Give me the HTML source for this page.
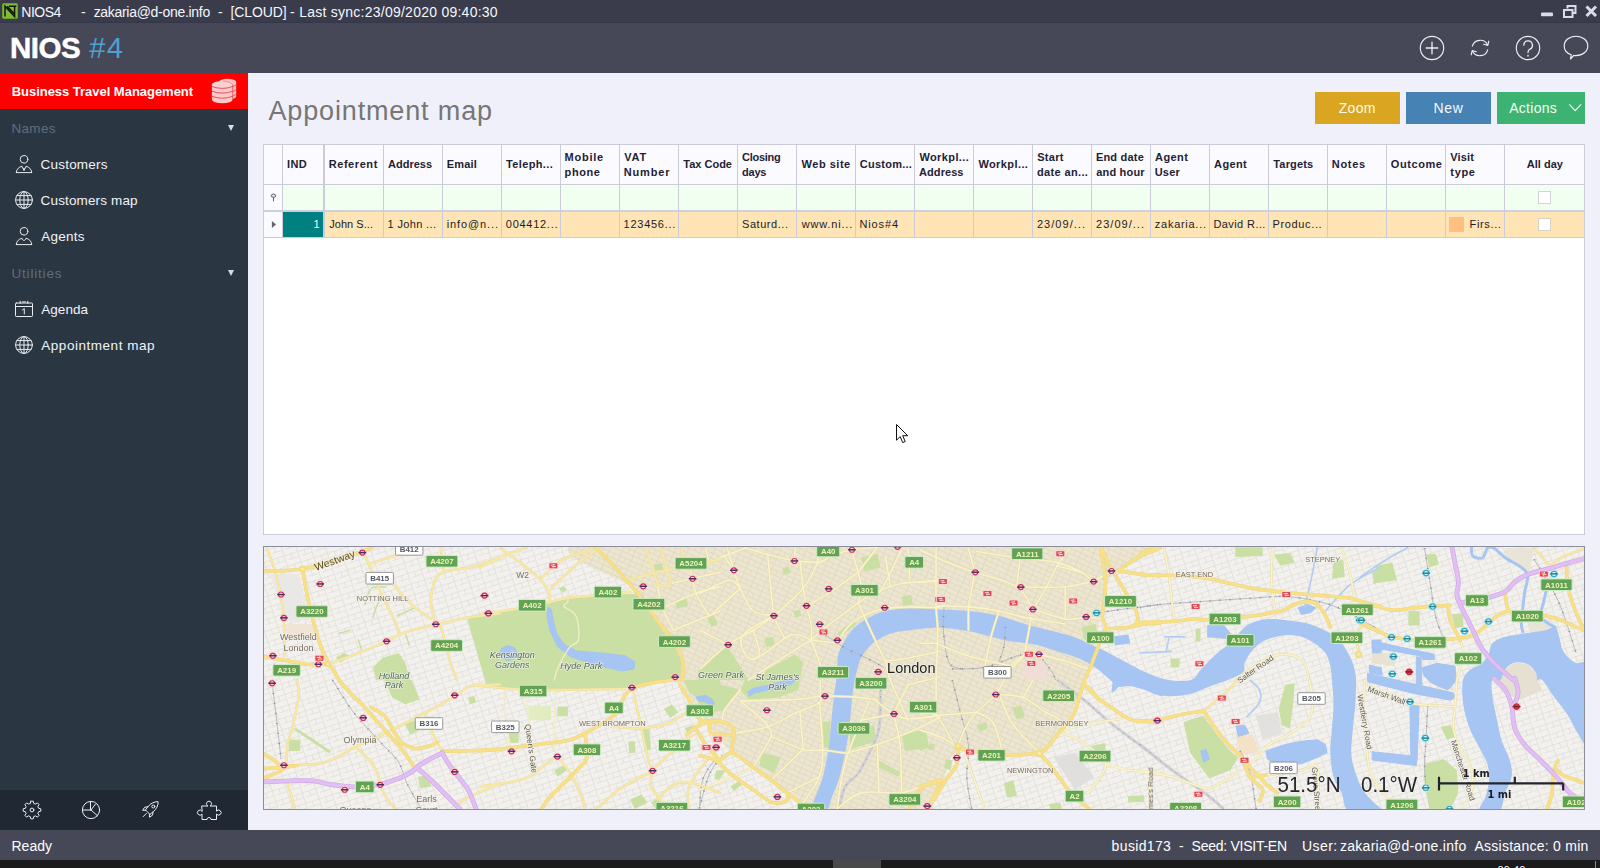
<!DOCTYPE html>
<html lang="en">
<head>
<meta charset="utf-8">
<title>NIOS4 - Appointment map</title>
<style>
*{box-sizing:border-box;margin:0;padding:0}
html,body{width:1600px;height:868px;overflow:hidden;background:#f0f0fa}
body{position:relative;font-family:"Liberation Sans","DejaVu Sans",sans-serif}
.b{position:absolute;display:block}
.t{position:absolute;white-space:pre;display:block}
#map{position:absolute;left:263px;top:546px;width:1322px;height:264px;border:1px solid #8b8d9b;overflow:hidden;background:#f3f1ed}
#map svg{position:absolute;left:0;top:0;display:block}
#map text{font-family:"Liberation Sans","DejaVu Sans",sans-serif}
</style>
</head>
<body>
<div class="b" style="left:0px;top:0px;width:1600px;height:23px;background:#3a3c4c;"></div>
<div class="b" style="left:0px;top:23px;width:1600px;height:50px;background:#464858;"></div>
<div class="b" style="left:0px;top:22px;width:1600px;height:1px;background:#34364a;"></div>
<div class="b" style="left:248px;top:73px;width:1352px;height:757px;background:#f0f0fa;"></div>
<div class="b" style="left:0px;top:73px;width:248px;height:717px;background:#2b3643;"></div>
<div class="b" style="left:0px;top:73px;width:248px;height:36px;background:#ff0000;"></div>
<div class="b" style="left:0px;top:790px;width:248px;height:40px;background:#1f2833;"></div>
<div class="b" style="left:0px;top:830px;width:1600px;height:30px;background:#464858;"></div>
<div class="b" style="left:0px;top:860px;width:1600px;height:8px;background:#1b1b1b;overflow:hidden"></div>
<div class="b" style="left:833px;top:860px;width:48px;height:8px;background:#4a4a4a;"></div>
<div class="b" style="left:1595px;top:861px;width:1px;height:7px;background:#8a8a8a;"></div>
<span class="t" style="left:21.28px;top:4.00px;font-size:14px;line-height:16px;color:#f4f6fb;letter-spacing:-0.499px;">NIOS4</span>
<span class="t" style="left:81.00px;top:4.00px;font-size:14px;line-height:16px;color:#f4f6fb;">-</span>
<span class="t" style="left:93.64px;top:4.00px;font-size:14px;line-height:16px;color:#f4f6fb;letter-spacing:-0.298px;">zakaria@d-one.info</span>
<span class="t" style="left:217.91px;top:4.00px;font-size:14px;line-height:16px;color:#f4f6fb;">-</span>
<span class="t" style="left:230.62px;top:4.00px;font-size:14px;line-height:16px;color:#f4f6fb;letter-spacing:-0.135px;">[CLOUD]</span>
<span class="t" style="left:290.10px;top:4.00px;font-size:14px;line-height:16px;color:#f4f6fb;letter-spacing:0.250px;">- Last sync:23/09/2020 09:40:30</span>
<svg class="b" style="left:2px;top:3px" width="16" height="16" viewBox="0 0 16 16"><rect x="0" y="0" width="16" height="16" rx="2.5" fill="#83bb35"/><rect x="0.5" y="0.5" width="15" height="15" rx="2.2" fill="none" stroke="#6a9c28" stroke-width="1"/><path d="M3 13.5V3.2L12.6 13.5V2.5M7 3.2H14.3M5.2 3.2L12.6 11" fill="none" stroke="#10180a" stroke-width="1.5" stroke-linejoin="miter"/></svg>
<svg class="b" style="left:1536px;top:2px" width="64" height="19" viewBox="1536 2 64 19"><rect x="1541" y="12.5" width="12" height="3.7" rx="1" fill="#d9dcec"/><path d="M1567.5 8.5V6H1575.5V13H1573" fill="none" stroke="#d9dcec" stroke-width="2"/><rect x="1564" y="10" width="8.5" height="7" fill="none" stroke="#d9dcec" stroke-width="2"/><path d="M1586.5 6.5L1596 16M1596 6.5L1586.5 16" stroke="#d9dcec" stroke-width="3" stroke-linecap="butt"/></svg>
<span class="t" style="left:9.98px;top:30.80px;font-size:29.5px;line-height:33px;color:#ffffff;font-weight:700;letter-spacing:-0.468px;-webkit-text-stroke:0.5px #fff;">NIOS</span>
<span class="t" style="left:89.23px;top:31.80px;font-size:29px;line-height:32px;color:#4aa3d3;letter-spacing:1.380px;">#4</span>
<svg class="b" style="left:1410px;top:30px" width="190" height="36" viewBox="1410 30 190 36" fill="none" stroke="#eef0f6" stroke-width="1.15" stroke-linecap="round" stroke-linejoin="round">
<circle cx="1432" cy="48" r="11.7"/><path d="M1432 42.2V53.8M1426.2 48H1437.8" stroke-width="1.3"/>
<path d="M1472.3 46.2A8.2 8.2 0 0 1 1487.6 45M1487.7 49.8A8.2 8.2 0 0 1 1472.4 51"/><path d="M1488.8 41.2L1487.8 45.4L1483.7 44.3M1471.2 54.8L1472.2 50.6L1476.3 51.7"/>
<circle cx="1528" cy="48" r="11.7"/><path d="M1523.8 45.2A4.3 4.3 0 1 1 1529.6 49.3C1528.4 50 1528 50.8 1528 52.5" stroke-width="1.25"/><path d="M1528 55.6V56" stroke-width="1.5"/>
<path d="M1576 36.2C1582.7 36.2 1587.8 40.5 1587.8 45.9C1587.8 51.3 1582.7 55.6 1576 55.6C1575.2 55.6 1574.4 55.5 1573.7 55.4L1570.6 59L1571.2 54.7C1567 53.2 1564.2 49.8 1564.2 45.9C1564.2 40.5 1569.3 36.2 1576 36.2Z"/>
</svg>
<span class="t" style="left:11.65px;top:84.00px;font-size:13px;line-height:15px;color:#ffffff;font-weight:700;letter-spacing:-0.024px;">Business Travel Management</span>
<svg class="b" style="left:210px;top:78px" width="28" height="28" viewBox="0 0 28 28"><path d="M18.8 4A8.700 3.300 0 0 1 26.200 4V18.500A8.700 3.300 0 0 1 18.800 21.500Z" fill="#ffb9b9"/><ellipse cx="17.500" cy="4" rx="8.700" ry="3.200" fill="#ffc4c4"/><path d="M1.900 6.500V21.600A10.400 3.600 0 0 0 22.700 21.600V6.500Z" fill="#ffc9c9"/><ellipse cx="12.300" cy="6.500" rx="10.400" ry="3.600" fill="#ffd0d0"/><path d="M1.900 8.5Q12.300 12.3 22.700 8.5" fill="none" stroke="#d3222f" stroke-width="0.7"/><path d="M1.900 13.2Q12.300 17.0 22.700 13.2" fill="none" stroke="#d3222f" stroke-width="0.7"/><path d="M1.900 18.3Q12.300 22.1 22.700 18.3" fill="none" stroke="#d3222f" stroke-width="0.7"/><path d="M22.700 6.500V21.600" stroke="#d3222f" stroke-width="0.6"/><path d="M13 3.200Q20 3.400 22.700 6.500" fill="none" stroke="#e0505a" stroke-width="0.5"/><path d="M23 8.6L26.200 7.0" stroke="#d3222f" stroke-width="0.6"/><path d="M23 13.4L26.200 11.8" stroke="#d3222f" stroke-width="0.6"/><path d="M23 18L26.200 16.4" stroke="#d3222f" stroke-width="0.6"/></svg>
<span class="t" style="left:11.42px;top:121.00px;font-size:13.5px;line-height:15px;color:#5e6d7f;letter-spacing:0.323px;">Names</span>
<div class="b" style="left:227.5px;top:124.8px;width:0;height:0;border-left:3.800px solid transparent;border-right:3.800px solid transparent;border-top:6.500px solid #d9dde3"></div>
<span class="t" style="left:40.62px;top:157.00px;font-size:13.5px;line-height:15px;color:#f1f3f6;letter-spacing:0.197px;">Customers</span>
<span class="t" style="left:40.62px;top:193.00px;font-size:13.5px;line-height:15px;color:#f1f3f6;letter-spacing:0.137px;">Customers map</span>
<span class="t" style="left:41.30px;top:229.00px;font-size:13.5px;line-height:15px;color:#f1f3f6;letter-spacing:0.231px;">Agents</span>
<span class="t" style="left:11.49px;top:266.00px;font-size:13.5px;line-height:15px;color:#5e6d7f;letter-spacing:0.810px;">Utilities</span>
<div class="b" style="left:227.5px;top:269.8px;width:0;height:0;border-left:3.800px solid transparent;border-right:3.800px solid transparent;border-top:6.500px solid #d9dde3"></div>
<span class="t" style="left:41.30px;top:302.00px;font-size:13.5px;line-height:15px;color:#f1f3f6;letter-spacing:0.025px;">Agenda</span>
<span class="t" style="left:41.30px;top:338.00px;font-size:13.5px;line-height:15px;color:#f1f3f6;letter-spacing:0.531px;">Appointment map</span>
<svg class="b" style="left:0;top:152px" width="48" height="24" viewBox="0 0 48 24" fill="none" stroke="#e9ecf0" stroke-width="1" stroke-linecap="round" stroke-linejoin="round"><circle cx="24" cy="7.300" r="3.800"/><path d="M16.300 20.600C16.400 17.400 18.300 15.400 21.700 14.300M31.700 20.600C31.600 17.400 29.700 15.400 26.300 14.300M16.300 20.600H31.700"/><path d="M21.700 14.300L24 18.300L26.300 14.300M24 18.300V16.200" /></svg>
<svg class="b" style="left:0;top:188px" width="48" height="24" viewBox="0 0 48 24" fill="none" stroke="#e9ecf0" stroke-width="1" stroke-linecap="round" stroke-linejoin="round"><circle cx="24" cy="12" r="8.400"/><ellipse cx="24" cy="12" rx="4.200" ry="8.400"/><path d="M24 3.600V20.400M15.600 12H32.400M16.900 7.600H31.100M16.900 16.400H31.100"/></svg>
<svg class="b" style="left:0;top:224px" width="48" height="24" viewBox="0 0 48 24" fill="none" stroke="#e9ecf0" stroke-width="1" stroke-linecap="round" stroke-linejoin="round"><circle cx="24" cy="7.300" r="3.800"/><path d="M16.300 20.600C16.400 17.400 18.300 15.400 21.700 14.300M31.700 20.600C31.600 17.400 29.700 15.400 26.300 14.300M16.300 20.600H31.700"/><path d="M21.700 14.300C22.500 15.800 23.200 16.400 24 16.400S25.500 15.800 26.300 14.300"/></svg>
<svg class="b" style="left:0;top:297px" width="48" height="24" viewBox="0 0 48 24" fill="none" stroke="#e9ecf0" stroke-width="1" stroke-linecap="round" stroke-linejoin="round"><rect x="15.500" y="6" width="17" height="13.500" rx="0.800"/><path d="M15.500 9.500H32.500M20.200 4.200V6.500M27.800 4.200V6.500M22.300 4.900H25.700"/><path d="M22.400 13.100L24.300 11.600V16.900" stroke-width="1"/></svg>
<svg class="b" style="left:0;top:333px" width="48" height="24" viewBox="0 0 48 24" fill="none" stroke="#e9ecf0" stroke-width="1" stroke-linecap="round" stroke-linejoin="round"><circle cx="24" cy="12" r="8.400"/><ellipse cx="24" cy="12" rx="4.200" ry="8.400"/><path d="M24 3.600V20.400M15.600 12H32.400M16.900 7.600H31.100M16.900 16.400H31.100"/></svg>
<svg class="b" style="left:0;top:790px" width="248" height="40" viewBox="0 790 248 40" fill="none" stroke="#eceff3" stroke-width="1" stroke-linecap="round" stroke-linejoin="round">
<path d="M30.82 801.18L33.18 801.18L33.74 803.43L35.42 804.12L37.40 802.92L39.08 804.60L37.88 806.58L38.57 808.26L40.82 808.82L40.82 811.18L38.57 811.74L37.88 813.42L39.08 815.40L37.40 817.08L35.42 815.88L33.74 816.57L33.18 818.82L30.82 818.82L30.26 816.57L28.58 815.88L26.60 817.08L24.92 815.40L26.12 813.42L25.43 811.74L23.18 811.18L23.18 808.82L25.43 808.26L26.12 806.58L24.92 804.60L26.60 802.92L28.58 804.12L30.26 803.43Z" stroke-linejoin="round"/><circle cx="32" cy="810" r="1.900"/>
<circle cx="91" cy="810" r="8.600"/><path d="M90.500 801.500V810M91 810L95.300 804.300M91 810H83.300M91 810L97.500 815.800"/>
<path d="M157.600 801.600C154.200 801.700 150.800 803.300 148.300 806.300L145.400 809.900L149.900 814.400L153.500 811.500C156.500 809 158.100 805.600 158.200 802.200Z"/><circle cx="153.300" cy="806.500" r="1.500"/><path d="M148 806.700L144.600 807.300L142.600 810.300L145.600 810.200M153.100 811.800L152.500 815.200L149.500 817.200L149.600 814.200M146.300 813.500L143.200 816.600"/>
<path d="M202 806H208A2.500 2.500 0 1 1 210 806H216.500V811.200A2.500 2.500 0 1 1 216.500 814V819.500H211A2 2 0 1 0 207 819.500H202V814A2.500 2.500 0 1 1 202 811.200Z"/>
</svg>
<span class="t" style="left:268.40px;top:96.00px;font-size:27px;line-height:30px;color:#767676;letter-spacing:0.862px;">Appointment map</span>
<div class="b" style="left:1315px;top:92px;width:85px;height:32px;background:#daa520;"></div>
<div class="b" style="left:1406px;top:92px;width:85px;height:32px;background:#4682b4;"></div>
<div class="b" style="left:1497px;top:92px;width:88px;height:32px;background:#3cb371;"></div>
<span class="t" style="left:1338.78px;top:100.00px;font-size:14px;line-height:16px;color:#fffbe8;letter-spacing:0.287px;">Zoom</span>
<span class="t" style="left:1433.48px;top:100.00px;font-size:14px;line-height:16px;color:#f4f8ff;letter-spacing:0.743px;">New</span>
<span class="t" style="left:1509.20px;top:100.00px;font-size:14px;line-height:16px;color:#f2fff6;letter-spacing:0.295px;">Actions</span>
<svg class="b" style="left:1566px;top:100px" width="18" height="14" viewBox="1566 100 18 14"><path d="M1569.300 104.300L1575.200 110.700L1581.100 104.300" fill="none" stroke="#e9f8ee" stroke-width="1.150"/></svg>
<div class="b" style="left:263px;top:144px;width:1322px;height:391px;background:#ffffff;border:1px solid #cbcbda"></div>
<div class="b" style="left:264px;top:145px;width:1320px;height:39px;background:#fbfbff;"></div>
<div class="b" style="left:283px;top:185px;width:1301px;height:25px;background:#f0fff0;"></div>
<div class="b" style="left:264px;top:185px;width:18px;height:25px;background:#fbfbff;"></div>
<div class="b" style="left:264px;top:212px;width:18px;height:25px;background:#fbfbff;"></div>
<div class="b" style="left:283px;top:212px;width:1301px;height:25px;background:#ffe4b5;"></div>
<div class="b" style="left:283px;top:212px;width:40px;height:25px;background:#008080;"></div>
<div class="b" style="left:264px;top:184px;width:1320px;height:1px;background:#cbcbda;"></div>
<div class="b" style="left:264px;top:210px;width:1320px;height:2px;background:#cdcfdc;"></div>
<div class="b" style="left:264px;top:237px;width:1320px;height:1px;background:#cbcbda;"></div>
<div class="b" style="left:282px;top:145px;width:1px;height:93px;background:#cbcbda;"></div>
<div class="b" style="left:324px;top:145px;width:1px;height:93px;background:#cbcbda;"></div>
<div class="b" style="left:383px;top:145px;width:1px;height:93px;background:#cbcbda;"></div>
<div class="b" style="left:442px;top:145px;width:1px;height:93px;background:#cbcbda;"></div>
<div class="b" style="left:501px;top:145px;width:1px;height:93px;background:#cbcbda;"></div>
<div class="b" style="left:560px;top:145px;width:1px;height:93px;background:#cbcbda;"></div>
<div class="b" style="left:619px;top:145px;width:1px;height:93px;background:#cbcbda;"></div>
<div class="b" style="left:678px;top:145px;width:1px;height:93px;background:#cbcbda;"></div>
<div class="b" style="left:737px;top:145px;width:1px;height:93px;background:#cbcbda;"></div>
<div class="b" style="left:796px;top:145px;width:1px;height:93px;background:#cbcbda;"></div>
<div class="b" style="left:855px;top:145px;width:1px;height:93px;background:#cbcbda;"></div>
<div class="b" style="left:914px;top:145px;width:1px;height:93px;background:#cbcbda;"></div>
<div class="b" style="left:973px;top:145px;width:1px;height:93px;background:#cbcbda;"></div>
<div class="b" style="left:1032px;top:145px;width:1px;height:93px;background:#cbcbda;"></div>
<div class="b" style="left:1091px;top:145px;width:1px;height:93px;background:#cbcbda;"></div>
<div class="b" style="left:1150px;top:145px;width:1px;height:93px;background:#cbcbda;"></div>
<div class="b" style="left:1209px;top:145px;width:1px;height:93px;background:#cbcbda;"></div>
<div class="b" style="left:1268px;top:145px;width:1px;height:93px;background:#cbcbda;"></div>
<div class="b" style="left:1327px;top:145px;width:1px;height:93px;background:#cbcbda;"></div>
<div class="b" style="left:1386px;top:145px;width:1px;height:93px;background:#cbcbda;"></div>
<div class="b" style="left:1445px;top:145px;width:1px;height:93px;background:#cbcbda;"></div>
<div class="b" style="left:1504px;top:145px;width:1px;height:93px;background:#cbcbda;"></div>
<div class="b" style="left:323px;top:145px;width:1px;height:93px;background:#cbcbda;"></div>
<span class="t" style="left:286.89px;top:158.00px;font-size:11px;line-height:12px;color:#1f2233;font-weight:700;letter-spacing:0.454px;">IND</span>
<span class="t" style="left:328.69px;top:158.00px;font-size:11px;line-height:12px;color:#1f2233;font-weight:700;letter-spacing:0.570px;">Referent</span>
<span class="t" style="left:388.12px;top:158.00px;font-size:11px;line-height:12px;color:#1f2233;font-weight:700;letter-spacing:-0.019px;">Address</span>
<span class="t" style="left:446.79px;top:158.00px;font-size:11px;line-height:12px;color:#1f2233;font-weight:700;letter-spacing:0.161px;">Email</span>
<span class="t" style="left:506.09px;top:158.00px;font-size:11px;line-height:12px;color:#1f2233;font-weight:700;letter-spacing:0.356px;">Teleph...</span>
<span class="t" style="left:683.29px;top:158.00px;font-size:11px;line-height:12px;color:#1f2233;font-weight:700;">Tax Code</span>
<span class="t" style="left:801.60px;top:158.00px;font-size:11px;line-height:12px;color:#1f2233;font-weight:700;letter-spacing:0.506px;">Web site</span>
<span class="t" style="left:859.86px;top:158.00px;font-size:11px;line-height:12px;color:#1f2233;font-weight:700;letter-spacing:0.222px;">Custom...</span>
<span class="t" style="left:978.40px;top:158.00px;font-size:11px;line-height:12px;color:#1f2233;font-weight:700;letter-spacing:0.411px;">Workpl...</span>
<span class="t" style="left:1214.12px;top:158.00px;font-size:11px;line-height:12px;color:#1f2233;font-weight:700;letter-spacing:0.357px;">Agent</span>
<span class="t" style="left:1273.29px;top:158.00px;font-size:11px;line-height:12px;color:#1f2233;font-weight:700;letter-spacing:0.168px;">Targets</span>
<span class="t" style="left:1331.79px;top:158.00px;font-size:11px;line-height:12px;color:#1f2233;font-weight:700;letter-spacing:0.706px;">Notes</span>
<span class="t" style="left:1390.76px;top:158.00px;font-size:11px;line-height:12px;color:#1f2233;font-weight:700;letter-spacing:0.590px;">Outcome</span>
<span class="t" style="left:1526.82px;top:158.00px;font-size:11px;line-height:12px;color:#1f2233;font-weight:700;letter-spacing:0.008px;">All day</span>
<span class="t" style="left:564.58px;top:151.00px;font-size:11px;line-height:12px;color:#1f2233;font-weight:700;letter-spacing:0.752px;">Mobile</span>
<span class="t" style="left:564.58px;top:166.00px;font-size:11px;line-height:12px;color:#1f2233;font-weight:700;letter-spacing:0.600px;">phone</span>
<span class="t" style="left:624.35px;top:151.00px;font-size:11px;line-height:12px;color:#1f2233;font-weight:700;letter-spacing:0.694px;">VAT</span>
<span class="t" style="left:623.68px;top:166.00px;font-size:11px;line-height:12px;color:#1f2233;font-weight:700;letter-spacing:0.860px;">Number</span>
<span class="t" style="left:742.06px;top:151.00px;font-size:11px;line-height:12px;color:#1f2233;font-weight:700;letter-spacing:-0.277px;">Closing</span>
<span class="t" style="left:742.06px;top:166.00px;font-size:11px;line-height:12px;color:#1f2233;font-weight:700;letter-spacing:-0.233px;">days</span>
<span class="t" style="left:919.40px;top:151.00px;font-size:11px;line-height:12px;color:#1f2233;font-weight:700;letter-spacing:0.398px;">Workpl...</span>
<span class="t" style="left:919.12px;top:166.00px;font-size:11px;line-height:12px;color:#1f2233;font-weight:700;letter-spacing:0.048px;">Address</span>
<span class="t" style="left:1037.20px;top:151.00px;font-size:11px;line-height:12px;color:#1f2233;font-weight:700;letter-spacing:0.315px;">Start</span>
<span class="t" style="left:1037.06px;top:166.00px;font-size:11px;line-height:12px;color:#1f2233;font-weight:700;letter-spacing:0.355px;">date an...</span>
<span class="t" style="left:1095.88px;top:151.00px;font-size:11px;line-height:12px;color:#1f2233;font-weight:700;letter-spacing:0.204px;">End date</span>
<span class="t" style="left:1096.30px;top:166.00px;font-size:11px;line-height:12px;color:#1f2233;font-weight:700;letter-spacing:0.174px;">and hour</span>
<span class="t" style="left:1155.02px;top:151.00px;font-size:11px;line-height:12px;color:#1f2233;font-weight:700;letter-spacing:0.419px;">Agent</span>
<span class="t" style="left:1154.64px;top:166.00px;font-size:11px;line-height:12px;color:#1f2233;font-weight:700;letter-spacing:0.250px;">User</span>
<span class="t" style="left:1450.35px;top:151.00px;font-size:11px;line-height:12px;color:#1f2233;font-weight:700;letter-spacing:0.137px;">Visit</span>
<span class="t" style="left:1450.29px;top:166.00px;font-size:11px;line-height:12px;color:#1f2233;font-weight:700;letter-spacing:0.687px;">type</span>
<span class="t" style="left:313.57px;top:218.00px;font-size:11px;line-height:12px;color:#ffffff;">1</span>
<span class="t" style="left:329.23px;top:218.00px;font-size:11px;line-height:12px;color:#1c1c22;letter-spacing:0.042px;">John S...</span>
<span class="t" style="left:387.57px;top:218.00px;font-size:11px;line-height:12px;color:#1c1c22;letter-spacing:0.353px;">1 John ...</span>
<span class="t" style="left:446.79px;top:218.00px;font-size:11px;line-height:12px;color:#1c1c22;letter-spacing:0.877px;">info@n...</span>
<span class="t" style="left:505.79px;top:218.00px;font-size:11px;line-height:12px;color:#1c1c22;letter-spacing:0.729px;">004412...</span>
<span class="t" style="left:623.57px;top:218.00px;font-size:11px;line-height:12px;color:#1c1c22;letter-spacing:0.743px;">123456...</span>
<span class="t" style="left:742.00px;top:218.00px;font-size:11px;line-height:12px;color:#1c1c22;letter-spacing:0.551px;">Saturd...</span>
<span class="t" style="left:801.63px;top:218.00px;font-size:11px;line-height:12px;color:#1c1c22;letter-spacing:0.833px;">www.ni...</span>
<span class="t" style="left:859.42px;top:218.00px;font-size:11px;line-height:12px;color:#1c1c22;letter-spacing:0.889px;">Nios#4</span>
<span class="t" style="left:1036.95px;top:218.00px;font-size:11px;line-height:12px;color:#1c1c22;letter-spacing:1.038px;">23/09/...</span>
<span class="t" style="left:1096.05px;top:218.00px;font-size:11px;line-height:12px;color:#1c1c22;letter-spacing:1.025px;">23/09/...</span>
<span class="t" style="left:1154.86px;top:218.00px;font-size:11px;line-height:12px;color:#1c1c22;letter-spacing:0.722px;">zakaria...</span>
<span class="t" style="left:1213.52px;top:218.00px;font-size:11px;line-height:12px;color:#1c1c22;letter-spacing:0.398px;">David R...</span>
<span class="t" style="left:1272.52px;top:218.00px;font-size:11px;line-height:12px;color:#1c1c22;letter-spacing:0.643px;">Produc...</span>
<span class="t" style="left:1469.62px;top:218.00px;font-size:11px;line-height:12px;color:#1c1c22;letter-spacing:0.628px;">Firs...</span>
<div class="b" style="left:1449px;top:217px;width:15px;height:15px;background:#ffbf80;"></div>
<div class="b" style="left:1538px;top:191px;width:13px;height:13px;background:#ffffff;border:1px solid #d2d2dc"></div>
<div class="b" style="left:1538px;top:218px;width:13px;height:13px;background:#ffffff;border:1px solid #d9d2c4"></div>
<svg class="b" style="left:266px;top:188px" width="16" height="46" viewBox="266 188 16 46"><path d="M271.900 220.900L276 224.500L271.900 228.100Z" fill="#62656e"/><ellipse cx="273.500" cy="195.700" rx="2.300" ry="1.600" fill="#e9e9ee" stroke="#5d616c" stroke-width="1"/><path d="M273.500 197.300V201.300" stroke="#5d616c" stroke-width="1"/></svg>
<span class="t" style="left:11.48px;top:838.00px;font-size:14px;line-height:16px;color:#ffffff;letter-spacing:0.015px;">Ready</span>
<span class="t" style="left:1111.62px;top:837.50px;font-size:14px;line-height:16px;color:#ffffff;letter-spacing:0.352px;">busid173</span>
<span class="t" style="left:1179.11px;top:837.50px;font-size:14px;line-height:16px;color:#ffffff;">-</span>
<span class="t" style="left:1191.57px;top:837.50px;font-size:14px;line-height:16px;color:#ffffff;letter-spacing:-0.261px;">Seed: VISIT-EN</span>
<span class="t" style="left:1302.05px;top:837.50px;font-size:14px;line-height:16px;color:#ffffff;letter-spacing:0.438px;">User:</span>
<span class="t" style="left:1340.04px;top:837.50px;font-size:14px;line-height:16px;color:#ffffff;letter-spacing:0.266px;">zakaria@d-one.info</span>
<span class="t" style="left:1474.40px;top:837.50px;font-size:14px;line-height:16px;color:#ffffff;letter-spacing:0.268px;">Assistance: 0 min</span>
<span class="t" style="left:1497.59px;top:864.00px;font-size:11px;line-height:12px;color:#ffffff;letter-spacing:0.074px;">09:40</span>
<svg class="b" style="left:895px;top:423px" width="16" height="22" viewBox="0 0 16 22"><path d="M1.500 1.500V17.200L5.200 13.600L7.700 19.600L10.200 18.500L7.700 12.700H12.700Z" fill="#ffffff" stroke="#111" stroke-width="1" stroke-linejoin="miter"/></svg>
<div id="map">
<svg width="1320" height="262" viewBox="264 547 1320 262">
<defs>
<pattern id="g1" width="14" height="11" patternUnits="userSpaceOnUse" patternTransform="rotate(-18)"><path d="M0 0.500H14M0.500 0V11M7.500 0V5.500M3.500 5.500H14" fill="none" stroke="#dcd9d3" stroke-width="0.6"/></pattern>
<pattern id="g2" width="12" height="10" patternUnits="userSpaceOnUse" patternTransform="rotate(24)"><path d="M0 0.500H12M0.500 0V10M6.500 5V10M0 5.500H12" fill="none" stroke="#dbd3bc" stroke-width="0.6"/></pattern>
<filter id="soft" x="-2%" y="-5%" width="104%" height="110%"><feGaussianBlur stdDeviation="0.62"/></filter>
<filter id="soft2" x="-20%" y="-20%" width="140%" height="140%"><feGaussianBlur stdDeviation="0.38"/></filter>
<linearGradient id="pkg" x1="0" y1="0" x2="1" y2="0"><stop offset="0" stop-color="#c9dea6"/><stop offset="1" stop-color="#cfe2ad"/></linearGradient>
</defs>
<g filter="url(#soft)">
<rect x="254" y="537" width="1340" height="282" fill="#f3f1ed"/>
<rect x="254" y="537" width="1340" height="282" fill="url(#g1)"/>
<path d="M598.0 540.0C518.0 548.0 623.0 576.0 632.0 588.0C641.0 600.0 644.7 600.7 652.0 612.0C659.3 623.3 671.3 645.0 676.0 656.0C680.7 667.0 677.3 670.7 680.0 678.0C682.7 685.3 687.3 692.3 692.0 700.0C696.7 707.7 703.3 717.3 708.0 724.0C712.7 730.7 715.3 734.7 720.0 740.0C724.7 745.3 728.0 749.3 736.0 756.0C744.0 762.7 757.3 772.7 768.0 780.0C778.7 787.3 792.7 794.0 800.0 800.0C807.3 806.0 791.0 813.3 812.0 816.0C833.0 818.7 906.0 818.7 926.0 816.0C946.0 813.3 928.8 806.8 932.0 800.0C935.2 793.2 940.8 783.0 945.0 775.0C949.2 767.0 947.8 755.5 957.0 752.0C966.2 748.5 986.2 754.0 1000.0 754.0C1013.8 754.0 1029.3 756.3 1040.0 752.0C1050.7 747.7 1057.3 738.0 1064.0 728.0C1070.7 718.0 1074.7 706.0 1080.0 692.0C1085.3 678.0 1092.7 656.7 1096.0 644.0C1099.3 631.3 1098.0 626.7 1100.0 616.0C1102.0 605.3 1106.0 592.7 1108.0 580.0C1110.0 567.3 1197.0 546.7 1112.0 540.0C1027.0 533.3 678.0 532.0 598.0 540.0Z" fill="#ece5cf"/>
<path d="M598.0 540.0C518.0 548.0 623.0 576.0 632.0 588.0C641.0 600.0 644.7 600.7 652.0 612.0C659.3 623.3 671.3 645.0 676.0 656.0C680.7 667.0 677.3 670.7 680.0 678.0C682.7 685.3 687.3 692.3 692.0 700.0C696.7 707.7 703.3 717.3 708.0 724.0C712.7 730.7 715.3 734.7 720.0 740.0C724.7 745.3 728.0 749.3 736.0 756.0C744.0 762.7 757.3 772.7 768.0 780.0C778.7 787.3 792.7 794.0 800.0 800.0C807.3 806.0 791.0 813.3 812.0 816.0C833.0 818.7 906.0 818.7 926.0 816.0C946.0 813.3 928.8 806.8 932.0 800.0C935.2 793.2 940.8 783.0 945.0 775.0C949.2 767.0 947.8 755.5 957.0 752.0C966.2 748.5 986.2 754.0 1000.0 754.0C1013.8 754.0 1029.3 756.3 1040.0 752.0C1050.7 747.7 1057.3 738.0 1064.0 728.0C1070.7 718.0 1074.7 706.0 1080.0 692.0C1085.3 678.0 1092.7 656.7 1096.0 644.0C1099.3 631.3 1098.0 626.7 1100.0 616.0C1102.0 605.3 1106.0 592.7 1108.0 580.0C1110.0 567.3 1197.0 546.7 1112.0 540.0C1027.0 533.3 678.0 532.0 598.0 540.0Z" fill="url(#g2)"/>
<polygon points="1500.3,680 1505.2,669 1514.8,662.600 1527.7,664.2 1535.8,672.3 1537.4,680 1542,690 1520,700 1500,690" fill="#e6e0d2"/>
<polygon points="269.7,573.9 298.7,573.9 306.8,607.7 310.0,620.6 287.4,620.6 274.5,588.4" fill="#e9e8e7"/>
<polygon points="285.8,623.9 313.2,623.9 318.1,636.8 287.4,636.8" fill="#f0e4d6"/>
<polygon points="528.4,705.8 551.0,705.8 551.0,720.3 528.4,720.3" fill="#e1ecc0"/>
<polygon points="1505.2,548.1 1534.2,548.1 1529.4,572.3 1505.2,559.4" fill="#e9e4d8"/>
<polygon points="1527.7,619.0 1551.9,619.0 1555.2,630.3 1531.0,635.2" fill="#e9e4d8"/>
<polygon points="1201.3,728.4 1211.0,725.2 1219.0,741.3 1209.4,744.5" fill="#f2d6d0"/>
<polygon points="1235.2,733.2 1252.9,734.8 1259.4,752.6 1240.0,755.8" fill="#f3e1c8"/>
<polygon points="1256.1,715.5 1277.1,712.3 1281.9,733.2 1262.6,739.7" fill="#e2e1e0"/>
<polygon points="1053.9,757.4 1074.8,752.6 1094.2,776.8 1074.8,789.7" fill="#e0dfde"/>
<polygon points="1023.2,662.6 1042.6,661.0 1049.0,680.0 1026.5,680.0" fill="#f1dcd8"/>
<polygon points="1372.1,651.3 1396.1,655.0 1395.1,666.1 1371.2,663.3" fill="#e9e1d2"/>
<polygon points="1431.1,673.4 1449.5,675.3 1453.2,690.0 1436.6,688.2" fill="#e9e1d2"/>
<path d="M364.8 604.5C365.9 601.8 367.8 591.4 371.3 588.4C374.8 585.4 383.4 587.1 385.8 586.8" fill="none" stroke="#cadfa4" stroke-width="1.600" stroke-linecap="round"/>
<path d="M372.9 617.4C374.0 614.7 376.7 604.2 379.4 601.3C382.1 598.3 387.4 600.0 389.0 599.7" fill="none" stroke="#cadfa4" stroke-width="1.600" stroke-linecap="round"/>
<path d="M397.1 615.8 L414.8 607.7" fill="none" stroke="#cadfa4" stroke-width="1.600" stroke-linecap="round"/>
<path d="M339.0 633.5 L350.3 630.3" fill="none" stroke="#cadfa4" stroke-width="1.600" stroke-linecap="round"/>
<path d="M358.4 640.0 L361.6 649.7" fill="none" stroke="#cadfa4" stroke-width="1.600" stroke-linecap="round"/>
<path d="M406.0 635.2 L409.2 644.8" fill="none" stroke="#cadfa4" stroke-width="1.600" stroke-linecap="round"/>
<polygon points="372.9,667.4 382.6,657.7 398.7,652.9 405.2,662.6 410.0,680.0 376.1,680.0" fill="#cadfa4"/>
<polygon points="335.8,657.7 343.9,652.9 350.3,656.1 340.6,662.6" fill="#cadfa4"/>
<polygon points="384.2,680.0 411.6,680.0 419.7,699.4 405.2,704.2 392.3,697.7" fill="#cadfa4"/>
<polygon points="292.3,728.4 297.1,728.4 331.0,751.0 329.4,753.4" fill="#cadfa4"/>
<polygon points="289.0,739.7 300.3,739.7 300.3,751.0 289.0,751.0" fill="#cadfa4"/>
<polygon points="405.2,723.5 416.5,720.3 419.7,730.0 410.0,734.8" fill="#cadfa4"/>
<polygon points="418.1,776.8 429.4,775.2 431.0,786.5 419.7,788.1" fill="#cadfa4"/>
<polygon points="468.1,697.7 474.5,696.1 476.1,702.6 469.7,704.2" fill="#cadfa4"/>
<polygon points="467.1,618.1 480.0,614.2 518.7,608.5 549.4,602.1 567.1,598.1 592.9,595.6 630.0,594.0 642.9,594.8 651.0,612.6 662.3,630.3 675.2,648.1 681.6,662.6 680.0,680.0 484.8,680.0" fill="#cadfa4"/>
<polygon points="675.2,599.7 686.5,598.1 688.1,606.1 676.8,608.5" fill="#cadfa4"/>
<polygon points="705.8,615.8 712.3,614.2 717.9,623.9 712.3,626.3" fill="#cadfa4"/>
<polygon points="654.2,564.2 662.3,563.4 663.1,569.8 655.0,570.6" fill="#cadfa4"/>
<polygon points="559.0,588.4 563.9,586.0 567.1,590.0 562.3,592.4" fill="#cadfa4"/>
<polygon points="484.8,679.2 680.8,679.2 665.5,680.8 641.3,684.8 625.2,688.4 555.8,689.4 520.3,688.4 486.5,686.8" fill="#cadfa4"/>
<polygon points="663.9,709.0 671.9,704.2 678.4,712.3 670.3,717.9" fill="#cadfa4"/>
<polygon points="683.5,680.0 720.0,680.0 720.0,702.6 705.8,704.2 689.7,692.9" fill="#cadfa4"/>
<polygon points="557.4,706.6 567.9,706.6 567.9,716.3 557.4,716.3" fill="#cadfa4"/>
<polygon points="628.4,741.3 634.8,741.3 635.6,752.6 629.2,753.4" fill="#cadfa4"/>
<polygon points="642.9,728.4 649.4,728.4 651.0,749.4 644.5,751.0" fill="#cadfa4"/>
<polygon points="554.2,770.3 563.9,765.5 567.1,770.3 557.4,776.8" fill="#cadfa4"/>
<polygon points="630.0,799.4 641.3,794.5 647.7,802.6 634.8,809.0" fill="#cadfa4"/>
<polygon points="651.0,802.6 657.4,797.7 662.3,804.2 655.8,809.0" fill="#cadfa4"/>
<polygon points="509.0,733.2 518.7,733.2 518.7,742.9 509.0,742.9" fill="#cadfa4"/>
<polygon points="684.8,728.4 691.3,725.2 694.5,728.4 688.1,733.2" fill="#cadfa4"/>
<polygon points="698.4,680.0 698.4,669.0 727.4,646.5 741.9,669.0 748.4,680.0" fill="#cadfa4"/>
<polygon points="759.7,680.0 767.7,669.0 795.2,654.5 803.2,662.6 800.0,680.0" fill="#cadfa4"/>
<polygon points="782.3,568.2 788.7,566.6 790.3,573.1 783.9,574.7" fill="#cadfa4"/>
<polygon points="793.5,611.0 800.0,609.4 801.6,615.8 795.2,617.4" fill="#cadfa4"/>
<polygon points="764.5,638.4 772.6,636.8 775.0,644.8 766.1,647.3" fill="#cadfa4"/>
<polygon points="706.5,615.8 712.9,613.4 717.7,623.9 711.3,627.1" fill="#cadfa4"/>
<polygon points="861.3,557.7 877.4,553.7 880.6,567.4 864.5,571.5" fill="#cadfa4"/>
<polygon points="901.6,596.5 911.3,594.8 912.9,604.5 903.2,606.1" fill="#cadfa4"/>
<polygon points="837.1,633.5 853.2,620.6 856.5,623.9 840.3,636.8" fill="#cadfa4"/>
<polygon points="745.2,679.2 800.0,679.2 798.4,689.7 777.4,697.7 748.4,699.4 740.3,689.7" fill="#cadfa4"/>
<polygon points="698.4,679.2 740.3,689.7 724.2,710.6 712.9,712.3 698.4,704.2" fill="#cadfa4"/>
<polygon points="822.6,721.9 830.6,721.1 829.0,747.7 824.2,747.7" fill="#cadfa4"/>
<polygon points="850.0,728.4 874.2,725.2 875.8,741.3 850.0,749.4" fill="#cadfa4"/>
<polygon points="901.6,733.2 925.8,730.0 929.0,747.7 904.8,751.0" fill="#cadfa4"/>
<polygon points="761.3,752.6 780.6,757.4 774.2,773.5 759.7,765.5" fill="#cadfa4"/>
<polygon points="716.1,770.3 725.8,770.3 719.4,780.0 714.5,778.4" fill="#cadfa4"/>
<polygon points="730.6,786.5 740.3,780.0 741.9,784.8 733.9,791.3" fill="#cadfa4"/>
<polygon points="879.0,760.6 900.0,771.9 898.4,776.8 877.4,767.1" fill="#cadfa4"/>
<polygon points="1081.3,627.1 1095.8,623.9 1097.4,636.8 1084.5,640.0" fill="#cadfa4"/>
<polygon points="1011.9,707.4 1021.6,705.8 1024.8,717.1 1016.8,719.5" fill="#cadfa4"/>
<polygon points="976.5,725.2 986.1,721.9 987.7,728.4 979.7,731.6" fill="#cadfa4"/>
<polygon points="920.0,731.6 926.5,733.2 928.1,747.7 920.0,751.0" fill="#cadfa4"/>
<polygon points="928.1,744.5 934.5,743.7 934.5,749.4 928.9,750.2" fill="#cadfa4"/>
<polygon points="945.8,759.0 952.3,760.6 950.6,770.3 944.2,767.9" fill="#cadfa4"/>
<polygon points="1003.9,783.2 1013.5,780.0 1016.8,796.1 1007.1,797.7" fill="#cadfa4"/>
<polygon points="1091.0,746.1 1105.5,742.9 1105.5,751.0 1094.2,752.6" fill="#cadfa4"/>
<polygon points="1128.1,796.1 1144.2,795.3 1144.2,801.8 1128.1,802.6" fill="#cadfa4"/>
<polygon points="1049.0,804.2 1060.3,802.6 1061.9,809.0 1050.6,809.0" fill="#cadfa4"/>
<polygon points="1235.2,547.3 1262.6,547.3 1262.6,556.1 1235.2,556.9" fill="#cadfa4"/>
<polygon points="1273.9,554.5 1290.0,552.9 1294.8,562.6 1280.3,565.8" fill="#cadfa4"/>
<polygon points="1333.5,562.6 1343.2,559.4 1344.8,577.1 1331.9,578.7" fill="#cadfa4"/>
<polygon points="1195.6,628.7 1200.5,628.7 1200.5,641.6 1195.6,641.6" fill="#cadfa4"/>
<polygon points="1170.6,658.5 1179.5,658.5 1179.5,667.4 1170.6,667.4" fill="#cadfa4"/>
<polygon points="1372.3,572.3 1381.1,569.0 1381.1,581.9 1373.9,583.5" fill="#cadfa4"/>
<polygon points="1183.5,721.9 1202.9,715.5 1215.8,733.2 1230.3,751.0 1238.4,757.4 1230.3,770.3 1209.4,778.4 1190.0,752.6" fill="#cadfa4"/>
<polygon points="1285.2,684.8 1294.8,683.2 1293.2,704.2 1290.0,728.4 1281.9,725.2 1278.7,709.0" fill="#cadfa4"/>
<polygon points="1376.1,565.8 1392.3,562.6 1397.1,580.3 1372.9,583.5" fill="#cadfa4"/>
<polygon points="1426.1,554.5 1435.8,553.7 1439.0,564.2 1429.4,567.4" fill="#cadfa4"/>
<polygon points="1408.4,611.0 1419.7,611.0 1419.7,625.5 1408.4,625.5" fill="#cadfa4"/>
<polygon points="1451.9,614.2 1463.2,613.4 1463.2,627.1 1455.2,627.9" fill="#cadfa4"/>
<polygon points="1424.5,763.9 1443.9,759.0 1456.8,770.3 1458.4,792.9 1450.3,809.0 1429.4,809.0 1424.5,784.8" fill="#cadfa4"/>
<polygon points="1440.6,726.8 1450.3,725.2 1456.8,736.5 1447.1,739.7" fill="#cadfa4"/>
<path d="M811.3 812.0C809.4 809.9 812.9 804.2 814.5 799.4C816.1 794.6 819.1 789.1 821.0 783.2C822.9 777.3 824.5 770.4 825.8 763.9C827.1 757.4 828.0 751.8 829.0 744.5C830.0 737.2 830.7 728.4 831.5 720.3C832.3 712.2 833.1 702.8 833.9 696.1C834.7 689.4 835.8 684.5 836.3 680.0C836.8 675.5 836.7 673.5 837.1 669.0C837.5 664.5 837.4 657.7 838.7 652.9C840.1 648.1 842.5 644.3 845.2 640.0C847.9 635.7 850.8 630.9 854.8 627.1C858.8 623.3 864.3 620.1 869.4 617.4C874.5 614.7 878.8 612.5 885.5 611.0C892.2 609.5 900.6 608.8 909.7 608.5C918.8 608.2 930.2 609.0 940.0 609.4C949.8 609.8 958.8 610.0 968.4 611.0C978.0 612.0 988.0 613.4 997.4 615.5C1006.8 617.6 1016.2 621.4 1024.8 623.9C1033.4 626.4 1040.9 628.1 1049.0 630.3C1057.1 632.4 1066.5 634.5 1073.2 636.8C1079.9 639.1 1084.0 641.6 1089.4 644.0C1094.8 646.4 1098.8 647.9 1105.5 651.3C1112.2 654.7 1123.1 660.8 1129.7 664.2C1136.3 667.7 1139.3 669.5 1145.0 672.0C1150.7 674.5 1158.2 677.5 1164.0 679.0C1169.8 680.5 1175.2 681.0 1180.0 681.0C1184.8 681.0 1189.5 681.0 1193.0 679.0C1196.5 677.0 1197.2 673.4 1201.3 669.0C1205.4 664.6 1212.6 657.2 1217.4 652.9C1222.2 648.6 1226.5 646.7 1230.3 643.2C1234.1 639.7 1236.8 635.1 1240.0 631.9C1243.2 628.7 1244.9 626.0 1249.7 623.9C1254.5 621.8 1260.4 619.3 1269.0 619.0C1277.6 618.7 1293.2 620.9 1301.3 622.3C1309.4 623.6 1312.6 625.2 1317.4 627.1C1322.2 629.0 1326.3 630.8 1330.3 633.5C1334.3 636.2 1338.4 639.4 1341.6 643.2C1344.8 647.0 1347.5 651.8 1349.7 656.1C1351.9 660.4 1353.5 665.0 1354.5 669.0C1355.5 673.0 1355.9 674.1 1356.0 680.0C1356.1 685.9 1355.8 696.1 1355.3 704.2C1354.8 712.3 1353.6 720.3 1352.9 728.4C1352.2 736.5 1351.0 745.6 1351.3 752.6C1351.6 759.6 1352.6 764.1 1354.5 770.3C1356.4 776.5 1359.4 784.3 1362.6 789.7C1365.8 795.1 1370.7 798.9 1373.9 802.6C1377.1 806.3 1386.0 810.4 1382.0 812.0C1378.0 813.6 1356.4 815.2 1349.7 812.0C1343.0 808.8 1344.3 798.8 1341.6 792.9C1338.9 787.0 1335.4 783.5 1333.5 776.8C1331.6 770.1 1330.6 760.7 1330.3 752.6C1330.0 744.5 1331.4 736.5 1331.9 728.4C1332.4 720.3 1333.5 712.3 1333.5 704.2C1333.5 696.1 1332.4 686.4 1331.9 680.0C1331.4 673.6 1331.4 670.3 1330.3 665.8C1329.2 661.3 1328.2 656.7 1325.5 652.9C1322.8 649.1 1318.2 645.9 1314.2 643.2C1310.2 640.5 1306.1 638.1 1301.3 636.8C1296.5 635.5 1291.1 634.7 1285.2 635.2C1279.3 635.7 1271.2 637.6 1265.8 640.0C1260.4 642.4 1256.4 645.9 1252.9 649.7C1249.4 653.5 1246.4 658.9 1244.8 662.6C1243.2 666.3 1246.0 669.1 1243.2 672.0C1240.4 674.9 1233.6 677.6 1228.0 680.0C1222.4 682.4 1215.2 684.4 1209.4 686.5C1203.6 688.6 1198.9 691.3 1193.2 692.9C1187.5 694.5 1181.7 695.8 1175.5 696.1C1169.3 696.4 1161.0 695.6 1156.1 694.5C1151.1 693.4 1150.2 691.1 1145.8 689.7C1141.4 688.3 1134.3 686.5 1129.7 686.0C1125.1 685.5 1121.6 687.5 1118.4 686.5C1115.2 685.5 1113.8 682.9 1110.3 680.0C1106.8 677.1 1102.2 672.4 1097.4 669.0C1092.6 665.6 1088.0 662.4 1081.3 659.4C1074.6 656.4 1064.6 653.7 1057.1 651.3C1049.6 648.9 1041.5 646.1 1036.1 644.8C1030.7 643.4 1030.7 644.1 1024.8 643.2C1018.9 642.3 1009.2 641.1 1000.6 639.2C992.0 637.3 982.6 633.8 973.2 631.9C963.8 630.0 952.6 628.4 944.2 627.9C935.8 627.4 931.1 627.9 922.6 628.7C914.1 629.5 900.8 631.0 893.5 632.7C886.2 634.5 883.0 636.9 879.0 639.2C875.0 641.5 872.4 643.4 869.4 646.5C866.4 649.6 863.3 654.0 861.3 657.7C859.3 661.5 858.4 665.3 857.3 669.0C856.2 672.7 855.6 675.5 854.8 680.0C854.0 684.5 853.2 689.4 852.4 696.1C851.6 702.8 850.9 712.2 850.0 720.3C849.1 728.4 847.9 737.8 846.8 744.5C845.7 751.2 844.9 754.7 843.5 760.6C842.1 766.5 840.6 774.1 838.7 780.0C836.8 785.9 834.4 790.8 832.3 796.1C830.1 801.4 829.3 809.4 825.8 812.0C822.3 814.6 813.2 814.1 811.3 812.0Z" fill="#a6c5f2"/>
<path d="M1555.2 627.1C1552.9 626.0 1550.6 629.2 1545.5 630.3C1540.4 631.4 1531.2 632.4 1524.5 633.5C1517.8 634.6 1510.6 635.2 1505.2 636.8C1499.8 638.4 1495.0 640.5 1492.3 643.2C1489.6 645.9 1490.9 649.4 1489.0 652.9C1487.1 656.4 1484.0 661.5 1481.0 664.2C1478.0 666.9 1474.3 666.4 1471.3 669.0C1468.3 671.6 1464.3 674.1 1463.0 680.0C1461.7 685.9 1462.1 696.1 1463.2 704.2C1464.3 712.3 1467.0 721.1 1469.7 728.4C1472.4 735.6 1476.5 741.8 1479.4 747.7C1482.4 753.6 1485.8 758.5 1487.4 763.9C1489.0 769.3 1489.3 774.6 1489.0 780.0C1488.7 785.4 1487.4 790.8 1485.8 796.1C1484.2 801.4 1477.2 809.4 1479.4 812.0C1481.6 814.6 1494.4 815.2 1498.7 812.0C1503.0 808.8 1503.1 798.8 1505.2 792.9C1507.3 787.0 1510.8 782.2 1511.6 776.8C1512.4 771.4 1511.6 766.5 1510.0 760.6C1508.4 754.7 1504.1 748.0 1501.9 741.3C1499.8 734.6 1498.7 727.8 1497.1 720.3C1495.5 712.8 1493.1 702.8 1492.3 696.1C1491.5 689.4 1491.0 682.7 1492.3 680.0C1493.6 677.3 1498.1 681.8 1500.3 680.0C1502.5 678.2 1502.8 671.9 1505.2 669.0C1507.6 666.1 1511.0 663.4 1514.8 662.6C1518.5 661.8 1524.2 662.6 1527.7 664.2C1531.2 665.8 1534.2 669.7 1535.8 672.3C1537.4 674.9 1536.3 678.7 1537.4 680.0C1538.5 681.3 1539.6 677.3 1542.3 680.0C1545.0 682.7 1549.2 690.2 1553.5 696.1C1557.8 702.0 1564.0 709.3 1568.0 715.5C1572.0 721.7 1574.0 728.4 1577.7 733.2C1581.4 738.0 1588.0 755.2 1590.0 744.5C1592.0 733.8 1592.6 682.6 1590.0 669.0C1587.4 655.4 1579.0 665.6 1574.5 662.6C1570.0 659.6 1565.8 655.6 1563.2 651.3C1560.7 647.0 1560.5 640.8 1559.2 636.8C1557.9 632.8 1557.5 628.2 1555.2 627.1Z" fill="#a6c5f2"/>
<polygon points="547.7,607.7 551.0,608.5 553.4,620.6 556.6,633.5 564.7,644.8 576.8,651.0 609.0,653.7 625.2,655.8 634.8,661.8 634.0,669.0 621.9,671.0 592.9,664.5 570.3,656.5 557.4,646.5 549.7,630.3 546.9,615.8" fill="#a6c5f2" stroke="#a6c5f2" stroke-width="1" stroke-linejoin="round"/>
<polygon points="500.2,652.9 501.8,648.1 508.2,645.6 514.7,647.7 516.8,652.9 514.7,658.5 508.2,660.6 502.3,658.5" fill="#a6c5f2" stroke="#a6c5f2" stroke-width="1" stroke-linejoin="round"/>
<polygon points="696.1,696.9 705.8,695.3 712.3,699.4 714.7,704.2 709.0,704.2 705.8,701.0 697.7,700.2" fill="#a6c5f2" stroke="#a6c5f2" stroke-width="1" stroke-linejoin="round"/>
<polygon points="747.6,692.1 753.2,688.1 767.7,685.6 790.3,679.2 796.8,679.2 790.3,684.8 769.4,689.7 754.8,692.9 749.2,696.1" fill="#a6c5f2" stroke="#a6c5f2" stroke-width="1" stroke-linejoin="round"/>
<polygon points="698.4,696.9 706.5,696.9 711.3,701.8 709.7,705.8 704.8,701.8 698.4,701.0" fill="#a6c5f2" stroke="#a6c5f2" stroke-width="1" stroke-linejoin="round"/>
<polygon points="1113.5,636.8 1128.1,635.2 1129.7,643.2 1115.2,644.8" fill="#a6c5f2" stroke="#a6c5f2" stroke-width="1" stroke-linejoin="round"/>
<polygon points="1113.5,679.2 1161.9,679.2 1161.9,696.1 1145.8,689.7 1129.7,684.8 1118.4,686.5 1113.5,691.3 1111.9,692.1" fill="#a6c5f2" stroke="#a6c5f2" stroke-width="1" stroke-linejoin="round"/>
<polygon points="1207.7,625.5 1223.9,625.5 1230.3,633.5 1236.8,636.8 1230.3,638.7 1207.7,636.8" fill="#a6c5f2" stroke="#a6c5f2" stroke-width="1" stroke-linejoin="round"/>
<polygon points="1298.1,607.7 1307.7,604.5 1315.8,607.7 1311.0,612.6 1301.3,614.5" fill="#a6c5f2" stroke="#a6c5f2" stroke-width="1" stroke-linejoin="round"/>
<polygon points="1372.3,640.0 1381.1,640.0 1381.1,652.9 1372.3,652.9" fill="#a6c5f2" stroke="#a6c5f2" stroke-width="1" stroke-linejoin="round"/>
<polygon points="1370.6,667.4 1381.1,667.4 1381.1,673.9 1370.6,673.9" fill="#a6c5f2" stroke="#a6c5f2" stroke-width="1" stroke-linejoin="round"/>
<polygon points="1200.5,751.0 1206.1,749.4 1209.4,759.0 1203.7,762.3" fill="#a6c5f2" stroke="#a6c5f2" stroke-width="1" stroke-linejoin="round"/>
<polygon points="1236.0,726.0 1244.8,725.2 1248.9,733.2 1238.4,736.5" fill="#a6c5f2" stroke="#a6c5f2" stroke-width="1" stroke-linejoin="round"/>
<polygon points="1265.8,751.0 1285.2,744.5 1301.3,741.3 1317.4,739.7 1325.5,744.5 1327.1,752.6 1317.4,757.4 1301.3,763.9 1275.5,763.9 1267.4,759.0" fill="#a6c5f2" stroke="#a6c5f2" stroke-width="1" stroke-linejoin="round"/>
<polygon points="1372.1,640.6 1394.2,645.8 1433.8,654.1 1434.8,659.6 1422.8,659.6 1420.9,655.9 1372.1,647.6" fill="#a6c5f2" stroke="#a6c5f2" stroke-width="1" stroke-linejoin="round"/>
<polygon points="1369.3,665.1 1381.3,667.9 1382.2,675.3 1369.3,672.5" fill="#a6c5f2" stroke="#a6c5f2" stroke-width="1" stroke-linejoin="round"/>
<polygon points="1416.3,656.9 1420.9,656.9 1421.9,684.5 1416.3,684.5" fill="#a6c5f2" stroke="#a6c5f2" stroke-width="1" stroke-linejoin="round"/>
<polygon points="1367.5,673.4 1416.3,684.5 1453.2,692.8 1456.0,697.4 1450.4,700.2 1414.5,693.7 1367.5,681.7" fill="#a6c5f2" stroke="#a6c5f2" stroke-width="1" stroke-linejoin="round"/>
<polygon points="1421.9,667.9 1436.6,663.3 1455.0,666.1 1456.0,680.8 1447.7,690.0 1431.1,682.7 1423.7,675.3" fill="#a6c5f2" stroke="#a6c5f2" stroke-width="1" stroke-linejoin="round"/>
<polygon points="1409.9,704.8 1419.1,705.7 1417.3,756.4 1410.8,756.4" fill="#a6c5f2" stroke="#a6c5f2" stroke-width="1" stroke-linejoin="round"/>
<polygon points="1372.1,751.8 1417.3,756.4 1416.3,765.6 1372.1,760.0" fill="#a6c5f2" stroke="#a6c5f2" stroke-width="1" stroke-linejoin="round"/>
<path d="M1317.4 546.5C1316.3 552.1 1313.2 570.1 1311.0 580.3C1308.8 590.5 1305.6 603.1 1304.5 607.7" fill="none" stroke="#b4cdf3" stroke-width="1.7"/>
<path d="M1380.0 567.4C1375.0 570.4 1358.8 577.9 1349.7 585.2C1340.6 592.5 1329.5 606.7 1325.5 611.0" fill="none" stroke="#b4cdf3" stroke-width="1.7"/>
<path d="M1164.2 636.8 L1185.2 636.8" fill="none" stroke="#b4cdf3" stroke-width="1.7"/>
<path d="M1140.0 652.9 L1172.3 651.3" fill="none" stroke="#b4cdf3" stroke-width="1.7"/>
<path d="M1169.0 638.4 L1165.8 652.9" fill="none" stroke="#b4cdf3" stroke-width="1.7"/>
<path d="M1249.7 680.0C1251.3 681.6 1257.8 685.9 1259.4 689.7C1261.0 693.5 1261.6 698.0 1259.4 702.6C1257.2 707.2 1248.7 714.7 1246.5 717.1" fill="none" stroke="#b4cdf3" stroke-width="1.7"/>
<path d="M1471.3 546.5C1471.6 548.1 1471.0 554.2 1472.9 556.1C1474.8 558.0 1480.2 559.0 1482.6 557.7C1485.0 556.4 1485.5 549.7 1487.4 548.1C1489.3 546.5 1490.9 546.5 1493.9 548.1C1496.9 549.7 1500.6 554.5 1505.2 557.7C1509.8 560.9 1517.5 564.4 1521.3 567.4C1525.0 570.4 1527.2 571.2 1527.7 575.5C1528.2 579.8 1525.3 587.8 1524.5 593.2C1523.7 598.6 1523.4 602.6 1522.9 607.7C1522.4 612.8 1521.3 619.9 1521.3 623.9C1521.3 627.9 1522.6 630.6 1522.9 631.9" fill="none" stroke="#a6c5f2" stroke-width="3" stroke-linecap="round"/>
<path d="M1547.1 585.2C1546.6 587.9 1545.0 596.2 1543.9 601.3C1542.8 606.4 1539.8 612.0 1540.6 615.8C1541.4 619.6 1546.3 622.0 1548.7 623.9C1551.1 625.8 1554.1 626.6 1555.2 627.1" fill="none" stroke="#a6c5f2" stroke-width="3" stroke-linecap="round"/>
<path d="M1360.0 577.1C1364.0 574.4 1376.1 566.0 1384.2 561.0C1392.3 556.0 1404.4 549.6 1408.4 547.3" fill="none" stroke="#b4cdf3" stroke-width="1.7"/>
<path d="M332.6 680.0C336.1 685.4 345.2 701.5 353.5 712.3C361.8 723.0 375.1 736.2 382.6 744.5C390.1 752.8 394.7 755.8 398.7 762.3C402.7 768.8 403.0 775.4 406.8 783.2C410.6 791.0 418.9 804.7 421.3 809.0" fill="none" stroke="#b4b4bd" stroke-width="0.9"/>
<path d="M332.6 680.0C336.1 685.4 345.2 701.5 353.5 712.3C361.8 723.0 375.1 736.2 382.6 744.5C390.1 752.8 394.7 755.8 398.7 762.3C402.7 768.8 403.0 775.4 406.8 783.2C410.6 791.0 418.9 804.7 421.3 809.0" fill="none" stroke="#8f8f9a" stroke-width="1.8" stroke-dasharray="1 9"/>
<path d="M272.1 683.2C272.8 688.6 274.6 702.9 276.1 715.5C277.6 728.1 280.2 751.8 281.0 759.0" fill="none" stroke="#b4b4bd" stroke-width="0.9"/>
<path d="M272.1 683.2C272.8 688.6 274.6 702.9 276.1 715.5C277.6 728.1 280.2 751.8 281.0 759.0" fill="none" stroke="#8f8f9a" stroke-width="1.8" stroke-dasharray="1 9"/>
<path d="M713.9 760.6C712.0 763.8 705.0 771.9 702.6 780.0C700.2 788.1 699.9 804.2 699.4 809.0" fill="none" stroke="#b4b4bd" stroke-width="0.9"/>
<path d="M713.9 760.6C712.0 763.8 705.0 771.9 702.6 780.0C700.2 788.1 699.9 804.2 699.4 809.0" fill="none" stroke="#8f8f9a" stroke-width="1.8" stroke-dasharray="1 9"/>
<path d="M825.8 635.2C829.0 637.4 838.2 644.2 845.2 648.1C852.2 652.0 861.2 655.3 867.7 658.5C874.2 661.7 881.2 665.9 883.9 667.4" fill="none" stroke="#b4b4bd" stroke-width="0.9"/>
<path d="M825.8 635.2C829.0 637.4 838.2 644.2 845.2 648.1C852.2 652.0 861.2 655.3 867.7 658.5C874.2 661.7 881.2 665.9 883.9 667.4" fill="none" stroke="#8f8f9a" stroke-width="1.8" stroke-dasharray="1 9"/>
<path d="M880.6 689.7C880.3 696.2 880.9 717.9 879.0 728.4C877.1 738.9 872.9 745.1 869.4 752.6C865.9 760.1 862.1 767.9 858.1 773.5C854.1 779.1 848.4 780.6 845.2 786.5C842.0 792.4 839.8 805.2 838.7 809.0" fill="none" stroke="#cfcfd5" stroke-width="3"/>
<path d="M880.6 689.7C880.3 696.2 880.9 717.9 879.0 728.4C877.1 738.9 872.9 745.1 869.4 752.6C865.9 760.1 862.1 767.9 858.1 773.5C854.1 779.1 848.4 780.6 845.2 786.5C842.0 792.4 839.8 805.2 838.7 809.0" fill="none" stroke="#9b9ba6" stroke-width="0.8" stroke-dasharray="1.5 5"/>
<path d="M722.6 755.8C720.5 758.8 713.5 765.2 709.7 773.5C705.9 781.8 701.6 800.4 700.0 805.8" fill="none" stroke="#b4b4bd" stroke-width="0.9"/>
<path d="M722.6 755.8C720.5 758.8 713.5 765.2 709.7 773.5C705.9 781.8 701.6 800.4 700.0 805.8" fill="none" stroke="#8f8f9a" stroke-width="1.8" stroke-dasharray="1 9"/>
<path d="M944.2 606.1C944.1 610.1 942.6 620.9 943.4 630.3C944.2 639.7 945.9 656.1 949.0 662.6C952.1 669.1 959.8 667.9 961.9 669.0" fill="none" stroke="#b4b4bd" stroke-width="0.9"/>
<path d="M944.2 606.1C944.1 610.1 942.6 620.9 943.4 630.3C944.2 639.7 945.9 656.1 949.0 662.6C952.1 669.1 959.8 667.9 961.9 669.0" fill="none" stroke="#8f8f9a" stroke-width="1.8" stroke-dasharray="1 9"/>
<path d="M1005.5 627.1C1005.2 630.3 1005.2 640.0 1003.9 646.5C1002.5 653.0 998.5 662.6 997.4 665.8" fill="none" stroke="#b4b4bd" stroke-width="0.9"/>
<path d="M1005.5 627.1C1005.2 630.3 1005.2 640.0 1003.9 646.5C1002.5 653.0 998.5 662.6 997.4 665.8" fill="none" stroke="#8f8f9a" stroke-width="1.8" stroke-dasharray="1 9"/>
<path d="M1042.6 659.4C1044.2 661.5 1050.1 668.9 1052.3 672.3C1054.5 675.7 1055.0 678.7 1055.5 680.0" fill="none" stroke="#b4b4bd" stroke-width="0.9"/>
<path d="M1042.6 659.4C1044.2 661.5 1050.1 668.9 1052.3 672.3C1054.5 675.7 1055.0 678.7 1055.5 680.0" fill="none" stroke="#8f8f9a" stroke-width="1.8" stroke-dasharray="1 9"/>
<path d="M952.3 669.0C957.7 668.7 973.8 669.5 984.5 667.4C995.2 665.2 1009.8 658.2 1016.8 656.1C1023.8 654.0 1024.9 654.8 1026.5 654.5" fill="none" stroke="#b4b4bd" stroke-width="0.9"/>
<path d="M952.3 669.0C957.7 668.7 973.8 669.5 984.5 667.4C995.2 665.2 1009.8 658.2 1016.8 656.1C1023.8 654.0 1024.9 654.8 1026.5 654.5" fill="none" stroke="#8f8f9a" stroke-width="1.8" stroke-dasharray="1 9"/>
<path d="M1097.4 612.6C1101.4 612.1 1111.2 610.8 1121.6 609.4C1132.0 608.0 1153.6 605.3 1160.0 604.5" fill="none" stroke="#b4b4bd" stroke-width="0.9"/>
<path d="M1097.4 612.6C1101.4 612.1 1111.2 610.8 1121.6 609.4C1132.0 608.0 1153.6 605.3 1160.0 604.5" fill="none" stroke="#8f8f9a" stroke-width="1.8" stroke-dasharray="1 9"/>
<path d="M1057.1 680.0C1061.1 683.0 1071.9 690.2 1081.3 697.7C1090.7 705.2 1102.8 716.6 1113.5 725.2C1124.2 733.8 1138.0 743.5 1145.8 749.4C1153.5 755.3 1157.6 758.7 1160.0 760.6" fill="none" stroke="#cfcfd5" stroke-width="3"/>
<path d="M1057.1 680.0C1061.1 683.0 1071.9 690.2 1081.3 697.7C1090.7 705.2 1102.8 716.6 1113.5 725.2C1124.2 733.8 1138.0 743.5 1145.8 749.4C1153.5 755.3 1157.6 758.7 1160.0 760.6" fill="none" stroke="#9b9ba6" stroke-width="0.8" stroke-dasharray="1.5 5"/>
<path d="M952.3 680.0C953.6 685.4 957.6 701.5 960.3 712.3C963.0 723.0 967.3 733.8 968.4 744.5C969.5 755.2 966.3 766.0 966.8 776.8C967.3 787.5 970.8 803.6 971.6 809.0" fill="none" stroke="#b4b4bd" stroke-width="0.9"/>
<path d="M952.3 680.0C953.6 685.4 957.6 701.5 960.3 712.3C963.0 723.0 967.3 733.8 968.4 744.5C969.5 755.2 966.3 766.0 966.8 776.8C967.3 787.5 970.8 803.6 971.6 809.0" fill="none" stroke="#8f8f9a" stroke-width="1.8" stroke-dasharray="1 9"/>
<path d="M1140.0 607.7C1143.2 607.2 1148.7 605.6 1159.4 604.5C1170.2 603.4 1188.9 602.4 1204.5 601.3C1220.1 600.2 1239.5 598.9 1252.9 598.1C1266.4 597.3 1274.5 596.0 1285.2 596.5C1296.0 597.0 1308.0 599.1 1317.4 601.3C1326.8 603.4 1331.2 604.6 1341.6 609.4C1352.0 614.2 1373.6 626.8 1380.0 630.3" fill="none" stroke="#b4b4bd" stroke-width="0.9"/>
<path d="M1140.0 607.7C1143.2 607.2 1148.7 605.6 1159.4 604.5C1170.2 603.4 1188.9 602.4 1204.5 601.3C1220.1 600.2 1239.5 598.9 1252.9 598.1C1266.4 597.3 1274.5 596.0 1285.2 596.5C1296.0 597.0 1308.0 599.1 1317.4 601.3C1326.8 603.4 1331.2 604.6 1341.6 609.4C1352.0 614.2 1373.6 626.8 1380.0 630.3" fill="none" stroke="#8f8f9a" stroke-width="1.8" stroke-dasharray="1 9"/>
<path d="M1140.0 744.5C1145.4 748.8 1161.5 762.2 1172.3 770.3C1183.0 778.4 1195.9 786.4 1204.5 792.9C1213.1 799.4 1220.7 806.3 1223.9 809.0" fill="none" stroke="#cfcfd5" stroke-width="3"/>
<path d="M1140.0 744.5C1145.4 748.8 1161.5 762.2 1172.3 770.3C1183.0 778.4 1195.9 786.4 1204.5 792.9C1213.1 799.4 1220.7 806.3 1223.9 809.0" fill="none" stroke="#9b9ba6" stroke-width="0.8" stroke-dasharray="1.5 5"/>
<path d="M1240.0 751.0C1241.6 754.2 1247.0 760.6 1249.7 770.3C1252.4 780.0 1255.0 802.5 1256.1 809.0" fill="none" stroke="#b4b4bd" stroke-width="0.9"/>
<path d="M1240.0 751.0C1241.6 754.2 1247.0 760.6 1249.7 770.3C1252.4 780.0 1255.0 802.5 1256.1 809.0" fill="none" stroke="#8f8f9a" stroke-width="1.8" stroke-dasharray="1 9"/>
<path d="M1424.5 548.1C1425.6 554.8 1429.1 576.9 1431.0 588.4C1432.9 599.9 1433.6 608.8 1435.8 617.4C1438.0 626.0 1442.6 636.2 1443.9 640.0" fill="none" stroke="#b4b4bd" stroke-width="0.9"/>
<path d="M1424.5 548.1C1425.6 554.8 1429.1 576.9 1431.0 588.4C1432.9 599.9 1433.6 608.8 1435.8 617.4C1438.0 626.0 1442.6 636.2 1443.9 640.0" fill="none" stroke="#8f8f9a" stroke-width="1.8" stroke-dasharray="1 9"/>
<path d="M1534.2 559.4C1538.2 566.4 1551.4 585.7 1558.4 601.3C1565.4 616.9 1573.1 644.3 1576.1 652.9" fill="none" stroke="#b4b4bd" stroke-width="0.9"/>
<path d="M1534.2 559.4C1538.2 566.4 1551.4 585.7 1558.4 601.3C1565.4 616.9 1573.1 644.3 1576.1 652.9" fill="none" stroke="#8f8f9a" stroke-width="1.8" stroke-dasharray="1 9"/>
<path d="M1427.7 705.8C1427.4 711.2 1426.6 728.1 1426.1 738.1C1425.6 748.1 1424.5 757.2 1424.5 765.5C1424.5 773.8 1425.8 784.3 1426.1 788.1" fill="none" stroke="#b4b4bd" stroke-width="0.9"/>
<path d="M1427.7 705.8C1427.4 711.2 1426.6 728.1 1426.1 738.1C1425.6 748.1 1424.5 757.2 1424.5 765.5C1424.5 773.8 1425.8 784.3 1426.1 788.1" fill="none" stroke="#8f8f9a" stroke-width="1.8" stroke-dasharray="1 9"/>
<path d="M567.1 591.6C567.2 593.2 568.4 598.9 567.9 601.3C567.4 603.7 563.0 604.2 563.9 606.1C564.8 608.0 571.2 610.2 573.5 612.6C575.8 615.0 576.8 616.0 577.6 620.6C578.4 625.2 579.6 635.7 578.4 640.0C577.2 644.3 572.7 643.8 570.3 646.5C567.9 649.2 566.0 652.4 563.9 656.1C561.8 659.9 559.0 665.0 557.4 669.0C555.8 673.0 554.7 678.2 554.2 680.0" fill="none" stroke="#f1ebc8" stroke-width="1.5" stroke-linecap="round" stroke-linejoin="round"/>
<path d="M525.2 689.7C525.7 694.8 527.3 710.6 528.4 720.3C529.5 730.0 530.8 739.4 531.6 747.7C532.4 756.0 532.9 766.5 533.2 770.3" fill="none" stroke="#f1ebc8" stroke-width="1.5" stroke-linecap="round" stroke-linejoin="round"/>
<path d="M555.8 689.7C555.5 698.8 553.9 733.4 554.2 744.5C554.5 755.6 556.9 754.6 557.4 756.6" fill="none" stroke="#f1ebc8" stroke-width="1.5" stroke-linecap="round" stroke-linejoin="round"/>
<path d="M504.2 689.7C504.5 694.8 504.6 710.1 505.8 720.3C507.0 730.5 510.6 745.9 511.5 751.0" fill="none" stroke="#f1ebc8" stroke-width="1.5" stroke-linecap="round" stroke-linejoin="round"/>
<path d="M727.4 548.1C728.5 551.9 731.8 563.9 733.9 570.6C736.0 577.3 737.1 581.7 740.3 588.4C743.5 595.1 747.7 606.4 753.2 611.0C758.7 615.6 770.0 615.0 773.4 615.8" fill="none" stroke="#e4dbad" stroke-width="2.5" stroke-linecap="round" stroke-linejoin="round"/>
<path d="M700.0 567.4C704.0 565.5 716.7 559.3 724.2 556.1C731.7 552.9 741.7 549.4 745.2 548.1" fill="none" stroke="#e4dbad" stroke-width="2.5" stroke-linecap="round" stroke-linejoin="round"/>
<path d="M700.0 669.0C704.6 665.0 718.5 651.2 727.4 644.8C736.3 638.3 745.5 635.1 753.2 630.3C760.9 625.5 767.2 620.6 773.4 615.8C779.6 611.0 785.3 605.9 790.3 601.3C795.3 596.7 798.9 594.3 803.2 588.4C807.5 582.5 813.4 572.6 816.1 565.8C818.8 558.9 818.9 550.4 819.4 547.3" fill="none" stroke="#e4dbad" stroke-width="2.5" stroke-linecap="round" stroke-linejoin="round"/>
<path d="M800.0 561.0C800.5 565.6 802.1 580.9 803.2 588.4C804.3 595.9 805.1 599.9 806.5 606.1C807.9 612.3 810.5 619.9 811.3 625.5C812.1 631.1 811.3 637.6 811.3 640.0" fill="none" stroke="#e4dbad" stroke-width="2.5" stroke-linecap="round" stroke-linejoin="round"/>
<path d="M811.3 640.0C813.7 637.9 820.1 631.7 825.8 627.1C831.4 622.5 839.8 616.6 845.2 612.6C850.6 608.6 852.7 606.4 858.1 602.9C863.5 599.4 870.1 594.8 877.4 591.6C884.6 588.4 891.2 585.2 901.6 583.5C912.0 581.8 933.6 581.5 940.0 581.1" fill="none" stroke="#e4dbad" stroke-width="2.5" stroke-linecap="round" stroke-linejoin="round"/>
<path d="M851.6 549.7C852.7 553.5 856.5 565.8 858.1 572.3C859.7 578.8 861.3 583.3 861.3 588.4C861.3 593.5 858.6 600.5 858.1 602.9" fill="none" stroke="#e4dbad" stroke-width="2.5" stroke-linecap="round" stroke-linejoin="round"/>
<path d="M858.1 602.9C859.7 606.4 864.5 616.9 867.7 623.9C870.9 630.9 874.4 638.6 877.4 644.8C880.4 651.0 884.1 658.3 885.5 661.0" fill="none" stroke="#e4dbad" stroke-width="2.5" stroke-linecap="round" stroke-linejoin="round"/>
<path d="M811.3 640.0C807.8 639.2 800.0 632.0 790.3 635.2C780.6 638.4 761.3 659.1 753.2 659.4C745.1 659.7 738.5 644.1 741.9 636.8C745.3 629.5 768.1 619.3 773.4 615.8" fill="none" stroke="#e4dbad" stroke-width="2.5" stroke-linecap="round" stroke-linejoin="round"/>
<path d="M811.3 640.0C812.1 642.1 814.5 648.3 816.1 652.9C817.7 657.5 819.9 662.9 821.0 667.4C822.1 671.9 822.3 677.9 822.6 680.0" fill="none" stroke="#e4dbad" stroke-width="2.5" stroke-linecap="round" stroke-linejoin="round"/>
<path d="M819.4 562.6C823.7 560.7 835.5 553.8 845.2 551.3C854.9 548.8 872.0 548.0 877.4 547.3" fill="none" stroke="#e4dbad" stroke-width="2.5" stroke-linecap="round" stroke-linejoin="round"/>
<path d="M773.4 615.8C775.1 619.3 781.1 633.6 783.9 636.8C786.7 640.0 789.2 635.5 790.3 635.2" fill="none" stroke="#e4dbad" stroke-width="2.5" stroke-linecap="round" stroke-linejoin="round"/>
<path d="M794.4 561.0 L819.4 562.6" fill="none" stroke="#e4dbad" stroke-width="2.5" stroke-linecap="round" stroke-linejoin="round"/>
<path d="M877.4 591.6C878.2 591.1 878.3 595.4 882.3 588.4C886.3 581.4 898.4 556.2 901.6 549.7" fill="none" stroke="#e4dbad" stroke-width="2.5" stroke-linecap="round" stroke-linejoin="round"/>
<path d="M908.1 548.1 L909.7 580.3" fill="none" stroke="#e4dbad" stroke-width="2.5" stroke-linecap="round" stroke-linejoin="round"/>
<path d="M733.9 733.2C739.5 732.1 757.2 730.3 767.7 726.8C778.2 723.3 788.2 716.3 796.8 712.3C805.4 708.3 815.5 705.6 819.4 702.6C823.3 699.6 820.1 698.3 820.2 694.5C820.3 690.7 820.2 682.4 820.2 680.0" fill="none" stroke="#e4dbad" stroke-width="2.5" stroke-linecap="round" stroke-linejoin="round"/>
<path d="M767.7 726.8C768.2 728.4 773.4 729.8 771.0 736.5C768.6 743.2 756.2 762.0 753.2 767.1" fill="none" stroke="#e4dbad" stroke-width="2.5" stroke-linecap="round" stroke-linejoin="round"/>
<path d="M740.3 689.7C737.6 693.2 727.2 705.4 724.2 710.6C721.2 715.8 722.9 719.4 722.6 721.1" fill="none" stroke="#e4dbad" stroke-width="2.5" stroke-linecap="round" stroke-linejoin="round"/>
<path d="M740.3 701.0C744.3 704.5 759.9 717.6 764.5 721.9C769.1 726.2 767.2 726.0 767.7 726.8" fill="none" stroke="#e4dbad" stroke-width="2.5" stroke-linecap="round" stroke-linejoin="round"/>
<path d="M819.4 702.6C819.9 710.4 822.6 737.0 822.6 749.4C822.6 761.8 822.6 767.9 819.4 776.8C816.2 785.7 805.9 798.3 803.2 802.6" fill="none" stroke="#e4dbad" stroke-width="2.5" stroke-linecap="round" stroke-linejoin="round"/>
<path d="M771.0 736.5C776.4 738.6 794.3 747.1 803.2 749.4C812.1 751.7 816.9 749.5 824.2 750.2C831.5 750.9 843.0 752.9 846.8 753.4" fill="none" stroke="#e4dbad" stroke-width="2.5" stroke-linecap="round" stroke-linejoin="round"/>
<path d="M800.0 712.3 L803.2 749.4" fill="none" stroke="#e4dbad" stroke-width="2.5" stroke-linecap="round" stroke-linejoin="round"/>
<path d="M829.0 696.1C833.0 696.2 845.7 696.4 853.2 696.9C860.7 697.4 870.7 699.0 874.2 699.4" fill="none" stroke="#e4dbad" stroke-width="2.5" stroke-linecap="round" stroke-linejoin="round"/>
<path d="M869.4 701.0C868.0 704.2 864.8 711.7 861.3 720.3C857.8 728.9 851.6 743.2 848.4 752.6C845.2 762.0 843.8 767.4 841.9 776.8C840.0 786.2 837.9 803.6 837.1 809.0" fill="none" stroke="#e4dbad" stroke-width="2.5" stroke-linecap="round" stroke-linejoin="round"/>
<path d="M848.4 752.6C853.2 751.2 865.8 748.5 877.4 744.5C889.0 740.5 907.3 733.0 917.7 728.4C928.1 723.8 936.3 719.0 940.0 717.1" fill="none" stroke="#e4dbad" stroke-width="2.5" stroke-linecap="round" stroke-linejoin="round"/>
<path d="M893.5 713.9C894.6 719.0 898.6 731.3 900.0 744.5C901.4 757.7 901.3 784.8 901.6 792.9" fill="none" stroke="#e4dbad" stroke-width="2.5" stroke-linecap="round" stroke-linejoin="round"/>
<path d="M874.2 699.4C877.4 701.8 887.6 710.7 893.5 713.9C899.4 717.1 902.0 718.4 909.7 718.7C917.5 719.0 935.0 716.0 940.0 715.5" fill="none" stroke="#e4dbad" stroke-width="2.5" stroke-linecap="round" stroke-linejoin="round"/>
<path d="M908.1 684.8 L893.5 713.9" fill="none" stroke="#e4dbad" stroke-width="2.5" stroke-linecap="round" stroke-linejoin="round"/>
<path d="M700.0 789.7C705.4 787.6 723.4 780.6 732.3 776.8C741.2 773.0 749.7 768.7 753.2 767.1" fill="none" stroke="#e4dbad" stroke-width="2.5" stroke-linecap="round" stroke-linejoin="round"/>
<path d="M920.0 549.7C924.0 551.6 935.1 557.2 944.2 561.0C953.3 564.8 962.7 568.0 974.8 572.3C986.9 576.6 1007.1 580.6 1016.8 586.8C1026.5 593.0 1030.2 605.6 1032.9 609.4" fill="none" stroke="#e4dbad" stroke-width="2.5" stroke-linecap="round" stroke-linejoin="round"/>
<path d="M1016.8 586.8C1024.9 586.8 1052.6 587.8 1065.2 586.8C1077.8 585.8 1085.1 583.6 1092.6 581.1C1100.1 578.6 1107.3 573.1 1110.3 571.5" fill="none" stroke="#e4dbad" stroke-width="2.5" stroke-linecap="round" stroke-linejoin="round"/>
<path d="M1032.9 609.4C1035.1 605.9 1041.8 595.7 1045.8 588.4C1049.8 581.1 1053.1 572.5 1057.1 565.8C1061.1 559.1 1067.8 551.0 1070.0 548.1" fill="none" stroke="#e4dbad" stroke-width="2.5" stroke-linecap="round" stroke-linejoin="round"/>
<path d="M1032.9 609.4C1038.3 611.0 1056.3 617.7 1065.2 619.0C1074.1 620.3 1080.2 617.4 1086.1 617.4C1092.0 617.4 1098.2 618.7 1100.6 619.0" fill="none" stroke="#e4dbad" stroke-width="2.5" stroke-linecap="round" stroke-linejoin="round"/>
<path d="M936.1 606.1C941.5 606.2 957.9 606.1 968.4 606.9C978.9 607.7 989.6 609.2 999.0 611.0C1008.4 612.8 1013.8 615.2 1024.8 617.4C1035.8 619.5 1058.5 622.8 1065.2 623.9" fill="none" stroke="#e4dbad" stroke-width="2.5" stroke-linecap="round" stroke-linejoin="round"/>
<path d="M976.5 551.3C983.2 552.4 1003.4 555.8 1016.8 557.7C1030.2 559.6 1046.3 560.2 1057.1 562.6C1067.8 565.0 1075.4 569.2 1081.3 572.3C1087.2 575.4 1090.7 579.6 1092.6 581.1" fill="none" stroke="#e4dbad" stroke-width="2.5" stroke-linecap="round" stroke-linejoin="round"/>
<path d="M936.1 548.1C936.1 557.8 935.8 592.4 936.1 606.1C936.4 619.8 937.7 618.0 937.7 630.3C937.7 642.6 936.4 671.7 936.1 680.0" fill="none" stroke="#e4dbad" stroke-width="2.5" stroke-linecap="round" stroke-linejoin="round"/>
<path d="M999.0 611.0C997.7 615.3 993.4 627.1 991.0 636.8C988.6 646.5 985.6 663.6 984.5 669.0" fill="none" stroke="#e4dbad" stroke-width="2.5" stroke-linecap="round" stroke-linejoin="round"/>
<path d="M1031.3 617.4C1030.5 621.7 1027.8 636.8 1026.5 643.2C1025.2 649.7 1025.9 651.8 1023.2 656.1C1020.5 660.4 1012.4 666.9 1010.3 669.0" fill="none" stroke="#e4dbad" stroke-width="2.5" stroke-linecap="round" stroke-linejoin="round"/>
<path d="M936.1 643.2C941.5 645.4 956.0 652.3 968.4 656.1C980.8 659.9 1003.3 664.2 1010.3 665.8" fill="none" stroke="#e4dbad" stroke-width="2.5" stroke-linecap="round" stroke-linejoin="round"/>
<path d="M1039.4 654.5C1043.7 655.6 1057.2 658.6 1065.2 661.0C1073.2 663.4 1084.0 667.7 1087.7 669.0" fill="none" stroke="#e4dbad" stroke-width="2.5" stroke-linecap="round" stroke-linejoin="round"/>
<path d="M968.4 548.1 L974.8 572.3" fill="none" stroke="#e4dbad" stroke-width="2.5" stroke-linecap="round" stroke-linejoin="round"/>
<path d="M1020.0 557.7 L1016.8 586.8" fill="none" stroke="#e4dbad" stroke-width="2.5" stroke-linecap="round" stroke-linejoin="round"/>
<path d="M920.0 581.9 L942.6 580.3" fill="none" stroke="#e4dbad" stroke-width="2.5" stroke-linecap="round" stroke-linejoin="round"/>
<path d="M920.0 713.9C922.7 714.2 930.7 710.9 936.1 715.5C941.5 720.1 949.6 737.0 952.3 741.3" fill="none" stroke="#e4dbad" stroke-width="2.5" stroke-linecap="round" stroke-linejoin="round"/>
<path d="M920.0 730.0C923.2 731.1 933.8 734.1 939.4 736.5C945.0 738.9 951.5 743.2 953.9 744.5" fill="none" stroke="#e4dbad" stroke-width="2.5" stroke-linecap="round" stroke-linejoin="round"/>
<path d="M1003.9 680.0C1002.5 682.4 1000.4 689.1 995.8 694.5C991.2 699.9 981.6 706.6 976.5 712.3C971.4 717.9 968.2 723.0 965.2 728.4C962.2 733.8 959.8 741.8 958.7 744.5" fill="none" stroke="#e4dbad" stroke-width="2.5" stroke-linecap="round" stroke-linejoin="round"/>
<path d="M1000.6 697.7C1002.2 701.5 1006.5 713.8 1010.3 720.3C1014.1 726.8 1018.9 731.6 1023.2 736.5C1027.5 741.4 1033.9 747.2 1036.1 749.4" fill="none" stroke="#e4dbad" stroke-width="2.5" stroke-linecap="round" stroke-linejoin="round"/>
<path d="M995.8 694.5C1000.4 695.0 1014.9 694.7 1023.2 697.7C1031.5 700.7 1039.6 708.5 1045.8 712.3C1052.0 716.1 1057.6 717.1 1060.3 720.3C1063.0 723.5 1061.6 729.7 1061.9 731.6" fill="none" stroke="#e4dbad" stroke-width="2.5" stroke-linecap="round" stroke-linejoin="round"/>
<path d="M965.2 755.8C966.5 759.3 970.5 769.5 973.2 776.8C975.9 784.1 979.4 794.0 981.3 799.4C983.2 804.8 984.0 807.4 984.5 809.0" fill="none" stroke="#e4dbad" stroke-width="2.5" stroke-linecap="round" stroke-linejoin="round"/>
<path d="M1060.3 731.6C1063.8 730.5 1071.1 727.4 1081.3 725.2C1091.5 723.1 1114.9 719.8 1121.6 718.7" fill="none" stroke="#e4dbad" stroke-width="2.5" stroke-linecap="round" stroke-linejoin="round"/>
<path d="M1061.9 733.2C1065.1 734.6 1074.0 736.2 1081.3 741.3C1088.6 746.4 1103.9 755.8 1105.5 763.9C1107.1 772.0 1094.2 784.9 1091.0 789.7C1087.8 794.5 1086.9 792.4 1086.1 792.9" fill="none" stroke="#e4dbad" stroke-width="2.5" stroke-linecap="round" stroke-linejoin="round"/>
<path d="M1105.5 763.9C1109.5 765.0 1120.6 769.0 1129.7 770.3C1138.8 771.6 1155.0 771.6 1160.0 771.9" fill="none" stroke="#e4dbad" stroke-width="2.5" stroke-linecap="round" stroke-linejoin="round"/>
<path d="M1150.6 771.9 L1150.6 809.0" fill="none" stroke="#e4dbad" stroke-width="2.5" stroke-linecap="round" stroke-linejoin="round"/>
<path d="M976.5 712.3C979.2 713.9 988.6 716.5 992.6 721.9C996.6 727.3 999.0 739.1 1000.6 744.5C1002.2 749.9 1002.0 752.6 1002.3 754.2" fill="none" stroke="#e4dbad" stroke-width="2.5" stroke-linecap="round" stroke-linejoin="round"/>
<path d="M936.1 715.5 L976.5 712.3" fill="none" stroke="#e4dbad" stroke-width="2.5" stroke-linecap="round" stroke-linejoin="round"/>
<path d="M1164.2 548.1C1165.0 552.7 1167.7 566.1 1169.0 575.5C1170.3 584.9 1171.3 596.8 1172.3 604.5C1173.2 612.2 1174.3 618.7 1174.7 621.5" fill="none" stroke="#e4dbad" stroke-width="2.5" stroke-linecap="round" stroke-linejoin="round"/>
<path d="M1272.3 548.1C1272.2 552.1 1271.5 565.0 1271.5 572.3C1271.5 579.5 1271.6 585.1 1272.3 591.6C1273.0 598.1 1275.0 607.8 1275.5 611.0" fill="none" stroke="#e4dbad" stroke-width="2.5" stroke-linecap="round" stroke-linejoin="round"/>
<path d="M1341.6 548.1C1342.9 552.1 1347.5 564.0 1349.7 572.3C1351.9 580.6 1353.7 593.8 1354.5 598.1" fill="none" stroke="#e4dbad" stroke-width="2.5" stroke-linecap="round" stroke-linejoin="round"/>
<path d="M1236.8 680.0C1239.5 677.9 1247.5 671.1 1252.9 667.4C1258.3 663.7 1263.6 659.9 1269.0 657.7C1274.4 655.6 1279.8 654.2 1285.2 654.5C1290.6 654.8 1297.5 656.4 1301.3 659.4C1305.0 662.4 1306.6 668.9 1307.7 672.3C1308.8 675.7 1307.7 678.7 1307.7 680.0" fill="none" stroke="#e4dbad" stroke-width="2.5" stroke-linecap="round" stroke-linejoin="round"/>
<path d="M1309.4 680.0C1309.9 684.0 1312.9 697.5 1312.6 704.2C1312.3 710.9 1312.3 714.9 1307.7 720.3C1303.1 725.7 1291.7 732.5 1285.2 736.5C1278.8 740.5 1273.3 741.3 1269.0 744.5C1264.7 747.7 1262.6 752.6 1259.4 755.8C1256.2 759.0 1251.3 762.5 1249.7 763.9" fill="none" stroke="#e4dbad" stroke-width="2.5" stroke-linecap="round" stroke-linejoin="round"/>
<path d="M1240.0 770.3C1236.8 772.4 1226.5 780.2 1220.6 783.2C1214.7 786.2 1212.5 789.2 1204.5 788.1C1196.5 787.0 1183.0 779.5 1172.3 776.8C1161.5 774.1 1145.4 772.7 1140.0 771.9" fill="none" stroke="#e4dbad" stroke-width="2.5" stroke-linecap="round" stroke-linejoin="round"/>
<path d="M1149.7 773.5 L1149.7 809.0" fill="none" stroke="#e4dbad" stroke-width="2.5" stroke-linecap="round" stroke-linejoin="round"/>
<path d="M1265.8 775.2C1271.7 774.4 1292.7 771.6 1301.3 770.3C1309.9 768.9 1314.7 760.6 1317.4 767.1C1320.1 773.6 1317.4 802.0 1317.4 809.0" fill="none" stroke="#e4dbad" stroke-width="2.5" stroke-linecap="round" stroke-linejoin="round"/>
<path d="M1460.0 640.0C1460.5 642.1 1463.7 646.2 1463.2 652.9C1462.7 659.6 1457.9 675.5 1456.8 680.0" fill="none" stroke="#e4dbad" stroke-width="2.5" stroke-linecap="round" stroke-linejoin="round"/>
<path d="M1456.8 680.0C1456.5 684.0 1455.8 696.1 1455.2 704.2C1454.7 712.3 1452.7 721.1 1453.5 728.4C1454.3 735.6 1457.3 741.8 1460.0 747.7C1462.7 753.6 1467.5 758.5 1469.7 763.9C1471.9 769.3 1472.9 774.6 1472.9 780.0C1472.9 785.4 1471.9 791.3 1469.7 796.1C1467.5 800.9 1461.6 806.9 1460.0 809.0" fill="none" stroke="#e4dbad" stroke-width="2.5" stroke-linecap="round" stroke-linejoin="round"/>
<path d="M1368.1 684.8C1370.8 686.4 1377.5 691.5 1384.2 694.5C1390.9 697.5 1401.7 700.9 1408.4 702.6C1415.1 704.4 1417.0 704.3 1424.5 705.0C1432.0 705.7 1448.7 706.3 1453.5 706.6" fill="none" stroke="#e4dbad" stroke-width="2.5" stroke-linecap="round" stroke-linejoin="round"/>
<path d="M1364.8 680.0C1364.5 685.4 1362.9 701.5 1363.2 712.3C1363.5 723.0 1365.4 734.8 1366.5 744.5C1367.6 754.2 1367.3 762.8 1369.7 770.3C1372.1 777.8 1377.2 784.3 1381.0 789.7C1384.8 795.1 1390.4 800.5 1392.3 802.6" fill="none" stroke="#e4dbad" stroke-width="2.5" stroke-linecap="round" stroke-linejoin="round"/>
<path d="M745.2 548.1C749.0 549.2 759.5 552.4 767.7 554.5C775.9 556.6 790.0 559.9 794.4 561.0" fill="none" stroke="#e4dbad" stroke-width="2.5" stroke-linecap="round" stroke-linejoin="round"/>
<path d="M795.2 546.5 L794.4 561.0" fill="none" stroke="#e4dbad" stroke-width="2.5" stroke-linecap="round" stroke-linejoin="round"/>
<path d="M700.0 593.2C704.8 591.1 722.3 581.1 729.0 580.3C735.7 579.5 738.4 587.0 740.3 588.4" fill="none" stroke="#e4dbad" stroke-width="2.5" stroke-linecap="round" stroke-linejoin="round"/>
<path d="M806.5 606.1C810.2 604.0 820.4 598.8 829.0 593.2C837.6 587.6 853.2 575.8 858.1 572.3" fill="none" stroke="#e4dbad" stroke-width="2.5" stroke-linecap="round" stroke-linejoin="round"/>
<path d="M811.3 640.0C807.8 642.1 800.8 646.2 790.3 652.9C779.8 659.6 755.4 675.5 748.4 680.0" fill="none" stroke="#e4dbad" stroke-width="2.5" stroke-linecap="round" stroke-linejoin="round"/>
<path d="M811.3 640.0 L837.1 643.2" fill="none" stroke="#e4dbad" stroke-width="2.5" stroke-linecap="round" stroke-linejoin="round"/>
<path d="M837.1 643.2C838.5 641.1 842.2 634.1 845.2 630.3C848.2 626.5 850.5 623.5 854.8 620.6C859.1 617.7 865.9 614.6 871.0 612.6C876.1 610.6 879.0 609.5 885.5 608.5C892.0 607.5 900.6 607.0 909.7 606.9C918.8 606.8 935.0 607.6 940.0 607.7" fill="none" stroke="#e4dbad" stroke-width="2.5" stroke-linecap="round" stroke-linejoin="round"/>
<path d="M885.5 556.1 L890.3 586.8" fill="none" stroke="#e4dbad" stroke-width="2.5" stroke-linecap="round" stroke-linejoin="round"/>
<path d="M753.2 630.3C754.3 634.1 759.7 648.0 759.7 652.9C759.7 657.8 754.3 658.3 753.2 659.4" fill="none" stroke="#e4dbad" stroke-width="2.5" stroke-linecap="round" stroke-linejoin="round"/>
<path d="M700.0 630.3C702.7 631.6 711.5 636.0 716.1 638.4C720.7 640.8 725.5 643.7 727.4 644.8" fill="none" stroke="#e4dbad" stroke-width="2.5" stroke-linecap="round" stroke-linejoin="round"/>
<path d="M712.9 613.4 L740.3 588.4" fill="none" stroke="#e4dbad" stroke-width="2.5" stroke-linecap="round" stroke-linejoin="round"/>
<path d="M724.2 556.1 L733.9 570.6" fill="none" stroke="#e4dbad" stroke-width="2.5" stroke-linecap="round" stroke-linejoin="round"/>
<path d="M885.5 661.0C889.5 660.5 900.6 659.3 909.7 657.7C918.8 656.1 935.0 652.4 940.0 651.3" fill="none" stroke="#e4dbad" stroke-width="2.5" stroke-linecap="round" stroke-linejoin="round"/>
<path d="M767.7 554.5 L773.4 615.8" fill="none" stroke="#e4dbad" stroke-width="2.5" stroke-linecap="round" stroke-linejoin="round"/>
<path d="M858.1 572.3 L877.4 547.3" fill="none" stroke="#e4dbad" stroke-width="2.5" stroke-linecap="round" stroke-linejoin="round"/>
<path d="M740.3 701.0C749.7 700.7 783.5 700.2 796.8 699.4C810.1 698.6 816.3 696.6 820.2 696.1" fill="none" stroke="#e4dbad" stroke-width="2.5" stroke-linecap="round" stroke-linejoin="round"/>
<path d="M885.5 661.0C886.3 664.2 886.5 670.1 890.3 680.0C894.1 689.9 905.1 713.6 908.1 720.3" fill="none" stroke="#e4dbad" stroke-width="2.5" stroke-linecap="round" stroke-linejoin="round"/>
<path d="M908.1 684.8 L940.0 676.8" fill="none" stroke="#e4dbad" stroke-width="2.5" stroke-linecap="round" stroke-linejoin="round"/>
<path d="M861.3 720.3 L893.5 713.9" fill="none" stroke="#e4dbad" stroke-width="2.5" stroke-linecap="round" stroke-linejoin="round"/>
<path d="M837.1 809.0C841.1 806.3 850.5 795.6 861.3 792.9C872.0 790.2 890.9 794.2 901.6 792.9C912.4 791.5 921.8 786.1 925.8 784.8" fill="none" stroke="#e4dbad" stroke-width="2.5" stroke-linecap="round" stroke-linejoin="round"/>
<path d="M877.4 744.5 L879.0 792.9" fill="none" stroke="#e4dbad" stroke-width="2.5" stroke-linecap="round" stroke-linejoin="round"/>
<path d="M771.0 780.0 L803.2 749.4" fill="none" stroke="#e4dbad" stroke-width="2.5" stroke-linecap="round" stroke-linejoin="round"/>
<path d="M787.1 792.9 L819.4 776.8" fill="none" stroke="#e4dbad" stroke-width="2.5" stroke-linecap="round" stroke-linejoin="round"/>
<path d="M936.1 679.2 L936.1 715.5" fill="none" stroke="#e4dbad" stroke-width="2.5" stroke-linecap="round" stroke-linejoin="round"/>
<path d="M968.4 606.9 L968.4 630.3" fill="none" stroke="#e4dbad" stroke-width="2.5" stroke-linecap="round" stroke-linejoin="round"/>
<path d="M1065.2 586.8 L1065.2 619.0" fill="none" stroke="#e4dbad" stroke-width="2.5" stroke-linecap="round" stroke-linejoin="round"/>
<path d="M974.8 572.3 L968.4 606.9" fill="none" stroke="#e4dbad" stroke-width="2.5" stroke-linecap="round" stroke-linejoin="round"/>
<path d="M1057.1 565.8 L1081.3 572.3" fill="none" stroke="#e4dbad" stroke-width="2.5" stroke-linecap="round" stroke-linejoin="round"/>
<path d="M920.0 643.2 L936.1 643.2" fill="none" stroke="#e4dbad" stroke-width="2.5" stroke-linecap="round" stroke-linejoin="round"/>
<path d="M1010.3 665.8C1012.4 664.2 1018.4 658.0 1023.2 656.1C1028.1 654.2 1036.7 654.8 1039.4 654.5" fill="none" stroke="#e4dbad" stroke-width="2.5" stroke-linecap="round" stroke-linejoin="round"/>
<path d="M1023.2 697.7 L1032.9 680.0" fill="none" stroke="#e4dbad" stroke-width="2.5" stroke-linecap="round" stroke-linejoin="round"/>
<path d="M1036.1 749.4 L1039.4 753.4" fill="none" stroke="#e4dbad" stroke-width="2.5" stroke-linecap="round" stroke-linejoin="round"/>
<path d="M657.4 584.4C658.2 588.3 659.6 600.1 662.3 607.7C665.0 615.4 671.6 626.5 673.5 630.3" fill="none" stroke="#e4dbad" stroke-width="2.5" stroke-linecap="round" stroke-linejoin="round"/>
<path d="M670.3 583.5 L720.0 572.3" fill="none" stroke="#e4dbad" stroke-width="2.5" stroke-linecap="round" stroke-linejoin="round"/>
<path d="M689.7 565.8C690.8 570.4 692.9 584.9 696.1 593.2C699.3 601.5 706.9 612.0 709.0 615.8" fill="none" stroke="#e4dbad" stroke-width="2.5" stroke-linecap="round" stroke-linejoin="round"/>
<path d="M662.3 607.7C667.9 605.3 686.5 596.7 696.1 593.2C705.7 589.7 716.0 587.9 720.0 586.8" fill="none" stroke="#e4dbad" stroke-width="2.5" stroke-linecap="round" stroke-linejoin="round"/>
<path d="M673.5 630.3C679.4 627.9 701.2 619.0 709.0 615.8C716.8 612.6 718.2 611.8 720.0 611.0" fill="none" stroke="#e4dbad" stroke-width="2.5" stroke-linecap="round" stroke-linejoin="round"/>
<path d="M705.8 548.1 L709.0 562.6" fill="none" stroke="#e4dbad" stroke-width="2.5" stroke-linecap="round" stroke-linejoin="round"/>
<path d="M727.4 548.1C728.5 551.9 731.8 563.9 733.9 570.6C736.0 577.3 737.1 581.7 740.3 588.4C743.5 595.1 747.7 606.4 753.2 611.0C758.7 615.6 770.0 615.0 773.4 615.8" fill="none" stroke="#fbf4ca" stroke-width="1.6" stroke-linecap="round" stroke-linejoin="round"/>
<path d="M700.0 567.4C704.0 565.5 716.7 559.3 724.2 556.1C731.7 552.9 741.7 549.4 745.2 548.1" fill="none" stroke="#fbf4ca" stroke-width="1.6" stroke-linecap="round" stroke-linejoin="round"/>
<path d="M700.0 669.0C704.6 665.0 718.5 651.2 727.4 644.8C736.3 638.3 745.5 635.1 753.2 630.3C760.9 625.5 767.2 620.6 773.4 615.8C779.6 611.0 785.3 605.9 790.3 601.3C795.3 596.7 798.9 594.3 803.2 588.4C807.5 582.5 813.4 572.6 816.1 565.8C818.8 558.9 818.9 550.4 819.4 547.3" fill="none" stroke="#fbf4ca" stroke-width="1.6" stroke-linecap="round" stroke-linejoin="round"/>
<path d="M800.0 561.0C800.5 565.6 802.1 580.9 803.2 588.4C804.3 595.9 805.1 599.9 806.5 606.1C807.9 612.3 810.5 619.9 811.3 625.5C812.1 631.1 811.3 637.6 811.3 640.0" fill="none" stroke="#fbf4ca" stroke-width="1.6" stroke-linecap="round" stroke-linejoin="round"/>
<path d="M811.3 640.0C813.7 637.9 820.1 631.7 825.8 627.1C831.4 622.5 839.8 616.6 845.2 612.6C850.6 608.6 852.7 606.4 858.1 602.9C863.5 599.4 870.1 594.8 877.4 591.6C884.6 588.4 891.2 585.2 901.6 583.5C912.0 581.8 933.6 581.5 940.0 581.1" fill="none" stroke="#fbf4ca" stroke-width="1.6" stroke-linecap="round" stroke-linejoin="round"/>
<path d="M851.6 549.7C852.7 553.5 856.5 565.8 858.1 572.3C859.7 578.8 861.3 583.3 861.3 588.4C861.3 593.5 858.6 600.5 858.1 602.9" fill="none" stroke="#fbf4ca" stroke-width="1.6" stroke-linecap="round" stroke-linejoin="round"/>
<path d="M858.1 602.9C859.7 606.4 864.5 616.9 867.7 623.9C870.9 630.9 874.4 638.6 877.4 644.8C880.4 651.0 884.1 658.3 885.5 661.0" fill="none" stroke="#fbf4ca" stroke-width="1.6" stroke-linecap="round" stroke-linejoin="round"/>
<path d="M811.3 640.0C807.8 639.2 800.0 632.0 790.3 635.2C780.6 638.4 761.3 659.1 753.2 659.4C745.1 659.7 738.5 644.1 741.9 636.8C745.3 629.5 768.1 619.3 773.4 615.8" fill="none" stroke="#fbf4ca" stroke-width="1.6" stroke-linecap="round" stroke-linejoin="round"/>
<path d="M811.3 640.0C812.1 642.1 814.5 648.3 816.1 652.9C817.7 657.5 819.9 662.9 821.0 667.4C822.1 671.9 822.3 677.9 822.6 680.0" fill="none" stroke="#fbf4ca" stroke-width="1.6" stroke-linecap="round" stroke-linejoin="round"/>
<path d="M819.4 562.6C823.7 560.7 835.5 553.8 845.2 551.3C854.9 548.8 872.0 548.0 877.4 547.3" fill="none" stroke="#fbf4ca" stroke-width="1.6" stroke-linecap="round" stroke-linejoin="round"/>
<path d="M773.4 615.8C775.1 619.3 781.1 633.6 783.9 636.8C786.7 640.0 789.2 635.5 790.3 635.2" fill="none" stroke="#fbf4ca" stroke-width="1.6" stroke-linecap="round" stroke-linejoin="round"/>
<path d="M794.4 561.0 L819.4 562.6" fill="none" stroke="#fbf4ca" stroke-width="1.6" stroke-linecap="round" stroke-linejoin="round"/>
<path d="M877.4 591.6C878.2 591.1 878.3 595.4 882.3 588.4C886.3 581.4 898.4 556.2 901.6 549.7" fill="none" stroke="#fbf4ca" stroke-width="1.6" stroke-linecap="round" stroke-linejoin="round"/>
<path d="M908.1 548.1 L909.7 580.3" fill="none" stroke="#fbf4ca" stroke-width="1.6" stroke-linecap="round" stroke-linejoin="round"/>
<path d="M733.9 733.2C739.5 732.1 757.2 730.3 767.7 726.8C778.2 723.3 788.2 716.3 796.8 712.3C805.4 708.3 815.5 705.6 819.4 702.6C823.3 699.6 820.1 698.3 820.2 694.5C820.3 690.7 820.2 682.4 820.2 680.0" fill="none" stroke="#fbf4ca" stroke-width="1.6" stroke-linecap="round" stroke-linejoin="round"/>
<path d="M767.7 726.8C768.2 728.4 773.4 729.8 771.0 736.5C768.6 743.2 756.2 762.0 753.2 767.1" fill="none" stroke="#fbf4ca" stroke-width="1.6" stroke-linecap="round" stroke-linejoin="round"/>
<path d="M740.3 689.7C737.6 693.2 727.2 705.4 724.2 710.6C721.2 715.8 722.9 719.4 722.6 721.1" fill="none" stroke="#fbf4ca" stroke-width="1.6" stroke-linecap="round" stroke-linejoin="round"/>
<path d="M740.3 701.0C744.3 704.5 759.9 717.6 764.5 721.9C769.1 726.2 767.2 726.0 767.7 726.8" fill="none" stroke="#fbf4ca" stroke-width="1.6" stroke-linecap="round" stroke-linejoin="round"/>
<path d="M819.4 702.6C819.9 710.4 822.6 737.0 822.6 749.4C822.6 761.8 822.6 767.9 819.4 776.8C816.2 785.7 805.9 798.3 803.2 802.6" fill="none" stroke="#fbf4ca" stroke-width="1.6" stroke-linecap="round" stroke-linejoin="round"/>
<path d="M771.0 736.5C776.4 738.6 794.3 747.1 803.2 749.4C812.1 751.7 816.9 749.5 824.2 750.2C831.5 750.9 843.0 752.9 846.8 753.4" fill="none" stroke="#fbf4ca" stroke-width="1.6" stroke-linecap="round" stroke-linejoin="round"/>
<path d="M800.0 712.3 L803.2 749.4" fill="none" stroke="#fbf4ca" stroke-width="1.6" stroke-linecap="round" stroke-linejoin="round"/>
<path d="M829.0 696.1C833.0 696.2 845.7 696.4 853.2 696.9C860.7 697.4 870.7 699.0 874.2 699.4" fill="none" stroke="#fbf4ca" stroke-width="1.6" stroke-linecap="round" stroke-linejoin="round"/>
<path d="M869.4 701.0C868.0 704.2 864.8 711.7 861.3 720.3C857.8 728.9 851.6 743.2 848.4 752.6C845.2 762.0 843.8 767.4 841.9 776.8C840.0 786.2 837.9 803.6 837.1 809.0" fill="none" stroke="#fbf4ca" stroke-width="1.6" stroke-linecap="round" stroke-linejoin="round"/>
<path d="M848.4 752.6C853.2 751.2 865.8 748.5 877.4 744.5C889.0 740.5 907.3 733.0 917.7 728.4C928.1 723.8 936.3 719.0 940.0 717.1" fill="none" stroke="#fbf4ca" stroke-width="1.6" stroke-linecap="round" stroke-linejoin="round"/>
<path d="M893.5 713.9C894.6 719.0 898.6 731.3 900.0 744.5C901.4 757.7 901.3 784.8 901.6 792.9" fill="none" stroke="#fbf4ca" stroke-width="1.6" stroke-linecap="round" stroke-linejoin="round"/>
<path d="M874.2 699.4C877.4 701.8 887.6 710.7 893.5 713.9C899.4 717.1 902.0 718.4 909.7 718.7C917.5 719.0 935.0 716.0 940.0 715.5" fill="none" stroke="#fbf4ca" stroke-width="1.6" stroke-linecap="round" stroke-linejoin="round"/>
<path d="M908.1 684.8 L893.5 713.9" fill="none" stroke="#fbf4ca" stroke-width="1.6" stroke-linecap="round" stroke-linejoin="round"/>
<path d="M700.0 789.7C705.4 787.6 723.4 780.6 732.3 776.8C741.2 773.0 749.7 768.7 753.2 767.1" fill="none" stroke="#fbf4ca" stroke-width="1.6" stroke-linecap="round" stroke-linejoin="round"/>
<path d="M920.0 549.7C924.0 551.6 935.1 557.2 944.2 561.0C953.3 564.8 962.7 568.0 974.8 572.3C986.9 576.6 1007.1 580.6 1016.8 586.8C1026.5 593.0 1030.2 605.6 1032.9 609.4" fill="none" stroke="#fbf4ca" stroke-width="1.6" stroke-linecap="round" stroke-linejoin="round"/>
<path d="M1016.8 586.8C1024.9 586.8 1052.6 587.8 1065.2 586.8C1077.8 585.8 1085.1 583.6 1092.6 581.1C1100.1 578.6 1107.3 573.1 1110.3 571.5" fill="none" stroke="#fbf4ca" stroke-width="1.6" stroke-linecap="round" stroke-linejoin="round"/>
<path d="M1032.9 609.4C1035.1 605.9 1041.8 595.7 1045.8 588.4C1049.8 581.1 1053.1 572.5 1057.1 565.8C1061.1 559.1 1067.8 551.0 1070.0 548.1" fill="none" stroke="#fbf4ca" stroke-width="1.6" stroke-linecap="round" stroke-linejoin="round"/>
<path d="M1032.9 609.4C1038.3 611.0 1056.3 617.7 1065.2 619.0C1074.1 620.3 1080.2 617.4 1086.1 617.4C1092.0 617.4 1098.2 618.7 1100.6 619.0" fill="none" stroke="#fbf4ca" stroke-width="1.6" stroke-linecap="round" stroke-linejoin="round"/>
<path d="M936.1 606.1C941.5 606.2 957.9 606.1 968.4 606.9C978.9 607.7 989.6 609.2 999.0 611.0C1008.4 612.8 1013.8 615.2 1024.8 617.4C1035.8 619.5 1058.5 622.8 1065.2 623.9" fill="none" stroke="#fbf4ca" stroke-width="1.6" stroke-linecap="round" stroke-linejoin="round"/>
<path d="M976.5 551.3C983.2 552.4 1003.4 555.8 1016.8 557.7C1030.2 559.6 1046.3 560.2 1057.1 562.6C1067.8 565.0 1075.4 569.2 1081.3 572.3C1087.2 575.4 1090.7 579.6 1092.6 581.1" fill="none" stroke="#fbf4ca" stroke-width="1.6" stroke-linecap="round" stroke-linejoin="round"/>
<path d="M936.1 548.1C936.1 557.8 935.8 592.4 936.1 606.1C936.4 619.8 937.7 618.0 937.7 630.3C937.7 642.6 936.4 671.7 936.1 680.0" fill="none" stroke="#fbf4ca" stroke-width="1.6" stroke-linecap="round" stroke-linejoin="round"/>
<path d="M999.0 611.0C997.7 615.3 993.4 627.1 991.0 636.8C988.6 646.5 985.6 663.6 984.5 669.0" fill="none" stroke="#fbf4ca" stroke-width="1.6" stroke-linecap="round" stroke-linejoin="round"/>
<path d="M1031.3 617.4C1030.5 621.7 1027.8 636.8 1026.5 643.2C1025.2 649.7 1025.9 651.8 1023.2 656.1C1020.5 660.4 1012.4 666.9 1010.3 669.0" fill="none" stroke="#fbf4ca" stroke-width="1.6" stroke-linecap="round" stroke-linejoin="round"/>
<path d="M936.1 643.2C941.5 645.4 956.0 652.3 968.4 656.1C980.8 659.9 1003.3 664.2 1010.3 665.8" fill="none" stroke="#fbf4ca" stroke-width="1.6" stroke-linecap="round" stroke-linejoin="round"/>
<path d="M1039.4 654.5C1043.7 655.6 1057.2 658.6 1065.2 661.0C1073.2 663.4 1084.0 667.7 1087.7 669.0" fill="none" stroke="#fbf4ca" stroke-width="1.6" stroke-linecap="round" stroke-linejoin="round"/>
<path d="M968.4 548.1 L974.8 572.3" fill="none" stroke="#fbf4ca" stroke-width="1.6" stroke-linecap="round" stroke-linejoin="round"/>
<path d="M1020.0 557.7 L1016.8 586.8" fill="none" stroke="#fbf4ca" stroke-width="1.6" stroke-linecap="round" stroke-linejoin="round"/>
<path d="M920.0 581.9 L942.6 580.3" fill="none" stroke="#fbf4ca" stroke-width="1.6" stroke-linecap="round" stroke-linejoin="round"/>
<path d="M920.0 713.9C922.7 714.2 930.7 710.9 936.1 715.5C941.5 720.1 949.6 737.0 952.3 741.3" fill="none" stroke="#fbf4ca" stroke-width="1.6" stroke-linecap="round" stroke-linejoin="round"/>
<path d="M920.0 730.0C923.2 731.1 933.8 734.1 939.4 736.5C945.0 738.9 951.5 743.2 953.9 744.5" fill="none" stroke="#fbf4ca" stroke-width="1.6" stroke-linecap="round" stroke-linejoin="round"/>
<path d="M1003.9 680.0C1002.5 682.4 1000.4 689.1 995.8 694.5C991.2 699.9 981.6 706.6 976.5 712.3C971.4 717.9 968.2 723.0 965.2 728.4C962.2 733.8 959.8 741.8 958.7 744.5" fill="none" stroke="#fbf4ca" stroke-width="1.6" stroke-linecap="round" stroke-linejoin="round"/>
<path d="M1000.6 697.7C1002.2 701.5 1006.5 713.8 1010.3 720.3C1014.1 726.8 1018.9 731.6 1023.2 736.5C1027.5 741.4 1033.9 747.2 1036.1 749.4" fill="none" stroke="#fbf4ca" stroke-width="1.6" stroke-linecap="round" stroke-linejoin="round"/>
<path d="M995.8 694.5C1000.4 695.0 1014.9 694.7 1023.2 697.7C1031.5 700.7 1039.6 708.5 1045.8 712.3C1052.0 716.1 1057.6 717.1 1060.3 720.3C1063.0 723.5 1061.6 729.7 1061.9 731.6" fill="none" stroke="#fbf4ca" stroke-width="1.6" stroke-linecap="round" stroke-linejoin="round"/>
<path d="M965.2 755.8C966.5 759.3 970.5 769.5 973.2 776.8C975.9 784.1 979.4 794.0 981.3 799.4C983.2 804.8 984.0 807.4 984.5 809.0" fill="none" stroke="#fbf4ca" stroke-width="1.6" stroke-linecap="round" stroke-linejoin="round"/>
<path d="M1060.3 731.6C1063.8 730.5 1071.1 727.4 1081.3 725.2C1091.5 723.1 1114.9 719.8 1121.6 718.7" fill="none" stroke="#fbf4ca" stroke-width="1.6" stroke-linecap="round" stroke-linejoin="round"/>
<path d="M1061.9 733.2C1065.1 734.6 1074.0 736.2 1081.3 741.3C1088.6 746.4 1103.9 755.8 1105.5 763.9C1107.1 772.0 1094.2 784.9 1091.0 789.7C1087.8 794.5 1086.9 792.4 1086.1 792.9" fill="none" stroke="#fbf4ca" stroke-width="1.6" stroke-linecap="round" stroke-linejoin="round"/>
<path d="M1105.5 763.9C1109.5 765.0 1120.6 769.0 1129.7 770.3C1138.8 771.6 1155.0 771.6 1160.0 771.9" fill="none" stroke="#fbf4ca" stroke-width="1.6" stroke-linecap="round" stroke-linejoin="round"/>
<path d="M1150.6 771.9 L1150.6 809.0" fill="none" stroke="#fbf4ca" stroke-width="1.6" stroke-linecap="round" stroke-linejoin="round"/>
<path d="M976.5 712.3C979.2 713.9 988.6 716.5 992.6 721.9C996.6 727.3 999.0 739.1 1000.6 744.5C1002.2 749.9 1002.0 752.6 1002.3 754.2" fill="none" stroke="#fbf4ca" stroke-width="1.6" stroke-linecap="round" stroke-linejoin="round"/>
<path d="M936.1 715.5 L976.5 712.3" fill="none" stroke="#fbf4ca" stroke-width="1.6" stroke-linecap="round" stroke-linejoin="round"/>
<path d="M1164.2 548.1C1165.0 552.7 1167.7 566.1 1169.0 575.5C1170.3 584.9 1171.3 596.8 1172.3 604.5C1173.2 612.2 1174.3 618.7 1174.7 621.5" fill="none" stroke="#fbf4ca" stroke-width="1.6" stroke-linecap="round" stroke-linejoin="round"/>
<path d="M1272.3 548.1C1272.2 552.1 1271.5 565.0 1271.5 572.3C1271.5 579.5 1271.6 585.1 1272.3 591.6C1273.0 598.1 1275.0 607.8 1275.5 611.0" fill="none" stroke="#fbf4ca" stroke-width="1.6" stroke-linecap="round" stroke-linejoin="round"/>
<path d="M1341.6 548.1C1342.9 552.1 1347.5 564.0 1349.7 572.3C1351.9 580.6 1353.7 593.8 1354.5 598.1" fill="none" stroke="#fbf4ca" stroke-width="1.6" stroke-linecap="round" stroke-linejoin="round"/>
<path d="M1236.8 680.0C1239.5 677.9 1247.5 671.1 1252.9 667.4C1258.3 663.7 1263.6 659.9 1269.0 657.7C1274.4 655.6 1279.8 654.2 1285.2 654.5C1290.6 654.8 1297.5 656.4 1301.3 659.4C1305.0 662.4 1306.6 668.9 1307.7 672.3C1308.8 675.7 1307.7 678.7 1307.7 680.0" fill="none" stroke="#fbf4ca" stroke-width="1.6" stroke-linecap="round" stroke-linejoin="round"/>
<path d="M1309.4 680.0C1309.9 684.0 1312.9 697.5 1312.6 704.2C1312.3 710.9 1312.3 714.9 1307.7 720.3C1303.1 725.7 1291.7 732.5 1285.2 736.5C1278.8 740.5 1273.3 741.3 1269.0 744.5C1264.7 747.7 1262.6 752.6 1259.4 755.8C1256.2 759.0 1251.3 762.5 1249.7 763.9" fill="none" stroke="#fbf4ca" stroke-width="1.6" stroke-linecap="round" stroke-linejoin="round"/>
<path d="M1240.0 770.3C1236.8 772.4 1226.5 780.2 1220.6 783.2C1214.7 786.2 1212.5 789.2 1204.5 788.1C1196.5 787.0 1183.0 779.5 1172.3 776.8C1161.5 774.1 1145.4 772.7 1140.0 771.9" fill="none" stroke="#fbf4ca" stroke-width="1.6" stroke-linecap="round" stroke-linejoin="round"/>
<path d="M1149.7 773.5 L1149.7 809.0" fill="none" stroke="#fbf4ca" stroke-width="1.6" stroke-linecap="round" stroke-linejoin="round"/>
<path d="M1265.8 775.2C1271.7 774.4 1292.7 771.6 1301.3 770.3C1309.9 768.9 1314.7 760.6 1317.4 767.1C1320.1 773.6 1317.4 802.0 1317.4 809.0" fill="none" stroke="#fbf4ca" stroke-width="1.6" stroke-linecap="round" stroke-linejoin="round"/>
<path d="M1460.0 640.0C1460.5 642.1 1463.7 646.2 1463.2 652.9C1462.7 659.6 1457.9 675.5 1456.8 680.0" fill="none" stroke="#fbf4ca" stroke-width="1.6" stroke-linecap="round" stroke-linejoin="round"/>
<path d="M1456.8 680.0C1456.5 684.0 1455.8 696.1 1455.2 704.2C1454.7 712.3 1452.7 721.1 1453.5 728.4C1454.3 735.6 1457.3 741.8 1460.0 747.7C1462.7 753.6 1467.5 758.5 1469.7 763.9C1471.9 769.3 1472.9 774.6 1472.9 780.0C1472.9 785.4 1471.9 791.3 1469.7 796.1C1467.5 800.9 1461.6 806.9 1460.0 809.0" fill="none" stroke="#fbf4ca" stroke-width="1.6" stroke-linecap="round" stroke-linejoin="round"/>
<path d="M1368.1 684.8C1370.8 686.4 1377.5 691.5 1384.2 694.5C1390.9 697.5 1401.7 700.9 1408.4 702.6C1415.1 704.4 1417.0 704.3 1424.5 705.0C1432.0 705.7 1448.7 706.3 1453.5 706.6" fill="none" stroke="#fbf4ca" stroke-width="1.6" stroke-linecap="round" stroke-linejoin="round"/>
<path d="M1364.8 680.0C1364.5 685.4 1362.9 701.5 1363.2 712.3C1363.5 723.0 1365.4 734.8 1366.5 744.5C1367.6 754.2 1367.3 762.8 1369.7 770.3C1372.1 777.8 1377.2 784.3 1381.0 789.7C1384.8 795.1 1390.4 800.5 1392.3 802.6" fill="none" stroke="#fbf4ca" stroke-width="1.6" stroke-linecap="round" stroke-linejoin="round"/>
<path d="M745.2 548.1C749.0 549.2 759.5 552.4 767.7 554.5C775.9 556.6 790.0 559.9 794.4 561.0" fill="none" stroke="#fbf4ca" stroke-width="1.6" stroke-linecap="round" stroke-linejoin="round"/>
<path d="M795.2 546.5 L794.4 561.0" fill="none" stroke="#fbf4ca" stroke-width="1.6" stroke-linecap="round" stroke-linejoin="round"/>
<path d="M700.0 593.2C704.8 591.1 722.3 581.1 729.0 580.3C735.7 579.5 738.4 587.0 740.3 588.4" fill="none" stroke="#fbf4ca" stroke-width="1.6" stroke-linecap="round" stroke-linejoin="round"/>
<path d="M806.5 606.1C810.2 604.0 820.4 598.8 829.0 593.2C837.6 587.6 853.2 575.8 858.1 572.3" fill="none" stroke="#fbf4ca" stroke-width="1.6" stroke-linecap="round" stroke-linejoin="round"/>
<path d="M811.3 640.0C807.8 642.1 800.8 646.2 790.3 652.9C779.8 659.6 755.4 675.5 748.4 680.0" fill="none" stroke="#fbf4ca" stroke-width="1.6" stroke-linecap="round" stroke-linejoin="round"/>
<path d="M811.3 640.0 L837.1 643.2" fill="none" stroke="#fbf4ca" stroke-width="1.6" stroke-linecap="round" stroke-linejoin="round"/>
<path d="M837.1 643.2C838.5 641.1 842.2 634.1 845.2 630.3C848.2 626.5 850.5 623.5 854.8 620.6C859.1 617.7 865.9 614.6 871.0 612.6C876.1 610.6 879.0 609.5 885.5 608.5C892.0 607.5 900.6 607.0 909.7 606.9C918.8 606.8 935.0 607.6 940.0 607.7" fill="none" stroke="#fbf4ca" stroke-width="1.6" stroke-linecap="round" stroke-linejoin="round"/>
<path d="M885.5 556.1 L890.3 586.8" fill="none" stroke="#fbf4ca" stroke-width="1.6" stroke-linecap="round" stroke-linejoin="round"/>
<path d="M753.2 630.3C754.3 634.1 759.7 648.0 759.7 652.9C759.7 657.8 754.3 658.3 753.2 659.4" fill="none" stroke="#fbf4ca" stroke-width="1.6" stroke-linecap="round" stroke-linejoin="round"/>
<path d="M700.0 630.3C702.7 631.6 711.5 636.0 716.1 638.4C720.7 640.8 725.5 643.7 727.4 644.8" fill="none" stroke="#fbf4ca" stroke-width="1.6" stroke-linecap="round" stroke-linejoin="round"/>
<path d="M712.9 613.4 L740.3 588.4" fill="none" stroke="#fbf4ca" stroke-width="1.6" stroke-linecap="round" stroke-linejoin="round"/>
<path d="M724.2 556.1 L733.9 570.6" fill="none" stroke="#fbf4ca" stroke-width="1.6" stroke-linecap="round" stroke-linejoin="round"/>
<path d="M885.5 661.0C889.5 660.5 900.6 659.3 909.7 657.7C918.8 656.1 935.0 652.4 940.0 651.3" fill="none" stroke="#fbf4ca" stroke-width="1.6" stroke-linecap="round" stroke-linejoin="round"/>
<path d="M767.7 554.5 L773.4 615.8" fill="none" stroke="#fbf4ca" stroke-width="1.6" stroke-linecap="round" stroke-linejoin="round"/>
<path d="M858.1 572.3 L877.4 547.3" fill="none" stroke="#fbf4ca" stroke-width="1.6" stroke-linecap="round" stroke-linejoin="round"/>
<path d="M740.3 701.0C749.7 700.7 783.5 700.2 796.8 699.4C810.1 698.6 816.3 696.6 820.2 696.1" fill="none" stroke="#fbf4ca" stroke-width="1.6" stroke-linecap="round" stroke-linejoin="round"/>
<path d="M885.5 661.0C886.3 664.2 886.5 670.1 890.3 680.0C894.1 689.9 905.1 713.6 908.1 720.3" fill="none" stroke="#fbf4ca" stroke-width="1.6" stroke-linecap="round" stroke-linejoin="round"/>
<path d="M908.1 684.8 L940.0 676.8" fill="none" stroke="#fbf4ca" stroke-width="1.6" stroke-linecap="round" stroke-linejoin="round"/>
<path d="M861.3 720.3 L893.5 713.9" fill="none" stroke="#fbf4ca" stroke-width="1.6" stroke-linecap="round" stroke-linejoin="round"/>
<path d="M837.1 809.0C841.1 806.3 850.5 795.6 861.3 792.9C872.0 790.2 890.9 794.2 901.6 792.9C912.4 791.5 921.8 786.1 925.8 784.8" fill="none" stroke="#fbf4ca" stroke-width="1.6" stroke-linecap="round" stroke-linejoin="round"/>
<path d="M877.4 744.5 L879.0 792.9" fill="none" stroke="#fbf4ca" stroke-width="1.6" stroke-linecap="round" stroke-linejoin="round"/>
<path d="M771.0 780.0 L803.2 749.4" fill="none" stroke="#fbf4ca" stroke-width="1.6" stroke-linecap="round" stroke-linejoin="round"/>
<path d="M787.1 792.9 L819.4 776.8" fill="none" stroke="#fbf4ca" stroke-width="1.6" stroke-linecap="round" stroke-linejoin="round"/>
<path d="M936.1 679.2 L936.1 715.5" fill="none" stroke="#fbf4ca" stroke-width="1.6" stroke-linecap="round" stroke-linejoin="round"/>
<path d="M968.4 606.9 L968.4 630.3" fill="none" stroke="#fbf4ca" stroke-width="1.6" stroke-linecap="round" stroke-linejoin="round"/>
<path d="M1065.2 586.8 L1065.2 619.0" fill="none" stroke="#fbf4ca" stroke-width="1.6" stroke-linecap="round" stroke-linejoin="round"/>
<path d="M974.8 572.3 L968.4 606.9" fill="none" stroke="#fbf4ca" stroke-width="1.6" stroke-linecap="round" stroke-linejoin="round"/>
<path d="M1057.1 565.8 L1081.3 572.3" fill="none" stroke="#fbf4ca" stroke-width="1.6" stroke-linecap="round" stroke-linejoin="round"/>
<path d="M920.0 643.2 L936.1 643.2" fill="none" stroke="#fbf4ca" stroke-width="1.6" stroke-linecap="round" stroke-linejoin="round"/>
<path d="M1010.3 665.8C1012.4 664.2 1018.4 658.0 1023.2 656.1C1028.1 654.2 1036.7 654.8 1039.4 654.5" fill="none" stroke="#fbf4ca" stroke-width="1.6" stroke-linecap="round" stroke-linejoin="round"/>
<path d="M1023.2 697.7 L1032.9 680.0" fill="none" stroke="#fbf4ca" stroke-width="1.6" stroke-linecap="round" stroke-linejoin="round"/>
<path d="M1036.1 749.4 L1039.4 753.4" fill="none" stroke="#fbf4ca" stroke-width="1.6" stroke-linecap="round" stroke-linejoin="round"/>
<path d="M657.4 584.4C658.2 588.3 659.6 600.1 662.3 607.7C665.0 615.4 671.6 626.5 673.5 630.3" fill="none" stroke="#fbf4ca" stroke-width="1.6" stroke-linecap="round" stroke-linejoin="round"/>
<path d="M670.3 583.5 L720.0 572.3" fill="none" stroke="#fbf4ca" stroke-width="1.6" stroke-linecap="round" stroke-linejoin="round"/>
<path d="M689.7 565.8C690.8 570.4 692.9 584.9 696.1 593.2C699.3 601.5 706.9 612.0 709.0 615.8" fill="none" stroke="#fbf4ca" stroke-width="1.6" stroke-linecap="round" stroke-linejoin="round"/>
<path d="M662.3 607.7C667.9 605.3 686.5 596.7 696.1 593.2C705.7 589.7 716.0 587.9 720.0 586.8" fill="none" stroke="#fbf4ca" stroke-width="1.6" stroke-linecap="round" stroke-linejoin="round"/>
<path d="M673.5 630.3C679.4 627.9 701.2 619.0 709.0 615.8C716.8 612.6 718.2 611.8 720.0 611.0" fill="none" stroke="#fbf4ca" stroke-width="1.6" stroke-linecap="round" stroke-linejoin="round"/>
<path d="M705.8 548.1 L709.0 562.6" fill="none" stroke="#fbf4ca" stroke-width="1.6" stroke-linecap="round" stroke-linejoin="round"/>
<path d="M327.7 664.2C330.4 663.2 338.0 660.6 343.9 658.5C349.8 656.4 356.2 654.1 363.2 651.3C370.2 648.5 379.6 644.4 385.8 641.6C392.0 638.8 395.5 636.4 400.3 634.4C405.1 632.4 408.9 631.1 414.8 629.5C420.7 627.9 429.4 626.2 435.8 624.7C442.2 623.2 447.9 621.8 453.5 620.6C459.1 619.4 461.9 618.6 469.7 617.4C477.4 616.2 494.9 614.1 500.0 613.4" fill="none" stroke="#eadca0" stroke-width="2.6" stroke-linecap="round" stroke-linejoin="round"/>
<path d="M363.2 552.1C364.3 554.4 367.5 560.8 369.7 565.8C371.9 570.8 373.7 576.2 376.1 581.9C378.5 587.5 381.5 594.1 384.2 599.7C386.9 605.4 389.6 610.0 392.3 615.8C395.0 621.6 399.0 631.3 400.3 634.4" fill="none" stroke="#eadca0" stroke-width="2.6" stroke-linecap="round" stroke-linejoin="round"/>
<path d="M369.7 564.2C374.3 562.7 388.5 557.4 397.1 555.3C405.7 553.1 417.3 552.0 421.3 551.3" fill="none" stroke="#eadca0" stroke-width="2.6" stroke-linecap="round" stroke-linejoin="round"/>
<path d="M500.0 557.7C494.9 559.3 479.3 565.0 469.7 567.4C460.1 569.8 448.4 569.3 442.3 572.3C436.2 575.3 435.3 579.8 433.4 585.2C431.5 590.6 430.6 597.9 431.0 604.5C431.4 611.1 435.0 621.3 435.8 624.7" fill="none" stroke="#eadca0" stroke-width="2.6" stroke-linecap="round" stroke-linejoin="round"/>
<path d="M440.6 546.5 L443.9 572.3" fill="none" stroke="#eadca0" stroke-width="2.6" stroke-linecap="round" stroke-linejoin="round"/>
<path d="M440.6 624.7C441.4 627.8 443.9 636.9 445.5 643.2C447.1 649.5 448.4 656.5 450.3 662.6C452.2 668.7 455.7 677.1 456.8 680.0" fill="none" stroke="#eadca0" stroke-width="2.6" stroke-linecap="round" stroke-linejoin="round"/>
<path d="M393.9 585.2C396.8 588.4 405.4 598.9 411.6 604.5C417.8 610.1 427.8 616.6 431.0 619.0" fill="none" stroke="#eadca0" stroke-width="2.6" stroke-linecap="round" stroke-linejoin="round"/>
<path d="M266.5 547.3C267.8 550.9 272.4 562.1 274.5 569.0C276.6 575.9 278.0 581.9 279.4 588.4C280.8 594.9 281.8 600.7 282.6 607.7C283.4 614.7 283.9 622.2 284.2 630.3C284.5 638.4 284.2 651.8 284.2 656.1" fill="none" stroke="#eadca0" stroke-width="2.6" stroke-linecap="round" stroke-linejoin="round"/>
<path d="M356.8 746.1C362.2 743.7 378.2 736.8 389.0 731.6C399.8 726.4 410.6 720.4 421.3 714.7C432.1 709.1 445.4 702.4 453.5 697.7C461.6 693.0 461.9 688.7 469.7 686.5C477.4 684.3 494.9 684.8 500.0 684.5" fill="none" stroke="#eadca0" stroke-width="2.6" stroke-linecap="round" stroke-linejoin="round"/>
<path d="M289.0 765.5C294.9 765.0 313.2 765.5 324.5 762.3C335.8 759.1 351.4 748.8 356.8 746.1" fill="none" stroke="#eadca0" stroke-width="2.6" stroke-linecap="round" stroke-linejoin="round"/>
<path d="M297.1 680.0C297.4 682.7 299.5 688.0 298.7 696.1C297.9 704.2 294.2 720.3 292.3 728.4C290.4 736.5 288.3 738.3 287.4 744.5C286.4 750.7 286.7 762.0 286.6 765.5" fill="none" stroke="#eadca0" stroke-width="2.6" stroke-linecap="round" stroke-linejoin="round"/>
<path d="M356.8 747.7C358.9 749.9 366.2 756.3 369.7 760.6C373.2 764.9 375.9 769.5 377.7 773.5C379.4 777.5 378.6 780.5 380.2 784.8C381.8 789.1 384.8 795.4 387.4 799.4C389.9 803.4 394.1 807.4 395.5 809.0" fill="none" stroke="#eadca0" stroke-width="2.6" stroke-linecap="round" stroke-linejoin="round"/>
<path d="M426.1 714.7C427.2 717.8 429.9 727.0 432.6 733.2C435.3 739.4 440.7 748.7 442.3 751.8" fill="none" stroke="#eadca0" stroke-width="2.6" stroke-linecap="round" stroke-linejoin="round"/>
<path d="M287.4 783.2C288.2 785.9 291.1 795.1 292.3 799.4C293.5 803.7 294.3 807.4 294.7 809.0" fill="none" stroke="#eadca0" stroke-width="2.6" stroke-linecap="round" stroke-linejoin="round"/>
<path d="M453.5 805.8C457.5 803.6 469.9 796.7 477.7 792.9C485.4 789.1 496.3 784.8 500.0 783.2" fill="none" stroke="#eadca0" stroke-width="2.6" stroke-linecap="round" stroke-linejoin="round"/>
<path d="M480.0 614.2C486.4 613.2 507.1 610.5 518.7 608.5C530.3 606.5 541.3 603.8 549.4 602.1C557.5 600.4 559.9 599.2 567.1 598.1C574.4 597.0 582.4 596.7 592.9 595.6C603.4 594.5 623.8 592.3 630.0 591.6" fill="none" stroke="#eadca0" stroke-width="2.6" stroke-linecap="round" stroke-linejoin="round"/>
<path d="M501.0 548.1C504.2 550.5 513.6 557.2 520.3 562.6C527.0 568.0 536.4 575.2 541.3 580.3C546.1 585.4 548.0 589.6 549.4 593.2C550.8 596.8 549.4 600.6 549.4 602.1" fill="none" stroke="#eadca0" stroke-width="2.6" stroke-linecap="round" stroke-linejoin="round"/>
<path d="M480.0 567.4C484.0 565.5 496.4 559.3 504.2 556.1C512.0 552.9 523.0 549.4 526.8 548.1" fill="none" stroke="#eadca0" stroke-width="2.6" stroke-linecap="round" stroke-linejoin="round"/>
<path d="M541.3 577.9C544.5 575.1 552.0 566.0 560.6 561.0C569.2 556.0 587.5 550.2 592.9 548.1" fill="none" stroke="#eadca0" stroke-width="2.6" stroke-linecap="round" stroke-linejoin="round"/>
<path d="M551.0 588.4C555.3 584.4 569.3 570.7 576.8 564.2C584.3 557.8 592.9 552.1 596.1 549.7" fill="none" stroke="#eadca0" stroke-width="2.6" stroke-linecap="round" stroke-linejoin="round"/>
<path d="M628.4 579.5C633.2 578.3 647.2 574.6 657.4 572.3C667.6 570.0 679.3 567.9 689.7 565.8C700.1 563.6 715.0 560.5 720.0 559.4" fill="none" stroke="#eadca0" stroke-width="2.6" stroke-linecap="round" stroke-linejoin="round"/>
<path d="M646.1 547.3C646.9 550.1 649.1 558.2 651.0 564.2C652.9 570.2 656.3 580.3 657.4 583.5" fill="none" stroke="#eadca0" stroke-width="2.6" stroke-linecap="round" stroke-linejoin="round"/>
<path d="M660.6 547.3C662.2 553.3 670.8 577.3 670.3 583.5C669.8 589.7 659.5 584.2 657.4 584.4" fill="none" stroke="#eadca0" stroke-width="2.6" stroke-linecap="round" stroke-linejoin="round"/>
<path d="M681.6 547.3 L683.2 557.7" fill="none" stroke="#eadca0" stroke-width="2.6" stroke-linecap="round" stroke-linejoin="round"/>
<path d="M475.2 684.8C476.0 684.9 472.5 684.8 480.0 685.6C487.5 686.4 507.7 688.7 520.3 689.4C532.9 690.1 538.3 690.1 555.8 690.0C573.3 689.9 613.6 689.1 625.2 688.9" fill="none" stroke="#eadca0" stroke-width="2.6" stroke-linecap="round" stroke-linejoin="round"/>
<path d="M480.0 786.5C484.0 786.0 496.1 784.8 504.2 783.2C512.3 781.6 521.1 780.3 528.4 776.8C535.6 773.3 542.9 765.7 547.7 762.3C552.5 758.9 555.8 757.5 557.4 756.6" fill="none" stroke="#eadca0" stroke-width="2.6" stroke-linecap="round" stroke-linejoin="round"/>
<path d="M557.4 756.6C559.5 759.4 566.5 767.5 570.3 773.5C574.1 779.5 577.6 787.0 580.0 792.9C582.4 798.8 584.0 806.3 584.8 809.0" fill="none" stroke="#eadca0" stroke-width="2.6" stroke-linecap="round" stroke-linejoin="round"/>
<path d="M633.2 689.7C634.3 694.8 637.3 709.0 639.7 720.3C642.1 731.6 645.7 748.9 647.7 757.4C649.7 765.9 651.2 766.2 651.8 771.1C652.3 776.0 649.5 781.8 651.0 786.5C652.5 791.2 657.9 795.6 660.6 799.4C663.3 803.1 666.0 807.4 667.1 809.0" fill="none" stroke="#eadca0" stroke-width="2.6" stroke-linecap="round" stroke-linejoin="round"/>
<path d="M612.3 726.8C617.1 727.1 632.2 728.9 641.3 728.4C650.4 727.9 659.6 726.2 667.1 723.5C674.6 720.8 683.3 714.2 686.5 712.3" fill="none" stroke="#eadca0" stroke-width="2.6" stroke-linecap="round" stroke-linejoin="round"/>
<path d="M596.1 809.0C599.9 805.8 611.2 795.1 618.7 789.7C626.2 784.3 635.8 779.9 641.3 776.8C646.8 773.7 647.8 774.3 651.8 771.1C655.8 767.9 660.5 761.8 665.5 757.4C670.5 753.0 677.0 748.3 681.6 744.5C686.2 740.7 691.0 736.4 692.9 734.8" fill="none" stroke="#eadca0" stroke-width="2.6" stroke-linecap="round" stroke-linejoin="round"/>
<path d="M657.4 799.4C660.1 797.0 667.6 787.5 673.5 784.8C679.4 782.1 685.1 781.9 692.9 783.2C700.6 784.6 715.5 791.3 720.0 792.9" fill="none" stroke="#eadca0" stroke-width="2.6" stroke-linecap="round" stroke-linejoin="round"/>
<path d="M688.1 809.0C688.4 805.0 686.2 793.4 689.7 784.8C693.2 776.2 705.8 762.0 709.0 757.4" fill="none" stroke="#eadca0" stroke-width="2.6" stroke-linecap="round" stroke-linejoin="round"/>
<path d="M1357.7 620.6C1359.0 621.7 1362.1 625.5 1365.8 627.1C1369.5 628.7 1377.6 629.8 1380.0 630.3" fill="none" stroke="#eadca0" stroke-width="2.6" stroke-linecap="round" stroke-linejoin="round"/>
<path d="M1358.5 651.3C1358.1 648.9 1355.7 640.8 1356.1 636.8C1356.5 632.8 1359.4 629.8 1361.0 627.1C1362.6 624.4 1365.0 621.7 1365.8 620.6" fill="none" stroke="#eadca0" stroke-width="2.6" stroke-linecap="round" stroke-linejoin="round"/>
<path d="M1204.5 710.6C1206.7 708.7 1213.1 703.1 1217.4 699.4C1221.7 695.6 1227.1 691.3 1230.3 688.1C1233.5 684.9 1235.7 681.4 1236.8 680.0" fill="none" stroke="#eadca0" stroke-width="2.6" stroke-linecap="round" stroke-linejoin="round"/>
<path d="M1534.2 548.1C1536.1 550.2 1542.8 558.0 1545.5 561.0C1548.2 564.0 1549.5 565.0 1550.3 565.8" fill="none" stroke="#eadca0" stroke-width="2.6" stroke-linecap="round" stroke-linejoin="round"/>
<path d="M1584.5 548.1C1580.7 549.7 1567.3 554.8 1561.6 557.7C1555.9 560.7 1552.2 564.4 1550.3 565.8" fill="none" stroke="#eadca0" stroke-width="2.6" stroke-linecap="round" stroke-linejoin="round"/>
<path d="M327.7 664.2C330.4 663.2 338.0 660.6 343.9 658.5C349.8 656.4 356.2 654.1 363.2 651.3C370.2 648.5 379.6 644.4 385.8 641.6C392.0 638.8 395.5 636.4 400.3 634.4C405.1 632.4 408.9 631.1 414.8 629.5C420.7 627.9 429.4 626.2 435.8 624.7C442.2 623.2 447.9 621.8 453.5 620.6C459.1 619.4 461.9 618.6 469.7 617.4C477.4 616.2 494.9 614.1 500.0 613.4" fill="none" stroke="#f8e9a6" stroke-width="1.7" stroke-linecap="round" stroke-linejoin="round"/>
<path d="M363.2 552.1C364.3 554.4 367.5 560.8 369.7 565.8C371.9 570.8 373.7 576.2 376.1 581.9C378.5 587.5 381.5 594.1 384.2 599.7C386.9 605.4 389.6 610.0 392.3 615.8C395.0 621.6 399.0 631.3 400.3 634.4" fill="none" stroke="#f8e9a6" stroke-width="1.7" stroke-linecap="round" stroke-linejoin="round"/>
<path d="M369.7 564.2C374.3 562.7 388.5 557.4 397.1 555.3C405.7 553.1 417.3 552.0 421.3 551.3" fill="none" stroke="#f8e9a6" stroke-width="1.7" stroke-linecap="round" stroke-linejoin="round"/>
<path d="M500.0 557.7C494.9 559.3 479.3 565.0 469.7 567.4C460.1 569.8 448.4 569.3 442.3 572.3C436.2 575.3 435.3 579.8 433.4 585.2C431.5 590.6 430.6 597.9 431.0 604.5C431.4 611.1 435.0 621.3 435.8 624.7" fill="none" stroke="#f8e9a6" stroke-width="1.7" stroke-linecap="round" stroke-linejoin="round"/>
<path d="M440.6 546.5 L443.9 572.3" fill="none" stroke="#f8e9a6" stroke-width="1.7" stroke-linecap="round" stroke-linejoin="round"/>
<path d="M440.6 624.7C441.4 627.8 443.9 636.9 445.5 643.2C447.1 649.5 448.4 656.5 450.3 662.6C452.2 668.7 455.7 677.1 456.8 680.0" fill="none" stroke="#f8e9a6" stroke-width="1.7" stroke-linecap="round" stroke-linejoin="round"/>
<path d="M393.9 585.2C396.8 588.4 405.4 598.9 411.6 604.5C417.8 610.1 427.8 616.6 431.0 619.0" fill="none" stroke="#f8e9a6" stroke-width="1.7" stroke-linecap="round" stroke-linejoin="round"/>
<path d="M266.5 547.3C267.8 550.9 272.4 562.1 274.5 569.0C276.6 575.9 278.0 581.9 279.4 588.4C280.8 594.9 281.8 600.7 282.6 607.7C283.4 614.7 283.9 622.2 284.2 630.3C284.5 638.4 284.2 651.8 284.2 656.1" fill="none" stroke="#f8e9a6" stroke-width="1.7" stroke-linecap="round" stroke-linejoin="round"/>
<path d="M356.8 746.1C362.2 743.7 378.2 736.8 389.0 731.6C399.8 726.4 410.6 720.4 421.3 714.7C432.1 709.1 445.4 702.4 453.5 697.7C461.6 693.0 461.9 688.7 469.7 686.5C477.4 684.3 494.9 684.8 500.0 684.5" fill="none" stroke="#f8e9a6" stroke-width="1.7" stroke-linecap="round" stroke-linejoin="round"/>
<path d="M289.0 765.5C294.9 765.0 313.2 765.5 324.5 762.3C335.8 759.1 351.4 748.8 356.8 746.1" fill="none" stroke="#f8e9a6" stroke-width="1.7" stroke-linecap="round" stroke-linejoin="round"/>
<path d="M297.1 680.0C297.4 682.7 299.5 688.0 298.7 696.1C297.9 704.2 294.2 720.3 292.3 728.4C290.4 736.5 288.3 738.3 287.4 744.5C286.4 750.7 286.7 762.0 286.6 765.5" fill="none" stroke="#f8e9a6" stroke-width="1.7" stroke-linecap="round" stroke-linejoin="round"/>
<path d="M356.8 747.7C358.9 749.9 366.2 756.3 369.7 760.6C373.2 764.9 375.9 769.5 377.7 773.5C379.4 777.5 378.6 780.5 380.2 784.8C381.8 789.1 384.8 795.4 387.4 799.4C389.9 803.4 394.1 807.4 395.5 809.0" fill="none" stroke="#f8e9a6" stroke-width="1.7" stroke-linecap="round" stroke-linejoin="round"/>
<path d="M426.1 714.7C427.2 717.8 429.9 727.0 432.6 733.2C435.3 739.4 440.7 748.7 442.3 751.8" fill="none" stroke="#f8e9a6" stroke-width="1.7" stroke-linecap="round" stroke-linejoin="round"/>
<path d="M287.4 783.2C288.2 785.9 291.1 795.1 292.3 799.4C293.5 803.7 294.3 807.4 294.7 809.0" fill="none" stroke="#f8e9a6" stroke-width="1.7" stroke-linecap="round" stroke-linejoin="round"/>
<path d="M453.5 805.8C457.5 803.6 469.9 796.7 477.7 792.9C485.4 789.1 496.3 784.8 500.0 783.2" fill="none" stroke="#f8e9a6" stroke-width="1.7" stroke-linecap="round" stroke-linejoin="round"/>
<path d="M480.0 614.2C486.4 613.2 507.1 610.5 518.7 608.5C530.3 606.5 541.3 603.8 549.4 602.1C557.5 600.4 559.9 599.2 567.1 598.1C574.4 597.0 582.4 596.7 592.9 595.6C603.4 594.5 623.8 592.3 630.0 591.6" fill="none" stroke="#f8e9a6" stroke-width="1.7" stroke-linecap="round" stroke-linejoin="round"/>
<path d="M501.0 548.1C504.2 550.5 513.6 557.2 520.3 562.6C527.0 568.0 536.4 575.2 541.3 580.3C546.1 585.4 548.0 589.6 549.4 593.2C550.8 596.8 549.4 600.6 549.4 602.1" fill="none" stroke="#f8e9a6" stroke-width="1.7" stroke-linecap="round" stroke-linejoin="round"/>
<path d="M480.0 567.4C484.0 565.5 496.4 559.3 504.2 556.1C512.0 552.9 523.0 549.4 526.8 548.1" fill="none" stroke="#f8e9a6" stroke-width="1.7" stroke-linecap="round" stroke-linejoin="round"/>
<path d="M541.3 577.9C544.5 575.1 552.0 566.0 560.6 561.0C569.2 556.0 587.5 550.2 592.9 548.1" fill="none" stroke="#f8e9a6" stroke-width="1.7" stroke-linecap="round" stroke-linejoin="round"/>
<path d="M551.0 588.4C555.3 584.4 569.3 570.7 576.8 564.2C584.3 557.8 592.9 552.1 596.1 549.7" fill="none" stroke="#f8e9a6" stroke-width="1.7" stroke-linecap="round" stroke-linejoin="round"/>
<path d="M628.4 579.5C633.2 578.3 647.2 574.6 657.4 572.3C667.6 570.0 679.3 567.9 689.7 565.8C700.1 563.6 715.0 560.5 720.0 559.4" fill="none" stroke="#f8e9a6" stroke-width="1.7" stroke-linecap="round" stroke-linejoin="round"/>
<path d="M646.1 547.3C646.9 550.1 649.1 558.2 651.0 564.2C652.9 570.2 656.3 580.3 657.4 583.5" fill="none" stroke="#f8e9a6" stroke-width="1.7" stroke-linecap="round" stroke-linejoin="round"/>
<path d="M660.6 547.3C662.2 553.3 670.8 577.3 670.3 583.5C669.8 589.7 659.5 584.2 657.4 584.4" fill="none" stroke="#f8e9a6" stroke-width="1.7" stroke-linecap="round" stroke-linejoin="round"/>
<path d="M681.6 547.3 L683.2 557.7" fill="none" stroke="#f8e9a6" stroke-width="1.7" stroke-linecap="round" stroke-linejoin="round"/>
<path d="M475.2 684.8C476.0 684.9 472.5 684.8 480.0 685.6C487.5 686.4 507.7 688.7 520.3 689.4C532.9 690.1 538.3 690.1 555.8 690.0C573.3 689.9 613.6 689.1 625.2 688.9" fill="none" stroke="#f8e9a6" stroke-width="1.7" stroke-linecap="round" stroke-linejoin="round"/>
<path d="M480.0 786.5C484.0 786.0 496.1 784.8 504.2 783.2C512.3 781.6 521.1 780.3 528.4 776.8C535.6 773.3 542.9 765.7 547.7 762.3C552.5 758.9 555.8 757.5 557.4 756.6" fill="none" stroke="#f8e9a6" stroke-width="1.7" stroke-linecap="round" stroke-linejoin="round"/>
<path d="M557.4 756.6C559.5 759.4 566.5 767.5 570.3 773.5C574.1 779.5 577.6 787.0 580.0 792.9C582.4 798.8 584.0 806.3 584.8 809.0" fill="none" stroke="#f8e9a6" stroke-width="1.7" stroke-linecap="round" stroke-linejoin="round"/>
<path d="M633.2 689.7C634.3 694.8 637.3 709.0 639.7 720.3C642.1 731.6 645.7 748.9 647.7 757.4C649.7 765.9 651.2 766.2 651.8 771.1C652.3 776.0 649.5 781.8 651.0 786.5C652.5 791.2 657.9 795.6 660.6 799.4C663.3 803.1 666.0 807.4 667.1 809.0" fill="none" stroke="#f8e9a6" stroke-width="1.7" stroke-linecap="round" stroke-linejoin="round"/>
<path d="M612.3 726.8C617.1 727.1 632.2 728.9 641.3 728.4C650.4 727.9 659.6 726.2 667.1 723.5C674.6 720.8 683.3 714.2 686.5 712.3" fill="none" stroke="#f8e9a6" stroke-width="1.7" stroke-linecap="round" stroke-linejoin="round"/>
<path d="M596.1 809.0C599.9 805.8 611.2 795.1 618.7 789.7C626.2 784.3 635.8 779.9 641.3 776.8C646.8 773.7 647.8 774.3 651.8 771.1C655.8 767.9 660.5 761.8 665.5 757.4C670.5 753.0 677.0 748.3 681.6 744.5C686.2 740.7 691.0 736.4 692.9 734.8" fill="none" stroke="#f8e9a6" stroke-width="1.7" stroke-linecap="round" stroke-linejoin="round"/>
<path d="M657.4 799.4C660.1 797.0 667.6 787.5 673.5 784.8C679.4 782.1 685.1 781.9 692.9 783.2C700.6 784.6 715.5 791.3 720.0 792.9" fill="none" stroke="#f8e9a6" stroke-width="1.7" stroke-linecap="round" stroke-linejoin="round"/>
<path d="M688.1 809.0C688.4 805.0 686.2 793.4 689.7 784.8C693.2 776.2 705.8 762.0 709.0 757.4" fill="none" stroke="#f8e9a6" stroke-width="1.7" stroke-linecap="round" stroke-linejoin="round"/>
<path d="M1357.7 620.6C1359.0 621.7 1362.1 625.5 1365.8 627.1C1369.5 628.7 1377.6 629.8 1380.0 630.3" fill="none" stroke="#f8e9a6" stroke-width="1.7" stroke-linecap="round" stroke-linejoin="round"/>
<path d="M1358.5 651.3C1358.1 648.9 1355.7 640.8 1356.1 636.8C1356.5 632.8 1359.4 629.8 1361.0 627.1C1362.6 624.4 1365.0 621.7 1365.8 620.6" fill="none" stroke="#f8e9a6" stroke-width="1.7" stroke-linecap="round" stroke-linejoin="round"/>
<path d="M1204.5 710.6C1206.7 708.7 1213.1 703.1 1217.4 699.4C1221.7 695.6 1227.1 691.3 1230.3 688.1C1233.5 684.9 1235.7 681.4 1236.8 680.0" fill="none" stroke="#f8e9a6" stroke-width="1.7" stroke-linecap="round" stroke-linejoin="round"/>
<path d="M1534.2 548.1C1536.1 550.2 1542.8 558.0 1545.5 561.0C1548.2 564.0 1549.5 565.0 1550.3 565.8" fill="none" stroke="#f8e9a6" stroke-width="1.7" stroke-linecap="round" stroke-linejoin="round"/>
<path d="M1584.5 548.1C1580.7 549.7 1567.3 554.8 1561.6 557.7C1555.9 560.7 1552.2 564.4 1550.3 565.8" fill="none" stroke="#f8e9a6" stroke-width="1.7" stroke-linecap="round" stroke-linejoin="round"/>
<path d="M264.0 570.6C266.3 570.7 273.0 571.1 277.7 571.0C282.4 570.9 288.1 570.3 292.3 570.0C296.5 569.7 299.1 569.6 302.7 569.0C306.3 568.4 309.0 567.9 314.0 566.6C319.0 565.3 326.6 562.9 332.6 561.0C338.7 559.1 345.2 556.9 350.3 555.3C355.4 553.7 359.4 552.7 363.2 551.3C367.0 549.9 371.3 547.5 372.9 546.8" fill="none" stroke="#ead687" stroke-width="3.7" stroke-linecap="round" stroke-linejoin="round"/>
<path d="M302.7 569.0C303.0 570.9 303.7 576.3 304.4 580.3C305.1 584.3 305.9 588.6 306.8 593.2C307.7 597.8 308.9 603.1 310.0 607.7C311.1 612.3 312.0 616.0 313.2 620.6C314.4 625.2 315.8 630.4 317.3 635.2C318.8 640.1 320.4 645.4 322.1 649.7C323.8 654.0 325.9 657.8 327.7 661.0C329.4 664.2 330.7 665.8 332.6 669.0C334.5 672.2 337.9 678.2 339.0 680.0" fill="none" stroke="#ead687" stroke-width="3.7" stroke-linecap="round" stroke-linejoin="round"/>
<path d="M264.0 656.5C267.4 657.1 276.8 658.9 284.2 660.2C291.6 661.5 301.1 663.8 308.4 664.5C315.6 665.2 324.5 664.2 327.7 664.2" fill="none" stroke="#ead687" stroke-width="3.7" stroke-linecap="round" stroke-linejoin="round"/>
<path d="M339.0 680.0C340.9 682.1 346.3 688.6 350.3 692.9C354.3 697.2 358.9 701.2 363.2 705.8C367.5 710.4 371.8 715.5 376.1 720.3C380.4 725.1 384.7 729.9 389.0 734.8C393.3 739.6 397.9 744.3 401.9 749.4C405.9 754.5 411.3 762.8 413.2 765.5" fill="none" stroke="#ead687" stroke-width="3.7" stroke-linecap="round" stroke-linejoin="round"/>
<path d="M371.3 707.4C373.4 708.8 380.7 712.0 384.2 715.5C387.7 719.0 389.4 723.6 392.3 728.4C395.2 733.2 400.3 741.8 401.9 744.5" fill="none" stroke="#ead687" stroke-width="3.7" stroke-linecap="round" stroke-linejoin="round"/>
<path d="M401.9 742.9C404.0 743.8 410.2 748.0 414.8 748.5C419.4 749.0 425.6 747.2 429.4 746.1C433.2 745.0 436.1 742.8 437.4 742.1" fill="none" stroke="#ead687" stroke-width="3.7" stroke-linecap="round" stroke-linejoin="round"/>
<path d="M442.3 751.0C445.5 751.0 452.0 751.3 461.6 751.0C471.2 750.7 493.6 749.7 500.0 749.4" fill="none" stroke="#ead687" stroke-width="3.7" stroke-linecap="round" stroke-linejoin="round"/>
<path d="M264.0 754.2C265.8 755.3 271.4 758.3 274.5 760.6C277.6 762.9 281.2 766.7 282.6 767.9" fill="none" stroke="#ead687" stroke-width="3.7" stroke-linecap="round" stroke-linejoin="round"/>
<path d="M264.0 768.4C267.1 768.2 277.1 767.9 282.6 767.4C288.1 766.9 294.7 765.8 297.1 765.5" fill="none" stroke="#ead687" stroke-width="3.7" stroke-linecap="round" stroke-linejoin="round"/>
<path d="M264.0 778.4C266.0 777.5 272.7 774.8 276.1 773.2C279.5 771.6 282.9 769.5 284.2 768.7" fill="none" stroke="#ead687" stroke-width="3.7" stroke-linecap="round" stroke-linejoin="round"/>
<path d="M592.9 544.8C595.6 547.5 603.6 555.4 609.0 561.0C614.4 566.6 620.9 573.9 625.2 578.7C629.5 583.5 631.3 585.7 634.8 590.0C638.3 594.3 642.3 599.4 646.1 604.5C649.9 609.6 653.4 615.2 657.4 620.6C661.4 626.0 666.5 631.4 670.3 636.8C674.1 642.2 677.8 647.5 680.0 652.9C682.2 658.3 683.2 664.5 683.5 669.0C683.8 673.5 681.9 678.2 681.6 680.0" fill="none" stroke="#ead687" stroke-width="3.7" stroke-linecap="round" stroke-linejoin="round"/>
<path d="M681.6 679.2C677.6 679.7 664.1 680.9 657.4 681.9C650.7 682.9 645.9 683.9 641.3 685.2C636.7 686.5 633.0 687.6 630.0 689.7C627.0 691.8 625.6 693.9 623.5 697.7C621.4 701.5 620.6 708.0 617.1 712.3C613.6 716.6 608.0 720.0 602.6 723.5C597.2 727.0 590.2 730.5 584.8 733.2C579.4 735.9 577.0 738.0 570.3 739.7C563.6 741.5 554.2 742.4 544.5 743.7C534.8 745.0 523.0 746.5 512.3 747.7C501.5 748.9 485.4 750.5 480.0 751.0" fill="none" stroke="#ead687" stroke-width="3.7" stroke-linecap="round" stroke-linejoin="round"/>
<path d="M584.8 733.2C585.1 735.1 586.2 740.2 586.5 744.5C586.8 748.8 588.1 754.7 586.5 759.0C584.9 763.3 580.6 766.3 576.8 770.3C573.0 774.3 568.2 778.9 563.9 783.2C559.6 787.5 554.8 791.8 551.0 796.1C547.2 800.4 542.9 806.9 541.3 809.0" fill="none" stroke="#ead687" stroke-width="3.7" stroke-linecap="round" stroke-linejoin="round"/>
<path d="M720.0 721.1C717.6 721.3 710.0 721.1 705.8 722.3C701.5 723.5 697.7 726.3 694.5 728.4C691.3 730.5 687.8 733.7 686.5 734.8" fill="none" stroke="#ead687" stroke-width="3.7" stroke-linecap="round" stroke-linejoin="round"/>
<path d="M694.5 726.8C696.4 729.8 701.5 738.9 705.8 744.5C710.0 750.1 717.6 757.9 720.0 760.6" fill="none" stroke="#ead687" stroke-width="3.7" stroke-linecap="round" stroke-linejoin="round"/>
<path d="M680.0 684.8C681.6 687.5 686.8 695.6 689.7 701.0C692.7 706.4 695.0 713.6 697.7 717.1C700.4 720.6 704.4 721.4 705.8 722.3" fill="none" stroke="#ead687" stroke-width="3.7" stroke-linecap="round" stroke-linejoin="round"/>
<path d="M700.0 721.9C703.2 721.8 714.0 720.3 719.4 721.1C724.8 721.9 729.9 724.5 732.3 726.8C734.7 729.1 733.9 730.8 733.9 734.8C733.9 738.8 731.2 747.2 732.3 751.0C733.4 754.8 736.8 754.7 740.3 757.4C743.8 760.1 748.1 763.3 753.2 767.1C758.3 770.9 765.4 775.7 771.0 780.0C776.6 784.3 782.3 789.1 787.1 792.9C791.9 796.7 797.9 801.0 800.0 802.6" fill="none" stroke="#ead687" stroke-width="3.7" stroke-linecap="round" stroke-linejoin="round"/>
<path d="M700.0 755.8C702.7 756.6 710.7 757.4 716.1 760.6C721.5 763.8 726.1 770.4 732.3 775.2C738.5 780.1 746.5 785.1 753.2 789.7C759.9 794.3 767.0 800.9 772.6 802.6C778.2 804.4 784.7 801.8 787.1 800.2C789.5 798.6 787.1 794.1 787.1 792.9" fill="none" stroke="#ead687" stroke-width="3.7" stroke-linecap="round" stroke-linejoin="round"/>
<path d="M732.3 751.0 L719.4 760.6" fill="none" stroke="#ead687" stroke-width="3.7" stroke-linecap="round" stroke-linejoin="round"/>
<path d="M709.7 721.9C710.0 723.8 707.5 731.1 711.3 733.2C715.1 735.4 728.8 734.5 732.3 734.8" fill="none" stroke="#ead687" stroke-width="3.7" stroke-linecap="round" stroke-linejoin="round"/>
<path d="M940.0 780.0C937.6 780.8 929.5 782.6 925.8 784.8C922.1 786.9 920.4 788.9 917.7 792.9C915.0 796.9 911.0 806.3 909.7 809.0" fill="none" stroke="#ead687" stroke-width="3.7" stroke-linecap="round" stroke-linejoin="round"/>
<path d="M940.0 783.2C938.7 785.9 934.1 795.1 932.3 799.4C930.5 803.7 929.5 807.4 929.0 809.0" fill="none" stroke="#ead687" stroke-width="3.7" stroke-linecap="round" stroke-linejoin="round"/>
<path d="M1100.6 546.5C1101.9 549.5 1105.7 558.6 1108.7 564.2C1111.7 569.8 1115.2 574.9 1118.4 580.3C1121.6 585.7 1125.1 591.4 1128.1 596.5C1131.0 601.6 1134.5 607.0 1136.1 611.0C1137.7 615.0 1138.8 617.9 1137.7 620.6C1136.6 623.3 1134.8 625.8 1129.7 627.1C1124.6 628.5 1110.9 628.4 1107.1 628.7" fill="none" stroke="#ead687" stroke-width="3.7" stroke-linecap="round" stroke-linejoin="round"/>
<path d="M1100.6 548.1C1101.4 553.5 1105.0 570.9 1105.5 580.3C1106.0 589.7 1104.4 598.3 1103.9 604.5C1103.4 610.7 1102.0 613.6 1102.3 617.4C1102.6 621.2 1106.0 622.5 1105.5 627.1C1105.0 631.7 1101.4 638.3 1099.0 644.8C1096.6 651.2 1093.4 659.9 1091.0 665.8C1088.6 671.7 1085.6 677.6 1084.5 680.0" fill="none" stroke="#ead687" stroke-width="3.7" stroke-linecap="round" stroke-linejoin="round"/>
<path d="M1118.4 570.6C1121.6 568.5 1130.8 561.5 1137.7 557.7C1144.6 554.0 1156.3 549.7 1160.0 548.1" fill="none" stroke="#ead687" stroke-width="3.7" stroke-linecap="round" stroke-linejoin="round"/>
<path d="M1118.4 570.6C1121.6 571.1 1130.8 573.1 1137.7 573.9C1144.6 574.7 1156.3 575.2 1160.0 575.5" fill="none" stroke="#ead687" stroke-width="3.7" stroke-linecap="round" stroke-linejoin="round"/>
<path d="M1129.7 627.1C1132.4 626.6 1140.8 624.6 1145.8 623.9C1150.8 623.2 1157.6 623.2 1160.0 623.1" fill="none" stroke="#ead687" stroke-width="3.7" stroke-linecap="round" stroke-linejoin="round"/>
<path d="M1084.5 680.0C1083.7 682.7 1081.6 690.2 1079.7 696.1C1077.8 702.0 1076.7 709.3 1073.2 715.5C1069.7 721.7 1063.0 727.8 1058.7 733.2C1054.4 738.6 1050.6 744.3 1047.4 747.7C1044.2 751.1 1040.7 752.5 1039.4 753.4" fill="none" stroke="#ead687" stroke-width="3.7" stroke-linecap="round" stroke-linejoin="round"/>
<path d="M1039.4 753.4C1035.6 753.7 1022.7 754.7 1016.8 755.0C1010.9 755.3 1011.4 755.7 1003.9 755.0C996.4 754.3 979.1 752.2 971.6 751.0C964.1 749.8 960.9 748.2 958.7 747.7" fill="none" stroke="#ead687" stroke-width="3.7" stroke-linecap="round" stroke-linejoin="round"/>
<path d="M1039.4 753.4C1041.0 755.1 1045.8 760.0 1049.0 763.9C1052.2 767.8 1055.5 772.5 1058.7 776.8C1061.9 781.1 1064.6 785.4 1068.4 789.7C1072.2 794.0 1077.8 799.4 1081.3 802.6C1084.8 805.8 1088.1 807.9 1089.4 809.0" fill="none" stroke="#ead687" stroke-width="3.7" stroke-linecap="round" stroke-linejoin="round"/>
<path d="M1084.5 684.8C1086.7 686.9 1092.6 693.7 1097.4 697.7C1102.2 701.7 1107.6 705.2 1113.5 709.0C1119.4 712.8 1125.2 718.1 1132.9 720.3C1140.7 722.4 1155.5 721.6 1160.0 721.9" fill="none" stroke="#ead687" stroke-width="3.7" stroke-linecap="round" stroke-linejoin="round"/>
<path d="M1084.5 684.8C1085.6 685.6 1088.3 687.0 1091.0 689.7C1093.7 692.4 1099.0 699.1 1100.6 701.0" fill="none" stroke="#ead687" stroke-width="3.7" stroke-linecap="round" stroke-linejoin="round"/>
<path d="M957.9 746.1C957.8 749.1 959.1 758.2 957.1 763.9C955.1 769.5 949.3 774.6 945.8 780.0C942.3 785.4 939.3 791.3 936.1 796.1C932.9 800.9 928.1 806.9 926.5 809.0" fill="none" stroke="#ead687" stroke-width="3.7" stroke-linecap="round" stroke-linejoin="round"/>
<path d="M920.0 786.5C923.2 785.7 935.1 782.7 939.4 781.6C943.7 780.5 944.7 780.3 945.8 780.0" fill="none" stroke="#ead687" stroke-width="3.7" stroke-linecap="round" stroke-linejoin="round"/>
<path d="M1140.0 574.7C1145.4 574.8 1161.5 575.0 1172.3 575.5C1183.0 576.0 1194.8 576.6 1204.5 577.9C1214.2 579.2 1222.2 581.8 1230.3 583.5C1238.4 585.2 1244.8 587.0 1252.9 588.4C1261.0 589.8 1270.6 590.7 1278.7 591.6C1286.8 592.5 1292.2 593.2 1301.3 594.0C1310.4 594.8 1325.4 595.8 1333.5 596.5C1341.6 597.2 1344.3 597.0 1349.7 598.1C1355.1 599.2 1360.8 601.6 1365.8 602.9C1370.8 604.2 1377.6 605.6 1380.0 606.1" fill="none" stroke="#ead687" stroke-width="3.7" stroke-linecap="round" stroke-linejoin="round"/>
<path d="M1140.0 622.3C1145.4 622.2 1163.4 622.0 1172.3 621.5C1181.2 621.0 1187.3 619.3 1193.2 619.0C1199.1 618.7 1197.8 620.3 1207.7 619.8C1217.7 619.3 1242.1 617.0 1252.9 615.8C1263.7 614.6 1266.9 613.7 1272.3 612.6C1277.7 611.5 1281.5 610.8 1285.2 609.4C1289.0 608.0 1291.0 605.9 1294.8 604.5C1298.5 603.1 1303.9 601.3 1307.7 601.3C1311.5 601.3 1314.4 602.1 1317.4 604.5C1320.4 606.9 1323.3 612.0 1325.5 615.8C1327.7 619.6 1329.5 625.2 1330.3 627.1" fill="none" stroke="#ead687" stroke-width="3.7" stroke-linecap="round" stroke-linejoin="round"/>
<path d="M1140.0 554.5C1141.3 553.7 1145.4 550.9 1148.1 549.7C1150.8 548.5 1154.8 547.7 1156.1 547.3" fill="none" stroke="#ead687" stroke-width="3.7" stroke-linecap="round" stroke-linejoin="round"/>
<path d="M1140.0 721.1C1142.7 721.0 1149.4 721.4 1156.1 720.3C1162.8 719.2 1172.8 716.2 1180.3 714.7C1187.8 713.2 1197.3 711.9 1201.3 711.5C1205.3 711.1 1202.3 709.8 1204.5 712.3C1206.7 714.8 1210.4 721.7 1214.2 726.8C1218.0 731.9 1222.8 738.1 1227.1 742.9C1231.4 747.7 1236.2 751.8 1240.0 755.8C1243.8 759.8 1246.5 763.6 1249.7 767.1C1252.9 770.6 1256.2 773.6 1259.4 776.8C1262.6 780.0 1266.0 783.8 1269.0 786.5C1272.0 789.2 1275.8 791.8 1277.1 792.9" fill="none" stroke="#ead687" stroke-width="3.7" stroke-linecap="round" stroke-linejoin="round"/>
<path d="M1244.8 763.9C1245.6 766.0 1246.7 772.5 1249.7 776.8C1252.7 781.1 1261.0 785.7 1262.6 789.7C1264.2 793.7 1259.9 799.1 1259.4 801.0" fill="none" stroke="#ead687" stroke-width="3.7" stroke-linecap="round" stroke-linejoin="round"/>
<path d="M1252.9 776.8 L1265.8 775.2" fill="none" stroke="#ead687" stroke-width="3.7" stroke-linecap="round" stroke-linejoin="round"/>
<path d="M1360.0 604.5C1362.7 604.8 1370.7 605.1 1376.1 606.1C1381.5 607.1 1385.6 609.9 1392.3 610.2C1399.0 610.5 1409.8 608.4 1416.5 607.7C1423.2 607.0 1427.0 606.5 1432.6 606.1C1438.2 605.7 1447.3 605.4 1450.3 605.3" fill="none" stroke="#ead687" stroke-width="3.7" stroke-linecap="round" stroke-linejoin="round"/>
<path d="M1360.0 622.3C1362.7 623.6 1370.7 627.9 1376.1 630.3C1381.5 632.7 1385.6 635.2 1392.3 636.8C1399.0 638.4 1406.8 639.6 1416.5 640.0C1426.2 640.4 1440.9 640.0 1450.3 639.2C1459.7 638.4 1467.0 637.5 1472.9 635.2C1478.8 632.9 1481.8 628.7 1485.8 625.5C1489.8 622.3 1493.3 618.2 1497.1 615.8C1500.9 613.4 1506.5 611.8 1508.4 611.0" fill="none" stroke="#ead687" stroke-width="3.7" stroke-linecap="round" stroke-linejoin="round"/>
<path d="M1508.4 611.0C1510.6 611.5 1515.1 613.4 1521.3 614.2C1527.5 615.0 1538.8 614.7 1545.5 615.8C1552.2 616.9 1556.5 618.7 1561.6 620.6C1566.7 622.5 1572.3 625.5 1576.1 627.1C1579.9 628.7 1583.1 629.8 1584.5 630.3" fill="none" stroke="#ead687" stroke-width="3.7" stroke-linecap="round" stroke-linejoin="round"/>
<path d="M1447.9 606.1C1448.3 608.5 1448.8 616.0 1450.3 620.6C1451.8 625.2 1455.2 630.3 1456.8 633.5C1458.4 636.7 1459.5 638.9 1460.0 640.0" fill="none" stroke="#ead687" stroke-width="3.7" stroke-linecap="round" stroke-linejoin="round"/>
<path d="M1505.2 594.8C1505.5 596.4 1506.3 601.8 1506.8 604.5C1507.3 607.2 1508.1 609.9 1508.4 611.0" fill="none" stroke="#ead687" stroke-width="3.7" stroke-linecap="round" stroke-linejoin="round"/>
<path d="M1566.5 567.4C1566.8 570.9 1566.5 580.9 1568.1 588.4C1569.7 595.9 1573.4 605.6 1576.1 612.6C1578.8 619.6 1583.1 627.3 1584.5 630.3" fill="none" stroke="#ead687" stroke-width="3.7" stroke-linecap="round" stroke-linejoin="round"/>
<path d="M1584.5 783.2C1583.1 782.7 1579.6 781.3 1576.1 780.0C1572.5 778.7 1566.7 777.4 1563.2 775.2C1559.7 773.1 1556.0 769.5 1555.2 767.1C1554.4 764.7 1557.9 761.7 1558.4 760.6" fill="none" stroke="#ead687" stroke-width="3.7" stroke-linecap="round" stroke-linejoin="round"/>
<path d="M1553.5 770.3C1553.2 774.1 1553.0 786.4 1551.9 792.9C1550.8 799.4 1547.9 806.3 1547.1 809.0" fill="none" stroke="#ead687" stroke-width="3.7" stroke-linecap="round" stroke-linejoin="round"/>
<path d="M264.0 570.6C266.3 570.7 273.0 571.1 277.7 571.0C282.4 570.9 288.1 570.3 292.3 570.0C296.5 569.7 299.1 569.6 302.7 569.0C306.3 568.4 309.0 567.9 314.0 566.6C319.0 565.3 326.6 562.9 332.6 561.0C338.7 559.1 345.2 556.9 350.3 555.3C355.4 553.7 359.4 552.7 363.2 551.3C367.0 549.9 371.3 547.5 372.9 546.8" fill="none" stroke="#f7e088" stroke-width="2.8" stroke-linecap="round" stroke-linejoin="round"/>
<path d="M302.7 569.0C303.0 570.9 303.7 576.3 304.4 580.3C305.1 584.3 305.9 588.6 306.8 593.2C307.7 597.8 308.9 603.1 310.0 607.7C311.1 612.3 312.0 616.0 313.2 620.6C314.4 625.2 315.8 630.4 317.3 635.2C318.8 640.1 320.4 645.4 322.1 649.7C323.8 654.0 325.9 657.8 327.7 661.0C329.4 664.2 330.7 665.8 332.6 669.0C334.5 672.2 337.9 678.2 339.0 680.0" fill="none" stroke="#f7e088" stroke-width="2.8" stroke-linecap="round" stroke-linejoin="round"/>
<path d="M264.0 656.5C267.4 657.1 276.8 658.9 284.2 660.2C291.6 661.5 301.1 663.8 308.4 664.5C315.6 665.2 324.5 664.2 327.7 664.2" fill="none" stroke="#f7e088" stroke-width="2.8" stroke-linecap="round" stroke-linejoin="round"/>
<path d="M339.0 680.0C340.9 682.1 346.3 688.6 350.3 692.9C354.3 697.2 358.9 701.2 363.2 705.8C367.5 710.4 371.8 715.5 376.1 720.3C380.4 725.1 384.7 729.9 389.0 734.8C393.3 739.6 397.9 744.3 401.9 749.4C405.9 754.5 411.3 762.8 413.2 765.5" fill="none" stroke="#f7e088" stroke-width="2.8" stroke-linecap="round" stroke-linejoin="round"/>
<path d="M371.3 707.4C373.4 708.8 380.7 712.0 384.2 715.5C387.7 719.0 389.4 723.6 392.3 728.4C395.2 733.2 400.3 741.8 401.9 744.5" fill="none" stroke="#f7e088" stroke-width="2.8" stroke-linecap="round" stroke-linejoin="round"/>
<path d="M401.9 742.9C404.0 743.8 410.2 748.0 414.8 748.5C419.4 749.0 425.6 747.2 429.4 746.1C433.2 745.0 436.1 742.8 437.4 742.1" fill="none" stroke="#f7e088" stroke-width="2.8" stroke-linecap="round" stroke-linejoin="round"/>
<path d="M442.3 751.0C445.5 751.0 452.0 751.3 461.6 751.0C471.2 750.7 493.6 749.7 500.0 749.4" fill="none" stroke="#f7e088" stroke-width="2.8" stroke-linecap="round" stroke-linejoin="round"/>
<path d="M264.0 754.2C265.8 755.3 271.4 758.3 274.5 760.6C277.6 762.9 281.2 766.7 282.6 767.9" fill="none" stroke="#f7e088" stroke-width="2.8" stroke-linecap="round" stroke-linejoin="round"/>
<path d="M264.0 768.4C267.1 768.2 277.1 767.9 282.6 767.4C288.1 766.9 294.7 765.8 297.1 765.5" fill="none" stroke="#f7e088" stroke-width="2.8" stroke-linecap="round" stroke-linejoin="round"/>
<path d="M264.0 778.4C266.0 777.5 272.7 774.8 276.1 773.2C279.5 771.6 282.9 769.5 284.2 768.7" fill="none" stroke="#f7e088" stroke-width="2.8" stroke-linecap="round" stroke-linejoin="round"/>
<path d="M592.9 544.8C595.6 547.5 603.6 555.4 609.0 561.0C614.4 566.6 620.9 573.9 625.2 578.7C629.5 583.5 631.3 585.7 634.8 590.0C638.3 594.3 642.3 599.4 646.1 604.5C649.9 609.6 653.4 615.2 657.4 620.6C661.4 626.0 666.5 631.4 670.3 636.8C674.1 642.2 677.8 647.5 680.0 652.9C682.2 658.3 683.2 664.5 683.5 669.0C683.8 673.5 681.9 678.2 681.6 680.0" fill="none" stroke="#f7e088" stroke-width="2.8" stroke-linecap="round" stroke-linejoin="round"/>
<path d="M681.6 679.2C677.6 679.7 664.1 680.9 657.4 681.9C650.7 682.9 645.9 683.9 641.3 685.2C636.7 686.5 633.0 687.6 630.0 689.7C627.0 691.8 625.6 693.9 623.5 697.7C621.4 701.5 620.6 708.0 617.1 712.3C613.6 716.6 608.0 720.0 602.6 723.5C597.2 727.0 590.2 730.5 584.8 733.2C579.4 735.9 577.0 738.0 570.3 739.7C563.6 741.5 554.2 742.4 544.5 743.7C534.8 745.0 523.0 746.5 512.3 747.7C501.5 748.9 485.4 750.5 480.0 751.0" fill="none" stroke="#f7e088" stroke-width="2.8" stroke-linecap="round" stroke-linejoin="round"/>
<path d="M584.8 733.2C585.1 735.1 586.2 740.2 586.5 744.5C586.8 748.8 588.1 754.7 586.5 759.0C584.9 763.3 580.6 766.3 576.8 770.3C573.0 774.3 568.2 778.9 563.9 783.2C559.6 787.5 554.8 791.8 551.0 796.1C547.2 800.4 542.9 806.9 541.3 809.0" fill="none" stroke="#f7e088" stroke-width="2.8" stroke-linecap="round" stroke-linejoin="round"/>
<path d="M720.0 721.1C717.6 721.3 710.0 721.1 705.8 722.3C701.5 723.5 697.7 726.3 694.5 728.4C691.3 730.5 687.8 733.7 686.5 734.8" fill="none" stroke="#f7e088" stroke-width="2.8" stroke-linecap="round" stroke-linejoin="round"/>
<path d="M694.5 726.8C696.4 729.8 701.5 738.9 705.8 744.5C710.0 750.1 717.6 757.9 720.0 760.6" fill="none" stroke="#f7e088" stroke-width="2.8" stroke-linecap="round" stroke-linejoin="round"/>
<path d="M680.0 684.8C681.6 687.5 686.8 695.6 689.7 701.0C692.7 706.4 695.0 713.6 697.7 717.1C700.4 720.6 704.4 721.4 705.8 722.3" fill="none" stroke="#f7e088" stroke-width="2.8" stroke-linecap="round" stroke-linejoin="round"/>
<path d="M700.0 721.9C703.2 721.8 714.0 720.3 719.4 721.1C724.8 721.9 729.9 724.5 732.3 726.8C734.7 729.1 733.9 730.8 733.9 734.8C733.9 738.8 731.2 747.2 732.3 751.0C733.4 754.8 736.8 754.7 740.3 757.4C743.8 760.1 748.1 763.3 753.2 767.1C758.3 770.9 765.4 775.7 771.0 780.0C776.6 784.3 782.3 789.1 787.1 792.9C791.9 796.7 797.9 801.0 800.0 802.6" fill="none" stroke="#f7e088" stroke-width="2.8" stroke-linecap="round" stroke-linejoin="round"/>
<path d="M700.0 755.8C702.7 756.6 710.7 757.4 716.1 760.6C721.5 763.8 726.1 770.4 732.3 775.2C738.5 780.1 746.5 785.1 753.2 789.7C759.9 794.3 767.0 800.9 772.6 802.6C778.2 804.4 784.7 801.8 787.1 800.2C789.5 798.6 787.1 794.1 787.1 792.9" fill="none" stroke="#f7e088" stroke-width="2.8" stroke-linecap="round" stroke-linejoin="round"/>
<path d="M732.3 751.0 L719.4 760.6" fill="none" stroke="#f7e088" stroke-width="2.8" stroke-linecap="round" stroke-linejoin="round"/>
<path d="M709.7 721.9C710.0 723.8 707.5 731.1 711.3 733.2C715.1 735.4 728.8 734.5 732.3 734.8" fill="none" stroke="#f7e088" stroke-width="2.8" stroke-linecap="round" stroke-linejoin="round"/>
<path d="M940.0 780.0C937.6 780.8 929.5 782.6 925.8 784.8C922.1 786.9 920.4 788.9 917.7 792.9C915.0 796.9 911.0 806.3 909.7 809.0" fill="none" stroke="#f7e088" stroke-width="2.8" stroke-linecap="round" stroke-linejoin="round"/>
<path d="M940.0 783.2C938.7 785.9 934.1 795.1 932.3 799.4C930.5 803.7 929.5 807.4 929.0 809.0" fill="none" stroke="#f7e088" stroke-width="2.8" stroke-linecap="round" stroke-linejoin="round"/>
<path d="M1100.6 546.5C1101.9 549.5 1105.7 558.6 1108.7 564.2C1111.7 569.8 1115.2 574.9 1118.4 580.3C1121.6 585.7 1125.1 591.4 1128.1 596.5C1131.0 601.6 1134.5 607.0 1136.1 611.0C1137.7 615.0 1138.8 617.9 1137.7 620.6C1136.6 623.3 1134.8 625.8 1129.7 627.1C1124.6 628.5 1110.9 628.4 1107.1 628.7" fill="none" stroke="#f7e088" stroke-width="2.8" stroke-linecap="round" stroke-linejoin="round"/>
<path d="M1100.6 548.1C1101.4 553.5 1105.0 570.9 1105.5 580.3C1106.0 589.7 1104.4 598.3 1103.9 604.5C1103.4 610.7 1102.0 613.6 1102.3 617.4C1102.6 621.2 1106.0 622.5 1105.5 627.1C1105.0 631.7 1101.4 638.3 1099.0 644.8C1096.6 651.2 1093.4 659.9 1091.0 665.8C1088.6 671.7 1085.6 677.6 1084.5 680.0" fill="none" stroke="#f7e088" stroke-width="2.8" stroke-linecap="round" stroke-linejoin="round"/>
<path d="M1118.4 570.6C1121.6 568.5 1130.8 561.5 1137.7 557.7C1144.6 554.0 1156.3 549.7 1160.0 548.1" fill="none" stroke="#f7e088" stroke-width="2.8" stroke-linecap="round" stroke-linejoin="round"/>
<path d="M1118.4 570.6C1121.6 571.1 1130.8 573.1 1137.7 573.9C1144.6 574.7 1156.3 575.2 1160.0 575.5" fill="none" stroke="#f7e088" stroke-width="2.8" stroke-linecap="round" stroke-linejoin="round"/>
<path d="M1129.7 627.1C1132.4 626.6 1140.8 624.6 1145.8 623.9C1150.8 623.2 1157.6 623.2 1160.0 623.1" fill="none" stroke="#f7e088" stroke-width="2.8" stroke-linecap="round" stroke-linejoin="round"/>
<path d="M1084.5 680.0C1083.7 682.7 1081.6 690.2 1079.7 696.1C1077.8 702.0 1076.7 709.3 1073.2 715.5C1069.7 721.7 1063.0 727.8 1058.7 733.2C1054.4 738.6 1050.6 744.3 1047.4 747.7C1044.2 751.1 1040.7 752.5 1039.4 753.4" fill="none" stroke="#f7e088" stroke-width="2.8" stroke-linecap="round" stroke-linejoin="round"/>
<path d="M1039.4 753.4C1035.6 753.7 1022.7 754.7 1016.8 755.0C1010.9 755.3 1011.4 755.7 1003.9 755.0C996.4 754.3 979.1 752.2 971.6 751.0C964.1 749.8 960.9 748.2 958.7 747.7" fill="none" stroke="#f7e088" stroke-width="2.8" stroke-linecap="round" stroke-linejoin="round"/>
<path d="M1039.4 753.4C1041.0 755.1 1045.8 760.0 1049.0 763.9C1052.2 767.8 1055.5 772.5 1058.7 776.8C1061.9 781.1 1064.6 785.4 1068.4 789.7C1072.2 794.0 1077.8 799.4 1081.3 802.6C1084.8 805.8 1088.1 807.9 1089.4 809.0" fill="none" stroke="#f7e088" stroke-width="2.8" stroke-linecap="round" stroke-linejoin="round"/>
<path d="M1084.5 684.8C1086.7 686.9 1092.6 693.7 1097.4 697.7C1102.2 701.7 1107.6 705.2 1113.5 709.0C1119.4 712.8 1125.2 718.1 1132.9 720.3C1140.7 722.4 1155.5 721.6 1160.0 721.9" fill="none" stroke="#f7e088" stroke-width="2.8" stroke-linecap="round" stroke-linejoin="round"/>
<path d="M1084.5 684.8C1085.6 685.6 1088.3 687.0 1091.0 689.7C1093.7 692.4 1099.0 699.1 1100.6 701.0" fill="none" stroke="#f7e088" stroke-width="2.8" stroke-linecap="round" stroke-linejoin="round"/>
<path d="M957.9 746.1C957.8 749.1 959.1 758.2 957.1 763.9C955.1 769.5 949.3 774.6 945.8 780.0C942.3 785.4 939.3 791.3 936.1 796.1C932.9 800.9 928.1 806.9 926.5 809.0" fill="none" stroke="#f7e088" stroke-width="2.8" stroke-linecap="round" stroke-linejoin="round"/>
<path d="M920.0 786.5C923.2 785.7 935.1 782.7 939.4 781.6C943.7 780.5 944.7 780.3 945.8 780.0" fill="none" stroke="#f7e088" stroke-width="2.8" stroke-linecap="round" stroke-linejoin="round"/>
<path d="M1140.0 574.7C1145.4 574.8 1161.5 575.0 1172.3 575.5C1183.0 576.0 1194.8 576.6 1204.5 577.9C1214.2 579.2 1222.2 581.8 1230.3 583.5C1238.4 585.2 1244.8 587.0 1252.9 588.4C1261.0 589.8 1270.6 590.7 1278.7 591.6C1286.8 592.5 1292.2 593.2 1301.3 594.0C1310.4 594.8 1325.4 595.8 1333.5 596.5C1341.6 597.2 1344.3 597.0 1349.7 598.1C1355.1 599.2 1360.8 601.6 1365.8 602.9C1370.8 604.2 1377.6 605.6 1380.0 606.1" fill="none" stroke="#f7e088" stroke-width="2.8" stroke-linecap="round" stroke-linejoin="round"/>
<path d="M1140.0 622.3C1145.4 622.2 1163.4 622.0 1172.3 621.5C1181.2 621.0 1187.3 619.3 1193.2 619.0C1199.1 618.7 1197.8 620.3 1207.7 619.8C1217.7 619.3 1242.1 617.0 1252.9 615.8C1263.7 614.6 1266.9 613.7 1272.3 612.6C1277.7 611.5 1281.5 610.8 1285.2 609.4C1289.0 608.0 1291.0 605.9 1294.8 604.5C1298.5 603.1 1303.9 601.3 1307.7 601.3C1311.5 601.3 1314.4 602.1 1317.4 604.5C1320.4 606.9 1323.3 612.0 1325.5 615.8C1327.7 619.6 1329.5 625.2 1330.3 627.1" fill="none" stroke="#f7e088" stroke-width="2.8" stroke-linecap="round" stroke-linejoin="round"/>
<path d="M1140.0 554.5C1141.3 553.7 1145.4 550.9 1148.1 549.7C1150.8 548.5 1154.8 547.7 1156.1 547.3" fill="none" stroke="#f7e088" stroke-width="2.8" stroke-linecap="round" stroke-linejoin="round"/>
<path d="M1140.0 721.1C1142.7 721.0 1149.4 721.4 1156.1 720.3C1162.8 719.2 1172.8 716.2 1180.3 714.7C1187.8 713.2 1197.3 711.9 1201.3 711.5C1205.3 711.1 1202.3 709.8 1204.5 712.3C1206.7 714.8 1210.4 721.7 1214.2 726.8C1218.0 731.9 1222.8 738.1 1227.1 742.9C1231.4 747.7 1236.2 751.8 1240.0 755.8C1243.8 759.8 1246.5 763.6 1249.7 767.1C1252.9 770.6 1256.2 773.6 1259.4 776.8C1262.6 780.0 1266.0 783.8 1269.0 786.5C1272.0 789.2 1275.8 791.8 1277.1 792.9" fill="none" stroke="#f7e088" stroke-width="2.8" stroke-linecap="round" stroke-linejoin="round"/>
<path d="M1244.8 763.9C1245.6 766.0 1246.7 772.5 1249.7 776.8C1252.7 781.1 1261.0 785.7 1262.6 789.7C1264.2 793.7 1259.9 799.1 1259.4 801.0" fill="none" stroke="#f7e088" stroke-width="2.8" stroke-linecap="round" stroke-linejoin="round"/>
<path d="M1252.9 776.8 L1265.8 775.2" fill="none" stroke="#f7e088" stroke-width="2.8" stroke-linecap="round" stroke-linejoin="round"/>
<path d="M1360.0 604.5C1362.7 604.8 1370.7 605.1 1376.1 606.1C1381.5 607.1 1385.6 609.9 1392.3 610.2C1399.0 610.5 1409.8 608.4 1416.5 607.7C1423.2 607.0 1427.0 606.5 1432.6 606.1C1438.2 605.7 1447.3 605.4 1450.3 605.3" fill="none" stroke="#f7e088" stroke-width="2.8" stroke-linecap="round" stroke-linejoin="round"/>
<path d="M1360.0 622.3C1362.7 623.6 1370.7 627.9 1376.1 630.3C1381.5 632.7 1385.6 635.2 1392.3 636.8C1399.0 638.4 1406.8 639.6 1416.5 640.0C1426.2 640.4 1440.9 640.0 1450.3 639.2C1459.7 638.4 1467.0 637.5 1472.9 635.2C1478.8 632.9 1481.8 628.7 1485.8 625.5C1489.8 622.3 1493.3 618.2 1497.1 615.8C1500.9 613.4 1506.5 611.8 1508.4 611.0" fill="none" stroke="#f7e088" stroke-width="2.8" stroke-linecap="round" stroke-linejoin="round"/>
<path d="M1508.4 611.0C1510.6 611.5 1515.1 613.4 1521.3 614.2C1527.5 615.0 1538.8 614.7 1545.5 615.8C1552.2 616.9 1556.5 618.7 1561.6 620.6C1566.7 622.5 1572.3 625.5 1576.1 627.1C1579.9 628.7 1583.1 629.8 1584.5 630.3" fill="none" stroke="#f7e088" stroke-width="2.8" stroke-linecap="round" stroke-linejoin="round"/>
<path d="M1447.9 606.1C1448.3 608.5 1448.8 616.0 1450.3 620.6C1451.8 625.2 1455.2 630.3 1456.8 633.5C1458.4 636.7 1459.5 638.9 1460.0 640.0" fill="none" stroke="#f7e088" stroke-width="2.8" stroke-linecap="round" stroke-linejoin="round"/>
<path d="M1505.2 594.8C1505.5 596.4 1506.3 601.8 1506.8 604.5C1507.3 607.2 1508.1 609.9 1508.4 611.0" fill="none" stroke="#f7e088" stroke-width="2.8" stroke-linecap="round" stroke-linejoin="round"/>
<path d="M1566.5 567.4C1566.8 570.9 1566.5 580.9 1568.1 588.4C1569.7 595.9 1573.4 605.6 1576.1 612.6C1578.8 619.6 1583.1 627.3 1584.5 630.3" fill="none" stroke="#f7e088" stroke-width="2.8" stroke-linecap="round" stroke-linejoin="round"/>
<path d="M1584.5 783.2C1583.1 782.7 1579.6 781.3 1576.1 780.0C1572.5 778.7 1566.7 777.4 1563.2 775.2C1559.7 773.1 1556.0 769.5 1555.2 767.1C1554.4 764.7 1557.9 761.7 1558.4 760.6" fill="none" stroke="#f7e088" stroke-width="2.8" stroke-linecap="round" stroke-linejoin="round"/>
<path d="M1553.5 770.3C1553.2 774.1 1553.0 786.4 1551.9 792.9C1550.8 799.4 1547.9 806.3 1547.1 809.0" fill="none" stroke="#f7e088" stroke-width="2.8" stroke-linecap="round" stroke-linejoin="round"/>
<circle cx="302.7" cy="569.0" r="3.2" fill="#f8e184" stroke="#ead582" stroke-width="0.6"/><circle cx="302.7" cy="569.0" r="1.1" fill="#f4edc8"/>
<circle cx="1039.4" cy="753.4" r="3.6" fill="#f8e184" stroke="#ead582" stroke-width="0.6"/><circle cx="1039.4" cy="753.4" r="1.3" fill="#f4edc8"/>
<circle cx="957.9" cy="746.1" r="3.2" fill="#f8e184" stroke="#ead582" stroke-width="0.6"/><circle cx="957.9" cy="746.1" r="1.1" fill="#f4edc8"/>
<circle cx="1358.5" cy="654.5" r="3.4" fill="#f8e184" stroke="#ead582" stroke-width="0.6"/><circle cx="1358.5" cy="654.5" r="1.2" fill="#f4edc8"/>
<circle cx="327.7" cy="664.2" r="2.6" fill="#f8e184" stroke="#ead582" stroke-width="0.6"/><circle cx="327.7" cy="664.2" r="0.9" fill="#f4edc8"/>
<path d="M264.0 781.9C268.7 781.7 284.1 781.0 292.3 780.8C300.5 780.6 307.3 780.3 313.2 780.8C319.1 781.3 321.0 783.0 327.7 784.0C334.4 785.0 344.9 786.7 353.5 786.8C362.1 786.9 371.9 785.9 379.4 784.5C386.9 783.1 393.3 780.5 398.7 778.4C404.1 776.3 407.8 774.3 411.6 771.9C415.4 769.5 416.2 767.1 421.3 763.9C426.4 760.7 438.8 754.7 442.3 752.9" fill="none" stroke="#cdaae2" stroke-width="4.8" stroke-linecap="round" stroke-linejoin="round"/>
<path d="M442.3 752.9C443.4 754.7 446.0 759.9 448.7 763.9C451.4 767.9 455.2 772.5 458.4 776.8C461.6 781.1 465.2 784.3 468.1 789.7C471.1 795.1 474.8 805.8 476.1 809.0" fill="none" stroke="#cdaae2" stroke-width="4.8" stroke-linecap="round" stroke-linejoin="round"/>
<path d="M418.1 768.7C420.8 771.1 428.8 778.1 434.2 783.2C439.6 788.3 446.0 795.1 450.3 799.4C454.6 803.7 458.4 807.4 460.0 809.0" fill="none" stroke="#cdaae2" stroke-width="4.8" stroke-linecap="round" stroke-linejoin="round"/>
<path d="M1451.9 546.5C1452.5 549.5 1454.1 558.3 1455.2 564.2C1456.3 570.1 1458.1 576.8 1458.4 581.9C1458.7 587.0 1456.5 591.0 1456.8 594.8C1457.1 598.6 1458.4 600.7 1460.0 604.5C1461.6 608.3 1464.3 613.1 1466.5 617.4C1468.7 621.7 1470.2 624.9 1472.9 630.3C1475.6 635.7 1478.6 643.8 1482.6 649.7C1486.6 655.6 1492.0 660.8 1497.1 665.8C1502.2 670.8 1510.5 677.6 1513.2 680.0" fill="none" stroke="#cdaae2" stroke-width="4.8" stroke-linecap="round" stroke-linejoin="round"/>
<path d="M1460.0 602.9C1464.3 602.1 1478.3 600.0 1485.8 598.1C1493.3 596.2 1500.4 594.3 1505.2 591.6C1510.0 588.9 1510.8 584.9 1514.8 581.9C1518.8 578.9 1523.0 576.3 1529.4 573.9C1535.9 571.5 1546.8 569.3 1553.5 567.4C1560.2 565.5 1564.5 564.1 1569.7 562.6C1574.9 561.1 1582.0 559.2 1584.5 558.5" fill="none" stroke="#cdaae2" stroke-width="4.8" stroke-linecap="round" stroke-linejoin="round"/>
<path d="M1493.9 678.4C1495.8 680.3 1502.2 685.1 1505.2 689.7C1508.2 694.3 1510.0 699.3 1511.6 705.8C1513.2 712.2 1512.6 721.9 1514.8 728.4C1517.0 734.9 1520.7 739.7 1524.5 744.5C1528.3 749.3 1532.6 752.6 1537.4 757.4C1542.2 762.2 1548.4 767.9 1553.5 773.5C1558.6 779.1 1564.6 787.5 1568.1 791.3C1571.6 795.1 1573.4 795.3 1574.5 796.1" fill="none" stroke="#cdaae2" stroke-width="4.8" stroke-linecap="round" stroke-linejoin="round"/>
<path d="M1514.8 678.4C1515.3 680.8 1518.4 688.1 1518.1 692.9C1517.8 697.7 1514.0 705.0 1513.2 707.4" fill="none" stroke="#cdaae2" stroke-width="4.8" stroke-linecap="round" stroke-linejoin="round"/>
<path d="M264.0 781.9C268.7 781.7 284.1 781.0 292.3 780.8C300.5 780.6 307.3 780.3 313.2 780.8C319.1 781.3 321.0 783.0 327.7 784.0C334.4 785.0 344.9 786.7 353.5 786.8C362.1 786.9 371.9 785.9 379.4 784.5C386.9 783.1 393.3 780.5 398.7 778.4C404.1 776.3 407.8 774.3 411.6 771.9C415.4 769.5 416.2 767.1 421.3 763.9C426.4 760.7 438.8 754.7 442.3 752.9" fill="none" stroke="#e1bff4" stroke-width="3.5" stroke-linecap="round" stroke-linejoin="round"/>
<path d="M442.3 752.9C443.4 754.7 446.0 759.9 448.7 763.9C451.4 767.9 455.2 772.5 458.4 776.8C461.6 781.1 465.2 784.3 468.1 789.7C471.1 795.1 474.8 805.8 476.1 809.0" fill="none" stroke="#e1bff4" stroke-width="3.5" stroke-linecap="round" stroke-linejoin="round"/>
<path d="M418.1 768.7C420.8 771.1 428.8 778.1 434.2 783.2C439.6 788.3 446.0 795.1 450.3 799.4C454.6 803.7 458.4 807.4 460.0 809.0" fill="none" stroke="#e1bff4" stroke-width="3.5" stroke-linecap="round" stroke-linejoin="round"/>
<path d="M1451.9 546.5C1452.5 549.5 1454.1 558.3 1455.2 564.2C1456.3 570.1 1458.1 576.8 1458.4 581.9C1458.7 587.0 1456.5 591.0 1456.8 594.8C1457.1 598.6 1458.4 600.7 1460.0 604.5C1461.6 608.3 1464.3 613.1 1466.5 617.4C1468.7 621.7 1470.2 624.9 1472.9 630.3C1475.6 635.7 1478.6 643.8 1482.6 649.7C1486.6 655.6 1492.0 660.8 1497.1 665.8C1502.2 670.8 1510.5 677.6 1513.2 680.0" fill="none" stroke="#e1bff4" stroke-width="3.5" stroke-linecap="round" stroke-linejoin="round"/>
<path d="M1460.0 602.9C1464.3 602.1 1478.3 600.0 1485.8 598.1C1493.3 596.2 1500.4 594.3 1505.2 591.6C1510.0 588.9 1510.8 584.9 1514.8 581.9C1518.8 578.9 1523.0 576.3 1529.4 573.9C1535.9 571.5 1546.8 569.3 1553.5 567.4C1560.2 565.5 1564.5 564.1 1569.7 562.6C1574.9 561.1 1582.0 559.2 1584.5 558.5" fill="none" stroke="#e1bff4" stroke-width="3.5" stroke-linecap="round" stroke-linejoin="round"/>
<path d="M1493.9 678.4C1495.8 680.3 1502.2 685.1 1505.2 689.7C1508.2 694.3 1510.0 699.3 1511.6 705.8C1513.2 712.2 1512.6 721.9 1514.8 728.4C1517.0 734.9 1520.7 739.7 1524.5 744.5C1528.3 749.3 1532.6 752.6 1537.4 757.4C1542.2 762.2 1548.4 767.9 1553.5 773.5C1558.6 779.1 1564.6 787.5 1568.1 791.3C1571.6 795.1 1573.4 795.3 1574.5 796.1" fill="none" stroke="#e1bff4" stroke-width="3.5" stroke-linecap="round" stroke-linejoin="round"/>
<path d="M1514.8 678.4C1515.3 680.8 1518.4 688.1 1518.1 692.9C1517.8 697.7 1514.0 705.0 1513.2 707.4" fill="none" stroke="#e1bff4" stroke-width="3.5" stroke-linecap="round" stroke-linejoin="round"/>
</g>
<g filter="url(#soft2)">
<text x="334.5" y="564.0" font-size="10.5" text-anchor="middle" fill="#5a4a1a" transform="rotate(-20 334.5 560.2)" stroke="#f4f2ea" stroke-width="1.6" paint-order="stroke" stroke-linejoin="round" stroke-opacity="0.7">Westway</text>
<text x="382.6" y="601.1" font-size="7.5" text-anchor="middle" fill="#786e64" stroke="#f4f2ea" stroke-width="1.6" paint-order="stroke" stroke-linejoin="round" stroke-opacity="0.7">NOTTING HILL</text>
<text x="298.4" y="640.0" font-size="9" text-anchor="middle" fill="#786e64" stroke="#f4f2ea" stroke-width="1.6" paint-order="stroke" stroke-linejoin="round" stroke-opacity="0.7">Westfield</text>
<text x="298.4" y="650.9" font-size="9" text-anchor="middle" fill="#786e64" stroke="#f4f2ea" stroke-width="1.6" paint-order="stroke" stroke-linejoin="round" stroke-opacity="0.7">London</text>
<text x="393.9" y="688.0" font-size="9" text-anchor="middle" fill="#4f6b5a" font-style="italic" stroke="#f4f2ea" stroke-width="1.6" paint-order="stroke" stroke-linejoin="round" stroke-opacity="0.7">Park</text>
<text x="393.9" y="679.0" font-size="9" text-anchor="middle" fill="#4f6b5a" font-style="italic" stroke="#f4f2ea" stroke-width="1.6" paint-order="stroke" stroke-linejoin="round" stroke-opacity="0.7">Holland</text>
<text x="360.0" y="742.6" font-size="9" text-anchor="middle" fill="#786e64" stroke="#f4f2ea" stroke-width="1.6" paint-order="stroke" stroke-linejoin="round" stroke-opacity="0.7">Olympia</text>
<text x="426.5" y="802.2" font-size="9" text-anchor="middle" fill="#786e64" stroke="#f4f2ea" stroke-width="1.6" paint-order="stroke" stroke-linejoin="round" stroke-opacity="0.7">Earls</text>
<text x="426.5" y="813.2" font-size="9" text-anchor="middle" fill="#786e64" stroke="#f4f2ea" stroke-width="1.6" paint-order="stroke" stroke-linejoin="round" stroke-opacity="0.7">Court</text>
<text x="355.2" y="813.2" font-size="9" text-anchor="middle" fill="#786e64" stroke="#f4f2ea" stroke-width="1.6" paint-order="stroke" stroke-linejoin="round" stroke-opacity="0.7">Queens</text>
<text x="522.7" y="577.5" font-size="8.5" text-anchor="middle" fill="#786e64" stroke="#f4f2ea" stroke-width="1.6" paint-order="stroke" stroke-linejoin="round" stroke-opacity="0.7">W2</text>
<text x="512.3" y="657.7" font-size="9" text-anchor="middle" fill="#4f6b5a" font-style="italic" stroke="#f4f2ea" stroke-width="1.6" paint-order="stroke" stroke-linejoin="round" stroke-opacity="0.7">Kensington</text>
<text x="512.3" y="667.7" font-size="9" text-anchor="middle" fill="#4f6b5a" font-style="italic" stroke="#f4f2ea" stroke-width="1.6" paint-order="stroke" stroke-linejoin="round" stroke-opacity="0.7">Gardens</text>
<text x="581.3" y="668.7" font-size="9" text-anchor="middle" fill="#4f6b5a" font-style="italic" stroke="#f4f2ea" stroke-width="1.6" paint-order="stroke" stroke-linejoin="round" stroke-opacity="0.7">Hyde Park</text>
<text x="612.3" y="726.2" font-size="7.5" text-anchor="middle" fill="#786e64" stroke="#f4f2ea" stroke-width="1.6" paint-order="stroke" stroke-linejoin="round" stroke-opacity="0.7">WEST BROMPTON</text>
<text x="531.3" y="751.4" font-size="8" text-anchor="middle" fill="#5f574c" transform="rotate(82 531.3 748.5)" stroke="#f4f2ea" stroke-width="1.6" paint-order="stroke" stroke-linejoin="round" stroke-opacity="0.7">Queen's Gate</text>
<text x="911.3" y="672.9" font-size="14.5" text-anchor="middle" fill="#222222" stroke="#f4f2ea" stroke-width="1.6" paint-order="stroke" stroke-linejoin="round" stroke-opacity="0.7">London</text>
<text x="777.4" y="690.0" font-size="9" text-anchor="middle" fill="#4f6b5a" font-style="italic" stroke="#f4f2ea" stroke-width="1.6" paint-order="stroke" stroke-linejoin="round" stroke-opacity="0.7">Park</text>
<text x="777.4" y="680.3" font-size="9" text-anchor="middle" fill="#4f6b5a" font-style="italic" stroke="#f4f2ea" stroke-width="1.6" paint-order="stroke" stroke-linejoin="round" stroke-opacity="0.7">St James's</text>
<text x="721.0" y="678.4" font-size="9" text-anchor="middle" fill="#4f6b5a" font-style="italic" stroke="#f4f2ea" stroke-width="1.6" paint-order="stroke" stroke-linejoin="round" stroke-opacity="0.7">Green Park</text>
<text x="1061.9" y="726.2" font-size="7.5" text-anchor="middle" fill="#786e64" stroke="#f4f2ea" stroke-width="1.6" paint-order="stroke" stroke-linejoin="round" stroke-opacity="0.7">BERMONDSEY</text>
<text x="1030.2" y="772.7" font-size="7.5" text-anchor="middle" fill="#786e64" stroke="#f4f2ea" stroke-width="1.6" paint-order="stroke" stroke-linejoin="round" stroke-opacity="0.7">NEWINGTON</text>
<text x="1149.8" y="800.6" font-size="8" text-anchor="middle" fill="#5f574c" transform="rotate(-90 1149.8 797.7)" stroke="#f4f2ea" stroke-width="1.6" paint-order="stroke" stroke-linejoin="round" stroke-opacity="0.7">St James's Road</text>
<text x="1194.5" y="576.9" font-size="7.5" text-anchor="middle" fill="#786e64" stroke="#f4f2ea" stroke-width="1.6" paint-order="stroke" stroke-linejoin="round" stroke-opacity="0.7">EAST END</text>
<text x="1322.7" y="562.1" font-size="7.5" text-anchor="middle" fill="#786e64" stroke="#f4f2ea" stroke-width="1.6" paint-order="stroke" stroke-linejoin="round" stroke-opacity="0.7">STEPNEY</text>
<text x="1255.3" y="671.9" font-size="8" text-anchor="middle" fill="#5f574c" transform="rotate(-35 1255.3 669.0)" stroke="#f4f2ea" stroke-width="1.6" paint-order="stroke" stroke-linejoin="round" stroke-opacity="0.7">Salter Road</text>
<text x="1365.0" y="724.8" font-size="8" text-anchor="middle" fill="#5f574c" transform="rotate(80 1365.0 721.9)" stroke="#f4f2ea" stroke-width="1.6" paint-order="stroke" stroke-linejoin="round" stroke-opacity="0.7">Westferry Road</text>
<text x="1316.6" y="792.6" font-size="8" text-anchor="middle" fill="#5f574c" transform="rotate(85 1316.6 789.7)" stroke="#f4f2ea" stroke-width="1.6" paint-order="stroke" stroke-linejoin="round" stroke-opacity="0.7">Grove Street</text>
<text x="1386.6" y="698.2" font-size="8" text-anchor="middle" fill="#5f574c" transform="rotate(20 1386.6 695.3)" stroke="#f4f2ea" stroke-width="1.6" paint-order="stroke" stroke-linejoin="round" stroke-opacity="0.7">Marsh Wall</text>
<text x="1463.2" y="773.2" font-size="8" text-anchor="middle" fill="#5f574c" transform="rotate(72 1463.2 770.3)" stroke="#f4f2ea" stroke-width="1.6" paint-order="stroke" stroke-linejoin="round" stroke-opacity="0.7">Manchester Road</text>
<g><circle cx="362.4" cy="552.6" r="4.2" fill="#f9d3d6" opacity="0.7"/><circle cx="362.4" cy="552.6" r="2.500" fill="#f7dfe2" stroke="#cc3350" stroke-width="1.15"/><rect x="358.6" y="551.9" width="7.600" height="1.500" fill="#4a2f6e"/></g>
<g><circle cx="320.2" cy="584.0" r="4.2" fill="#f9d3d6" opacity="0.7"/><circle cx="320.2" cy="584.0" r="2.500" fill="#f7dfe2" stroke="#cc3350" stroke-width="1.15"/><rect x="316.4" y="583.2" width="7.600" height="1.500" fill="#4a2f6e"/></g>
<g><circle cx="281.0" cy="594.5" r="4.2" fill="#f9d3d6" opacity="0.7"/><circle cx="281.0" cy="594.5" r="2.500" fill="#f7dfe2" stroke="#cc3350" stroke-width="1.15"/><rect x="277.2" y="593.8" width="7.600" height="1.500" fill="#4a2f6e"/></g>
<g><circle cx="283.9" cy="617.9" r="4.2" fill="#f9d3d6" opacity="0.7"/><circle cx="283.9" cy="617.9" r="2.500" fill="#f7dfe2" stroke="#cc3350" stroke-width="1.15"/><rect x="280.1" y="617.1" width="7.600" height="1.500" fill="#4a2f6e"/></g>
<g><circle cx="484.5" cy="595.6" r="4.2" fill="#f9d3d6" opacity="0.7"/><circle cx="484.5" cy="595.6" r="2.500" fill="#f7dfe2" stroke="#cc3350" stroke-width="1.15"/><rect x="480.7" y="594.9" width="7.600" height="1.500" fill="#4a2f6e"/></g>
<g><circle cx="488.2" cy="613.4" r="4.2" fill="#f9d3d6" opacity="0.7"/><circle cx="488.2" cy="613.4" r="2.500" fill="#f7dfe2" stroke="#cc3350" stroke-width="1.15"/><rect x="484.4" y="612.6" width="7.600" height="1.500" fill="#4a2f6e"/></g>
<g><circle cx="435.8" cy="624.2" r="4.2" fill="#f9d3d6" opacity="0.7"/><circle cx="435.8" cy="624.2" r="2.500" fill="#f7dfe2" stroke="#cc3350" stroke-width="1.15"/><rect x="432.0" y="623.5" width="7.600" height="1.500" fill="#4a2f6e"/></g>
<g><circle cx="386.6" cy="641.3" r="4.2" fill="#f9d3d6" opacity="0.7"/><circle cx="386.6" cy="641.3" r="2.500" fill="#f7dfe2" stroke="#cc3350" stroke-width="1.15"/><rect x="382.8" y="640.5" width="7.600" height="1.500" fill="#4a2f6e"/></g>
<g><circle cx="272.9" cy="655.8" r="4.2" fill="#f9d3d6" opacity="0.7"/><circle cx="272.9" cy="655.8" r="2.500" fill="#f7dfe2" stroke="#cc3350" stroke-width="1.15"/><rect x="269.1" y="655.0" width="7.600" height="1.500" fill="#4a2f6e"/></g>
<g><circle cx="318.4" cy="664.2" r="4.2" fill="#f9d3d6" opacity="0.7"/><circle cx="318.4" cy="664.2" r="2.500" fill="#f7dfe2" stroke="#cc3350" stroke-width="1.15"/><rect x="314.6" y="663.5" width="7.600" height="1.500" fill="#4a2f6e"/></g>
<g><rect x="314.4" y="654.8" width="10" height="6.800" rx="1" fill="#fbd5d6" opacity="0.8"/><rect x="315.4" y="655.7" width="8" height="5" rx="0.600" fill="#e5454f"/><path d="M316.8 657.4H320.6L319.6 656.4M322.0 659.0H318.2L319.2 660.0" fill="none" stroke="#fff" stroke-width="0.8"/></g>
<g><circle cx="272.1" cy="683.2" r="4.2" fill="#f9d3d6" opacity="0.7"/><circle cx="272.1" cy="683.2" r="2.500" fill="#f7dfe2" stroke="#cc3350" stroke-width="1.15"/><rect x="268.3" y="682.5" width="7.600" height="1.500" fill="#4a2f6e"/></g>
<g><circle cx="363.2" cy="717.9" r="4.2" fill="#f9d3d6" opacity="0.7"/><circle cx="363.2" cy="717.9" r="2.500" fill="#f7dfe2" stroke="#cc3350" stroke-width="1.15"/><rect x="359.4" y="717.1" width="7.600" height="1.500" fill="#4a2f6e"/></g>
<g><circle cx="454.7" cy="695.3" r="4.2" fill="#f9d3d6" opacity="0.7"/><circle cx="454.7" cy="695.3" r="2.500" fill="#f7dfe2" stroke="#cc3350" stroke-width="1.15"/><rect x="450.9" y="694.5" width="7.600" height="1.500" fill="#4a2f6e"/></g>
<g><circle cx="283.9" cy="765.2" r="4.2" fill="#f9d3d6" opacity="0.7"/><circle cx="283.9" cy="765.2" r="2.500" fill="#f7dfe2" stroke="#cc3350" stroke-width="1.15"/><rect x="280.1" y="764.5" width="7.600" height="1.500" fill="#4a2f6e"/></g>
<g><circle cx="344.7" cy="789.7" r="4.2" fill="#f9d3d6" opacity="0.7"/><circle cx="344.7" cy="789.7" r="2.500" fill="#f7dfe2" stroke="#cc3350" stroke-width="1.15"/><rect x="340.9" y="789.0" width="7.600" height="1.500" fill="#4a2f6e"/></g>
<g><circle cx="380.2" cy="784.8" r="4.2" fill="#f9d3d6" opacity="0.7"/><circle cx="380.2" cy="784.8" r="2.500" fill="#f7dfe2" stroke="#cc3350" stroke-width="1.15"/><rect x="376.4" y="784.0" width="7.600" height="1.500" fill="#4a2f6e"/></g>
<g><circle cx="454.7" cy="771.9" r="4.2" fill="#f9d3d6" opacity="0.7"/><circle cx="454.7" cy="771.9" r="2.500" fill="#f7dfe2" stroke="#cc3350" stroke-width="1.15"/><rect x="450.9" y="771.1" width="7.600" height="1.500" fill="#4a2f6e"/></g>
<g><circle cx="484.5" cy="595.6" r="4.2" fill="#f9d3d6" opacity="0.7"/><circle cx="484.5" cy="595.6" r="2.500" fill="#f7dfe2" stroke="#cc3350" stroke-width="1.15"/><rect x="480.7" y="594.9" width="7.600" height="1.500" fill="#4a2f6e"/></g>
<g><circle cx="488.4" cy="613.4" r="4.2" fill="#f9d3d6" opacity="0.7"/><circle cx="488.4" cy="613.4" r="2.500" fill="#f7dfe2" stroke="#cc3350" stroke-width="1.15"/><rect x="484.6" y="612.6" width="7.600" height="1.500" fill="#4a2f6e"/></g>
<g><circle cx="643.2" cy="586.3" r="4.2" fill="#f9d3d6" opacity="0.7"/><circle cx="643.2" cy="586.3" r="2.500" fill="#f7dfe2" stroke="#cc3350" stroke-width="1.15"/><rect x="639.4" y="585.5" width="7.600" height="1.500" fill="#4a2f6e"/></g>
<g><circle cx="692.6" cy="578.7" r="4.2" fill="#f9d3d6" opacity="0.7"/><circle cx="692.6" cy="578.7" r="2.500" fill="#f7dfe2" stroke="#cc3350" stroke-width="1.15"/><rect x="688.8" y="578.0" width="7.600" height="1.500" fill="#4a2f6e"/></g>
<g><circle cx="675.2" cy="677.1" r="4.2" fill="#f9d3d6" opacity="0.7"/><circle cx="675.2" cy="677.1" r="2.500" fill="#f7dfe2" stroke="#cc3350" stroke-width="1.15"/><rect x="671.4" y="676.4" width="7.600" height="1.500" fill="#4a2f6e"/></g>
<g><rect x="548.4" y="562.4" width="10" height="6.800" rx="1" fill="#fbd5d6" opacity="0.8"/><rect x="549.4" y="563.3" width="8" height="5" rx="0.600" fill="#e5454f"/><path d="M550.8 565.0H554.6L553.6 564.0M556.0 566.6H552.2L553.2 567.6" fill="none" stroke="#fff" stroke-width="0.8"/></g>
<g><circle cx="631.9" cy="687.6" r="4.2" fill="#f9d3d6" opacity="0.7"/><circle cx="631.9" cy="687.6" r="2.500" fill="#f7dfe2" stroke="#cc3350" stroke-width="1.15"/><rect x="628.1" y="686.9" width="7.600" height="1.500" fill="#4a2f6e"/></g>
<g><circle cx="511.5" cy="751.3" r="4.2" fill="#f9d3d6" opacity="0.7"/><circle cx="511.5" cy="751.3" r="2.500" fill="#f7dfe2" stroke="#cc3350" stroke-width="1.15"/><rect x="507.7" y="750.5" width="7.600" height="1.500" fill="#4a2f6e"/></g>
<g><circle cx="557.4" cy="756.6" r="4.2" fill="#f9d3d6" opacity="0.7"/><circle cx="557.4" cy="756.6" r="2.500" fill="#f7dfe2" stroke="#cc3350" stroke-width="1.15"/><rect x="553.6" y="755.9" width="7.600" height="1.500" fill="#4a2f6e"/></g>
<g><circle cx="652.6" cy="770.8" r="4.2" fill="#f9d3d6" opacity="0.7"/><circle cx="652.6" cy="770.8" r="2.500" fill="#f7dfe2" stroke="#cc3350" stroke-width="1.15"/><rect x="648.8" y="770.0" width="7.600" height="1.500" fill="#4a2f6e"/></g>
<g><circle cx="716.3" cy="747.4" r="4.2" fill="#f9d3d6" opacity="0.7"/><circle cx="716.3" cy="747.4" r="2.500" fill="#f7dfe2" stroke="#cc3350" stroke-width="1.15"/><rect x="712.5" y="746.6" width="7.600" height="1.500" fill="#4a2f6e"/></g>
<g><rect x="700.8" y="744.0" width="10" height="6.800" rx="1" fill="#fbd5d6" opacity="0.8"/><rect x="701.8" y="744.9" width="8" height="5" rx="0.600" fill="#e5454f"/><path d="M703.2 746.6H707.0L706.0 745.6M708.4 748.2H704.6L705.6 749.2" fill="none" stroke="#fff" stroke-width="0.8"/></g>
<g><rect x="712.1" y="736.0" width="10" height="6.800" rx="1" fill="#fbd5d6" opacity="0.8"/><rect x="713.1" y="736.9" width="8" height="5" rx="0.600" fill="#e5454f"/><path d="M714.5 738.6H718.3L717.3 737.6M719.7 740.2H715.9L716.9 741.2" fill="none" stroke="#fff" stroke-width="0.8"/></g>
<g><circle cx="733.9" cy="570.3" r="4.2" fill="#f9d3d6" opacity="0.7"/><circle cx="733.9" cy="570.3" r="2.500" fill="#f7dfe2" stroke="#cc3350" stroke-width="1.15"/><rect x="730.1" y="569.5" width="7.600" height="1.500" fill="#4a2f6e"/></g>
<g><circle cx="794.4" cy="561.0" r="4.2" fill="#f9d3d6" opacity="0.7"/><circle cx="794.4" cy="561.0" r="2.500" fill="#f7dfe2" stroke="#cc3350" stroke-width="1.15"/><rect x="790.6" y="560.2" width="7.600" height="1.500" fill="#4a2f6e"/></g>
<g><circle cx="851.9" cy="549.7" r="4.2" fill="#f9d3d6" opacity="0.7"/><circle cx="851.9" cy="549.7" r="2.500" fill="#f7dfe2" stroke="#cc3350" stroke-width="1.15"/><rect x="848.1" y="549.0" width="7.600" height="1.500" fill="#4a2f6e"/></g>
<g><circle cx="828.7" cy="588.9" r="4.2" fill="#f9d3d6" opacity="0.7"/><circle cx="828.7" cy="588.9" r="2.500" fill="#f7dfe2" stroke="#cc3350" stroke-width="1.15"/><rect x="824.9" y="588.1" width="7.600" height="1.500" fill="#4a2f6e"/></g>
<g><circle cx="806.5" cy="605.8" r="4.2" fill="#f9d3d6" opacity="0.7"/><circle cx="806.5" cy="605.8" r="2.500" fill="#f7dfe2" stroke="#cc3350" stroke-width="1.15"/><rect x="802.7" y="605.0" width="7.600" height="1.500" fill="#4a2f6e"/></g>
<g><circle cx="773.9" cy="615.8" r="4.2" fill="#f9d3d6" opacity="0.7"/><circle cx="773.9" cy="615.8" r="2.500" fill="#f7dfe2" stroke="#cc3350" stroke-width="1.15"/><rect x="770.1" y="615.0" width="7.600" height="1.500" fill="#4a2f6e"/></g>
<g><circle cx="819.7" cy="624.2" r="4.2" fill="#f9d3d6" opacity="0.7"/><circle cx="819.7" cy="624.2" r="2.500" fill="#f7dfe2" stroke="#cc3350" stroke-width="1.15"/><rect x="815.9" y="623.5" width="7.600" height="1.500" fill="#4a2f6e"/></g>
<g><circle cx="837.4" cy="640.3" r="4.2" fill="#f9d3d6" opacity="0.7"/><circle cx="837.4" cy="640.3" r="2.500" fill="#f7dfe2" stroke="#cc3350" stroke-width="1.15"/><rect x="833.6" y="639.5" width="7.600" height="1.500" fill="#4a2f6e"/></g>
<g><circle cx="884.7" cy="607.7" r="4.2" fill="#f9d3d6" opacity="0.7"/><circle cx="884.7" cy="607.7" r="2.500" fill="#f7dfe2" stroke="#cc3350" stroke-width="1.15"/><rect x="880.9" y="607.0" width="7.600" height="1.500" fill="#4a2f6e"/></g>
<g><circle cx="728.2" cy="644.8" r="4.2" fill="#f9d3d6" opacity="0.7"/><circle cx="728.2" cy="644.8" r="2.500" fill="#f7dfe2" stroke="#cc3350" stroke-width="1.15"/><rect x="724.4" y="644.0" width="7.600" height="1.500" fill="#4a2f6e"/></g>
<g><circle cx="878.2" cy="671.9" r="4.2" fill="#f9d3d6" opacity="0.7"/><circle cx="878.2" cy="671.9" r="2.500" fill="#f7dfe2" stroke="#cc3350" stroke-width="1.15"/><rect x="874.4" y="671.1" width="7.600" height="1.500" fill="#4a2f6e"/></g>
<g><circle cx="897.6" cy="546.8" r="4.2" fill="#f9d3d6" opacity="0.7"/><circle cx="897.6" cy="546.8" r="2.500" fill="#f7dfe2" stroke="#cc3350" stroke-width="1.15"/><rect x="893.8" y="546.0" width="7.600" height="1.500" fill="#4a2f6e"/></g>
<g><rect x="818.4" y="628.5" width="10" height="6.800" rx="1" fill="#fbd5d6" opacity="0.8"/><rect x="819.4" y="629.4" width="8" height="5" rx="0.600" fill="#e5454f"/><path d="M820.8 631.1H824.6L823.6 630.1M826.0 632.7H822.2L823.2 633.7" fill="none" stroke="#fff" stroke-width="0.8"/></g>
<g><rect x="934.4" y="596.0" width="10" height="6.800" rx="1" fill="#fbd5d6" opacity="0.8"/><rect x="935.4" y="596.9" width="8" height="5" rx="0.600" fill="#e5454f"/><path d="M936.8 598.6H940.6L939.6 597.6M942.0 600.2H938.2L939.2 601.2" fill="none" stroke="#fff" stroke-width="0.8"/></g>
<g><circle cx="825.0" cy="696.1" r="4.2" fill="#f9d3d6" opacity="0.7"/><circle cx="825.0" cy="696.1" r="2.500" fill="#f7dfe2" stroke="#cc3350" stroke-width="1.15"/><rect x="821.2" y="695.4" width="7.600" height="1.500" fill="#4a2f6e"/></g>
<g><circle cx="766.9" cy="710.2" r="4.2" fill="#f9d3d6" opacity="0.7"/><circle cx="766.9" cy="710.2" r="2.500" fill="#f7dfe2" stroke="#cc3350" stroke-width="1.15"/><rect x="763.1" y="709.5" width="7.600" height="1.500" fill="#4a2f6e"/></g>
<g><circle cx="894.0" cy="713.9" r="4.2" fill="#f9d3d6" opacity="0.7"/><circle cx="894.0" cy="713.9" r="2.500" fill="#f7dfe2" stroke="#cc3350" stroke-width="1.15"/><rect x="890.2" y="713.1" width="7.600" height="1.500" fill="#4a2f6e"/></g>
<g><circle cx="716.1" cy="747.4" r="4.2" fill="#f9d3d6" opacity="0.7"/><circle cx="716.1" cy="747.4" r="2.500" fill="#f7dfe2" stroke="#cc3350" stroke-width="1.15"/><rect x="712.3" y="746.6" width="7.600" height="1.500" fill="#4a2f6e"/></g>
<g><circle cx="777.4" cy="796.9" r="4.2" fill="#f9d3d6" opacity="0.7"/><circle cx="777.4" cy="796.9" r="2.500" fill="#f7dfe2" stroke="#cc3350" stroke-width="1.15"/><rect x="773.6" y="796.1" width="7.600" height="1.500" fill="#4a2f6e"/></g>
<g><circle cx="927.4" cy="805.8" r="4.2" fill="#f9d3d6" opacity="0.7"/><circle cx="927.4" cy="805.8" r="2.500" fill="#f7dfe2" stroke="#cc3350" stroke-width="1.15"/><rect x="923.6" y="805.0" width="7.600" height="1.500" fill="#4a2f6e"/></g>
<g><rect x="712.7" y="735.8" width="10" height="6.800" rx="1" fill="#fbd5d6" opacity="0.8"/><rect x="713.7" y="736.7" width="8" height="5" rx="0.600" fill="#e5454f"/><path d="M715.1 738.4H718.9L717.9 737.4M720.3 740.0H716.5L717.5 741.0" fill="none" stroke="#fff" stroke-width="0.8"/></g>
<g><rect x="701.5" y="744.0" width="10" height="6.800" rx="1" fill="#fbd5d6" opacity="0.8"/><rect x="702.5" y="744.9" width="8" height="5" rx="0.600" fill="#e5454f"/><path d="M703.9 746.6H707.7L706.7 745.6M709.1 748.2H705.3L706.3 749.2" fill="none" stroke="#fff" stroke-width="0.8"/></g>
<g><circle cx="975.3" cy="572.3" r="4.2" fill="#f9d3d6" opacity="0.7"/><circle cx="975.3" cy="572.3" r="2.500" fill="#f7dfe2" stroke="#cc3350" stroke-width="1.15"/><rect x="971.5" y="571.5" width="7.600" height="1.500" fill="#4a2f6e"/></g>
<g><circle cx="1020.8" cy="587.1" r="4.2" fill="#f9d3d6" opacity="0.7"/><circle cx="1020.8" cy="587.1" r="2.500" fill="#f7dfe2" stroke="#cc3350" stroke-width="1.15"/><rect x="1017.0" y="586.4" width="7.600" height="1.500" fill="#4a2f6e"/></g>
<g><circle cx="1032.9" cy="609.4" r="4.2" fill="#f9d3d6" opacity="0.7"/><circle cx="1032.9" cy="609.4" r="2.500" fill="#f7dfe2" stroke="#cc3350" stroke-width="1.15"/><rect x="1029.1" y="608.6" width="7.600" height="1.500" fill="#4a2f6e"/></g>
<g><circle cx="1093.7" cy="581.6" r="4.2" fill="#f9d3d6" opacity="0.7"/><circle cx="1093.7" cy="581.6" r="2.500" fill="#f7dfe2" stroke="#cc3350" stroke-width="1.15"/><rect x="1089.9" y="580.9" width="7.600" height="1.500" fill="#4a2f6e"/></g>
<g><circle cx="1111.5" cy="571.0" r="4.2" fill="#f9d3d6" opacity="0.7"/><circle cx="1111.5" cy="571.0" r="2.500" fill="#f7dfe2" stroke="#cc3350" stroke-width="1.15"/><rect x="1107.7" y="570.2" width="7.600" height="1.500" fill="#4a2f6e"/></g>
<g><circle cx="1086.1" cy="616.9" r="4.2" fill="#f9d3d6" opacity="0.7"/><circle cx="1086.1" cy="616.9" r="2.500" fill="#f7dfe2" stroke="#cc3350" stroke-width="1.15"/><rect x="1082.3" y="616.1" width="7.600" height="1.500" fill="#4a2f6e"/></g>
<g><circle cx="1039.0" cy="654.2" r="4.2" fill="#f9d3d6" opacity="0.7"/><circle cx="1039.0" cy="654.2" r="2.500" fill="#f7dfe2" stroke="#cc3350" stroke-width="1.15"/><rect x="1035.2" y="653.5" width="7.600" height="1.500" fill="#4a2f6e"/></g>
<g><circle cx="1096.6" cy="612.9" r="4.3" fill="#bfe9ee" opacity="0.8"/><circle cx="1096.6" cy="612.9" r="2.700" fill="#e4f7f9" stroke="#2aaec2" stroke-width="1.15"/><rect x="1092.8" y="612.1" width="7.600" height="1.500" fill="#2a7f98"/></g>
<g><rect x="1055.3" y="550.3" width="10" height="6.800" rx="1" fill="#fbd5d6" opacity="0.8"/><rect x="1056.3" y="551.2" width="8" height="5" rx="0.600" fill="#e5454f"/><path d="M1057.7 552.9H1061.5L1060.5 551.9M1062.9 554.5H1059.1L1060.1 555.5" fill="none" stroke="#fff" stroke-width="0.8"/></g>
<g><rect x="937.9" y="578.2" width="10" height="6.800" rx="1" fill="#fbd5d6" opacity="0.8"/><rect x="938.9" y="579.1" width="8" height="5" rx="0.600" fill="#e5454f"/><path d="M940.3 580.8H944.1L943.1 579.8M945.5 582.4H941.7L942.7 583.4" fill="none" stroke="#fff" stroke-width="0.8"/></g>
<g><rect x="936.0" y="596.0" width="10" height="6.800" rx="1" fill="#fbd5d6" opacity="0.8"/><rect x="937.0" y="596.9" width="8" height="5" rx="0.600" fill="#e5454f"/><path d="M938.4 598.6H942.2L941.2 597.6M943.6 600.2H939.8L940.8 601.2" fill="none" stroke="#fff" stroke-width="0.8"/></g>
<g><rect x="982.4" y="590.1" width="10" height="6.800" rx="1" fill="#fbd5d6" opacity="0.8"/><rect x="983.4" y="591.0" width="8" height="5" rx="0.600" fill="#e5454f"/><path d="M984.8 592.7H988.6L987.6 591.7M990.0 594.3H986.2L987.2 595.3" fill="none" stroke="#fff" stroke-width="0.8"/></g>
<g><rect x="1008.5" y="599.5" width="10" height="6.800" rx="1" fill="#fbd5d6" opacity="0.8"/><rect x="1009.5" y="600.4" width="8" height="5" rx="0.600" fill="#e5454f"/><path d="M1010.9 602.1H1014.7L1013.7 601.1M1016.1 603.7H1012.3L1013.3 604.7" fill="none" stroke="#fff" stroke-width="0.8"/></g>
<g><rect x="1068.2" y="597.6" width="10" height="6.800" rx="1" fill="#fbd5d6" opacity="0.8"/><rect x="1069.2" y="598.5" width="8" height="5" rx="0.600" fill="#e5454f"/><path d="M1070.6 600.2H1074.4L1073.4 599.2M1075.8 601.8H1072.0L1073.0 602.8" fill="none" stroke="#fff" stroke-width="0.8"/></g>
<g><rect x="1023.9" y="650.8" width="10" height="6.800" rx="1" fill="#fbd5d6" opacity="0.8"/><rect x="1024.9" y="651.7" width="8" height="5" rx="0.600" fill="#e5454f"/><path d="M1026.3 653.4H1030.1L1029.1 652.4M1031.5 655.0H1027.7L1028.7 656.0" fill="none" stroke="#fff" stroke-width="0.8"/></g>
<g><rect x="1026.3" y="660.0" width="10" height="6.800" rx="1" fill="#fbd5d6" opacity="0.8"/><rect x="1027.3" y="660.9" width="8" height="5" rx="0.600" fill="#e5454f"/><path d="M1028.7 662.6H1032.5L1031.5 661.6M1033.9 664.2H1030.1L1031.1 665.2" fill="none" stroke="#fff" stroke-width="0.8"/></g>
<g><circle cx="995.8" cy="694.5" r="4.2" fill="#f9d3d6" opacity="0.7"/><circle cx="995.8" cy="694.5" r="2.500" fill="#f7dfe2" stroke="#cc3350" stroke-width="1.15"/><rect x="992.0" y="693.8" width="7.600" height="1.500" fill="#4a2f6e"/></g>
<g><circle cx="956.8" cy="757.7" r="4.2" fill="#f9d3d6" opacity="0.7"/><circle cx="956.8" cy="757.7" r="2.500" fill="#f7dfe2" stroke="#cc3350" stroke-width="1.15"/><rect x="953.0" y="757.0" width="7.600" height="1.500" fill="#4a2f6e"/></g>
<g><circle cx="1157.1" cy="720.3" r="4.2" fill="#f9d3d6" opacity="0.7"/><circle cx="1157.1" cy="720.3" r="2.500" fill="#f7dfe2" stroke="#cc3350" stroke-width="1.15"/><rect x="1153.3" y="719.5" width="7.600" height="1.500" fill="#4a2f6e"/></g>
<g><circle cx="927.3" cy="806.1" r="4.2" fill="#f9d3d6" opacity="0.7"/><circle cx="927.3" cy="806.1" r="2.500" fill="#f7dfe2" stroke="#cc3350" stroke-width="1.15"/><rect x="923.5" y="805.4" width="7.600" height="1.500" fill="#4a2f6e"/></g>
<g><rect x="965.0" y="748.7" width="10" height="6.800" rx="1" fill="#fbd5d6" opacity="0.8"/><rect x="966.0" y="749.6" width="8" height="5" rx="0.600" fill="#e5454f"/><path d="M967.4 751.3H971.2L970.2 750.3M972.6 752.9H968.8L969.8 753.9" fill="none" stroke="#fff" stroke-width="0.8"/></g>
<g><rect x="1190.6" y="603.1" width="10" height="6.800" rx="1" fill="#fbd5d6" opacity="0.8"/><rect x="1191.6" y="604.0" width="8" height="5" rx="0.600" fill="#e5454f"/><path d="M1193.0 605.7H1196.8L1195.8 604.7M1198.2 607.3H1194.4L1195.4 608.3" fill="none" stroke="#fff" stroke-width="0.8"/></g>
<g><rect x="1281.3" y="591.1" width="10" height="6.800" rx="1" fill="#fbd5d6" opacity="0.8"/><rect x="1282.3" y="592.0" width="8" height="5" rx="0.600" fill="#e5454f"/><path d="M1283.7 593.7H1287.5L1286.5 592.7M1288.9 595.3H1285.1L1286.1 596.3" fill="none" stroke="#fff" stroke-width="0.8"/></g>
<g><rect x="1194.4" y="660.3" width="10" height="6.800" rx="1" fill="#fbd5d6" opacity="0.8"/><rect x="1195.4" y="661.2" width="8" height="5" rx="0.600" fill="#e5454f"/><path d="M1196.8 662.9H1200.6L1199.6 661.9M1202.0 664.5H1198.2L1199.2 665.5" fill="none" stroke="#fff" stroke-width="0.8"/></g>
<g><circle cx="1359.7" cy="620.3" r="4.3" fill="#bfe9ee" opacity="0.8"/><circle cx="1359.7" cy="620.3" r="2.700" fill="#e4f7f9" stroke="#2aaec2" stroke-width="1.15"/><rect x="1355.9" y="619.5" width="7.600" height="1.500" fill="#2a7f98"/></g>
<g><circle cx="1157.4" cy="720.6" r="4.2" fill="#f9d3d6" opacity="0.7"/><circle cx="1157.4" cy="720.6" r="2.500" fill="#f7dfe2" stroke="#cc3350" stroke-width="1.15"/><rect x="1153.6" y="719.9" width="7.600" height="1.500" fill="#4a2f6e"/></g>
<g><rect x="1216.8" y="694.7" width="10" height="6.800" rx="1" fill="#fbd5d6" opacity="0.8"/><rect x="1217.8" y="695.6" width="8" height="5" rx="0.600" fill="#e5454f"/><path d="M1219.2 697.3H1223.0L1222.0 696.3M1224.4 698.9H1220.6L1221.6 699.9" fill="none" stroke="#fff" stroke-width="0.8"/></g>
<g><rect x="1230.6" y="718.1" width="10" height="6.800" rx="1" fill="#fbd5d6" opacity="0.8"/><rect x="1231.6" y="719.0" width="8" height="5" rx="0.600" fill="#e5454f"/><path d="M1233.0 720.7H1236.8L1235.8 719.7M1238.2 722.3H1234.4L1235.4 723.3" fill="none" stroke="#fff" stroke-width="0.8"/></g>
<g><rect x="1239.5" y="756.9" width="10" height="6.800" rx="1" fill="#fbd5d6" opacity="0.8"/><rect x="1240.5" y="757.8" width="8" height="5" rx="0.600" fill="#e5454f"/><path d="M1241.9 759.5H1245.7L1244.7 758.5M1247.1 761.1H1243.3L1244.3 762.1" fill="none" stroke="#fff" stroke-width="0.8"/></g>
<g><rect x="1193.4" y="790.8" width="10" height="6.800" rx="1" fill="#fbd5d6" opacity="0.8"/><rect x="1194.4" y="791.7" width="8" height="5" rx="0.600" fill="#e5454f"/><path d="M1195.8 793.4H1199.6L1198.6 792.4M1201.0 795.0H1197.2L1198.2 796.0" fill="none" stroke="#fff" stroke-width="0.8"/></g>
<g><circle cx="1426.1" cy="573.1" r="4.3" fill="#bfe9ee" opacity="0.8"/><circle cx="1426.1" cy="573.1" r="2.700" fill="#e4f7f9" stroke="#2aaec2" stroke-width="1.15"/><rect x="1422.3" y="572.4" width="7.600" height="1.500" fill="#2a7f98"/></g>
<g><circle cx="1432.6" cy="606.5" r="4.3" fill="#bfe9ee" opacity="0.8"/><circle cx="1432.6" cy="606.5" r="2.700" fill="#e4f7f9" stroke="#2aaec2" stroke-width="1.15"/><rect x="1428.8" y="605.8" width="7.600" height="1.500" fill="#2a7f98"/></g>
<g><circle cx="1361.3" cy="620.3" r="4.3" fill="#bfe9ee" opacity="0.8"/><circle cx="1361.3" cy="620.3" r="2.700" fill="#e4f7f9" stroke="#2aaec2" stroke-width="1.15"/><rect x="1357.5" y="619.5" width="7.600" height="1.500" fill="#2a7f98"/></g>
<g><circle cx="1391.5" cy="637.3" r="4.3" fill="#bfe9ee" opacity="0.8"/><circle cx="1391.5" cy="637.3" r="2.700" fill="#e4f7f9" stroke="#2aaec2" stroke-width="1.15"/><rect x="1387.7" y="636.5" width="7.600" height="1.500" fill="#2a7f98"/></g>
<g><circle cx="1407.1" cy="638.7" r="4.3" fill="#bfe9ee" opacity="0.8"/><circle cx="1407.1" cy="638.7" r="2.700" fill="#e4f7f9" stroke="#2aaec2" stroke-width="1.15"/><rect x="1403.3" y="638.0" width="7.600" height="1.500" fill="#2a7f98"/></g>
<g><circle cx="1464.5" cy="631.1" r="4.3" fill="#bfe9ee" opacity="0.8"/><circle cx="1464.5" cy="631.1" r="2.700" fill="#e4f7f9" stroke="#2aaec2" stroke-width="1.15"/><rect x="1460.7" y="630.4" width="7.600" height="1.500" fill="#2a7f98"/></g>
<g><circle cx="1488.5" cy="621.5" r="4.3" fill="#bfe9ee" opacity="0.8"/><circle cx="1488.5" cy="621.5" r="2.700" fill="#e4f7f9" stroke="#2aaec2" stroke-width="1.15"/><rect x="1484.7" y="620.8" width="7.600" height="1.500" fill="#2a7f98"/></g>
<g><circle cx="1393.4" cy="656.6" r="4.3" fill="#bfe9ee" opacity="0.8"/><circle cx="1393.4" cy="656.6" r="2.700" fill="#e4f7f9" stroke="#2aaec2" stroke-width="1.15"/><rect x="1389.6" y="655.9" width="7.600" height="1.500" fill="#2a7f98"/></g>
<g><circle cx="1392.3" cy="673.9" r="4.3" fill="#bfe9ee" opacity="0.8"/><circle cx="1392.3" cy="673.9" r="2.700" fill="#e4f7f9" stroke="#2aaec2" stroke-width="1.15"/><rect x="1388.5" y="673.1" width="7.600" height="1.500" fill="#2a7f98"/></g>
<g><circle cx="1554.0" cy="573.9" r="4.3" fill="#bfe9ee" opacity="0.8"/><circle cx="1554.0" cy="573.9" r="2.700" fill="#e4f7f9" stroke="#2aaec2" stroke-width="1.15"/><rect x="1550.2" y="573.1" width="7.600" height="1.500" fill="#2a7f98"/></g>
<g><rect x="1538.9" y="570.5" width="10" height="6.800" rx="1" fill="#fbd5d6" opacity="0.8"/><rect x="1539.9" y="571.4" width="8" height="5" rx="0.600" fill="#e5454f"/><path d="M1541.3 573.1H1545.1L1544.1 572.1M1546.5 574.7H1542.7L1543.7 575.7" fill="none" stroke="#fff" stroke-width="0.8"/></g>
<g><circle cx="1409.2" cy="671.9" r="4.3" fill="#f8c8cc" opacity="0.75"/><circle cx="1409.2" cy="671.9" r="2.900" fill="#d23a48" stroke="#c02334" stroke-width="1"/><rect x="1405.2" y="671.2" width="8" height="1.400" fill="#7a2030"/></g>
<g><circle cx="1410.0" cy="701.8" r="4.3" fill="#bfe9ee" opacity="0.8"/><circle cx="1410.0" cy="701.8" r="2.700" fill="#e4f7f9" stroke="#2aaec2" stroke-width="1.15"/><rect x="1406.2" y="701.0" width="7.600" height="1.500" fill="#2a7f98"/></g>
<g><circle cx="1425.3" cy="738.1" r="4.3" fill="#bfe9ee" opacity="0.8"/><circle cx="1425.3" cy="738.1" r="2.700" fill="#e4f7f9" stroke="#2aaec2" stroke-width="1.15"/><rect x="1421.5" y="737.4" width="7.600" height="1.500" fill="#2a7f98"/></g>
<g><circle cx="1425.8" cy="787.7" r="4.3" fill="#bfe9ee" opacity="0.8"/><circle cx="1425.8" cy="787.7" r="2.700" fill="#e4f7f9" stroke="#2aaec2" stroke-width="1.15"/><rect x="1422.0" y="787.0" width="7.600" height="1.500" fill="#2a7f98"/></g>
<g><circle cx="1449.5" cy="809.0" r="4.3" fill="#bfe9ee" opacity="0.8"/><circle cx="1449.5" cy="809.0" r="2.700" fill="#e4f7f9" stroke="#2aaec2" stroke-width="1.15"/><rect x="1445.7" y="808.2" width="7.600" height="1.500" fill="#2a7f98"/></g>
<g><circle cx="1516.5" cy="706.6" r="4.3" fill="#f8c8cc" opacity="0.75"/><circle cx="1516.5" cy="706.6" r="2.900" fill="#d23a48" stroke="#c02334" stroke-width="1"/><rect x="1512.5" y="705.9" width="8" height="1.400" fill="#7a2030"/></g>
<g><rect x="296.0" y="605.7" width="31.8" height="11.6" rx="1.4" fill="#62a253" stroke="#cdebc6" stroke-width="1"/><text x="311.9" y="614.4" font-size="7.9" font-weight="700" text-anchor="middle" fill="#eef3bd">A3220</text></g>
<g><rect x="395.5" y="543.6" width="27.4" height="11.6" rx="0.800" fill="#ffffff" stroke="#8d8d8d" stroke-width="0.9"/><text x="409.2" y="552.2" font-size="7.9" font-weight="700" text-anchor="middle" fill="#55595f">B412</text></g>
<g><rect x="366.0" y="572.4" width="27.4" height="11.6" rx="0.800" fill="#ffffff" stroke="#8d8d8d" stroke-width="0.9"/><text x="379.7" y="581.1" font-size="7.9" font-weight="700" text-anchor="middle" fill="#55595f">B415</text></g>
<g><rect x="426.0" y="555.5" width="31.8" height="11.6" rx="1.4" fill="#62a253" stroke="#cdebc6" stroke-width="1"/><text x="441.9" y="564.1" font-size="7.9" font-weight="700" text-anchor="middle" fill="#eef3bd">A4207</text></g>
<g><rect x="430.7" y="639.7" width="31.8" height="11.6" rx="1.4" fill="#62a253" stroke="#cdebc6" stroke-width="1"/><text x="446.6" y="648.4" font-size="7.9" font-weight="700" text-anchor="middle" fill="#eef3bd">A4204</text></g>
<g><rect x="272.9" y="664.5" width="27.4" height="11.6" rx="1.4" fill="#62a253" stroke="#cdebc6" stroke-width="1"/><text x="286.6" y="673.1" font-size="7.9" font-weight="700" text-anchor="middle" fill="#eef3bd">A219</text></g>
<g><rect x="415.3" y="717.7" width="27.4" height="11.6" rx="0.800" fill="#ffffff" stroke="#8d8d8d" stroke-width="0.9"/><text x="429.0" y="726.4" font-size="7.9" font-weight="700" text-anchor="middle" fill="#55595f">B316</text></g>
<g><rect x="355.5" y="781.1" width="18.6" height="11.6" rx="1.4" fill="#62a253" stroke="#cdebc6" stroke-width="1"/><text x="364.8" y="789.8" font-size="7.9" font-weight="700" text-anchor="middle" fill="#eef3bd">A4</text></g>
<g><rect x="518.4" y="599.5" width="27.4" height="11.6" rx="1.4" fill="#62a253" stroke="#cdebc6" stroke-width="1"/><text x="532.1" y="608.1" font-size="7.9" font-weight="700" text-anchor="middle" fill="#eef3bd">A402</text></g>
<g><rect x="594.2" y="586.3" width="27.4" height="11.6" rx="1.4" fill="#62a253" stroke="#cdebc6" stroke-width="1"/><text x="607.9" y="595.0" font-size="7.9" font-weight="700" text-anchor="middle" fill="#eef3bd">A402</text></g>
<g><rect x="633.0" y="598.4" width="31.8" height="11.6" rx="1.4" fill="#62a253" stroke="#cdebc6" stroke-width="1"/><text x="648.9" y="607.1" font-size="7.9" font-weight="700" text-anchor="middle" fill="#eef3bd">A4202</text></g>
<g><rect x="675.1" y="557.6" width="31.8" height="11.6" rx="1.4" fill="#62a253" stroke="#cdebc6" stroke-width="1"/><text x="691.0" y="566.2" font-size="7.9" font-weight="700" text-anchor="middle" fill="#eef3bd">A5204</text></g>
<g><rect x="658.5" y="635.8" width="31.8" height="11.6" rx="1.4" fill="#62a253" stroke="#cdebc6" stroke-width="1"/><text x="674.4" y="644.5" font-size="7.9" font-weight="700" text-anchor="middle" fill="#eef3bd">A4202</text></g>
<g><rect x="519.5" y="685.2" width="27.4" height="11.6" rx="1.4" fill="#62a253" stroke="#cdebc6" stroke-width="1"/><text x="533.2" y="693.9" font-size="7.9" font-weight="700" text-anchor="middle" fill="#eef3bd">A315</text></g>
<g><rect x="604.6" y="702.1" width="18.6" height="11.6" rx="1.4" fill="#62a253" stroke="#cdebc6" stroke-width="1"/><text x="613.9" y="710.8" font-size="7.9" font-weight="700" text-anchor="middle" fill="#eef3bd">A4</text></g>
<g><rect x="573.2" y="743.9" width="27.4" height="11.6" rx="1.4" fill="#62a253" stroke="#cdebc6" stroke-width="1"/><text x="586.9" y="752.6" font-size="7.9" font-weight="700" text-anchor="middle" fill="#eef3bd">A308</text></g>
<g><rect x="491.6" y="721.0" width="27.4" height="11.6" rx="0.800" fill="#ffffff" stroke="#8d8d8d" stroke-width="0.9"/><text x="505.3" y="729.6" font-size="7.9" font-weight="700" text-anchor="middle" fill="#55595f">B325</text></g>
<g><rect x="686.1" y="704.8" width="27.4" height="11.6" rx="1.4" fill="#62a253" stroke="#cdebc6" stroke-width="1"/><text x="699.8" y="713.5" font-size="7.9" font-weight="700" text-anchor="middle" fill="#eef3bd">A302</text></g>
<g><rect x="658.5" y="739.5" width="31.8" height="11.6" rx="1.4" fill="#62a253" stroke="#cdebc6" stroke-width="1"/><text x="674.4" y="748.1" font-size="7.9" font-weight="700" text-anchor="middle" fill="#eef3bd">A3217</text></g>
<g><rect x="656.0" y="802.4" width="31.8" height="11.6" rx="1.4" fill="#62a253" stroke="#cdebc6" stroke-width="1"/><text x="671.9" y="811.1" font-size="7.9" font-weight="700" text-anchor="middle" fill="#eef3bd">A3216</text></g>
<g><rect x="816.7" y="545.2" width="23.0" height="11.6" rx="1.4" fill="#62a253" stroke="#cdebc6" stroke-width="1"/><text x="828.2" y="553.9" font-size="7.9" font-weight="700" text-anchor="middle" fill="#eef3bd">A40</text></g>
<g><rect x="904.9" y="556.5" width="18.6" height="11.6" rx="1.4" fill="#62a253" stroke="#cdebc6" stroke-width="1"/><text x="914.2" y="565.1" font-size="7.9" font-weight="700" text-anchor="middle" fill="#eef3bd">A4</text></g>
<g><rect x="850.8" y="584.5" width="27.4" height="11.6" rx="1.4" fill="#62a253" stroke="#cdebc6" stroke-width="1"/><text x="864.5" y="593.1" font-size="7.9" font-weight="700" text-anchor="middle" fill="#eef3bd">A301</text></g>
<g><rect x="817.4" y="666.5" width="31.3" height="11.6" rx="1.4" fill="#62a253" stroke="#cdebc6" stroke-width="1"/><text x="833.1" y="675.1" font-size="7.9" font-weight="700" text-anchor="middle" fill="#eef3bd">A3211</text></g>
<g><rect x="855.1" y="677.4" width="31.8" height="11.6" rx="1.4" fill="#62a253" stroke="#cdebc6" stroke-width="1"/><text x="871.0" y="686.1" font-size="7.9" font-weight="700" text-anchor="middle" fill="#eef3bd">A3200</text></g>
<g><rect x="909.4" y="701.3" width="27.4" height="11.6" rx="1.4" fill="#62a253" stroke="#cdebc6" stroke-width="1"/><text x="923.1" y="710.0" font-size="7.9" font-weight="700" text-anchor="middle" fill="#eef3bd">A301</text></g>
<g><rect x="838.1" y="722.6" width="31.8" height="11.6" rx="1.4" fill="#62a253" stroke="#cdebc6" stroke-width="1"/><text x="854.0" y="731.2" font-size="7.9" font-weight="700" text-anchor="middle" fill="#eef3bd">A3036</text></g>
<g><rect x="888.9" y="793.6" width="31.8" height="11.6" rx="1.4" fill="#62a253" stroke="#cdebc6" stroke-width="1"/><text x="904.8" y="802.2" font-size="7.9" font-weight="700" text-anchor="middle" fill="#eef3bd">A3204</text></g>
<g><rect x="797.3" y="803.2" width="27.4" height="11.6" rx="1.4" fill="#62a253" stroke="#cdebc6" stroke-width="1"/><text x="811.0" y="811.9" font-size="7.9" font-weight="700" text-anchor="middle" fill="#eef3bd">A202</text></g>
<g><rect x="1011.6" y="547.9" width="31.3" height="11.6" rx="1.4" fill="#62a253" stroke="#cdebc6" stroke-width="1"/><text x="1027.3" y="556.6" font-size="7.9" font-weight="700" text-anchor="middle" fill="#eef3bd">A1211</text></g>
<g><rect x="1104.6" y="595.5" width="31.8" height="11.6" rx="1.4" fill="#62a253" stroke="#cdebc6" stroke-width="1"/><text x="1120.5" y="604.1" font-size="7.9" font-weight="700" text-anchor="middle" fill="#eef3bd">A1210</text></g>
<g><rect x="1086.6" y="631.8" width="27.4" height="11.6" rx="1.4" fill="#62a253" stroke="#cdebc6" stroke-width="1"/><text x="1100.3" y="640.5" font-size="7.9" font-weight="700" text-anchor="middle" fill="#eef3bd">A100</text></g>
<g><rect x="983.7" y="666.5" width="27.4" height="11.6" rx="0.800" fill="#ffffff" stroke="#8d8d8d" stroke-width="0.9"/><text x="997.4" y="675.1" font-size="7.9" font-weight="700" text-anchor="middle" fill="#55595f">B300</text></g>
<g><rect x="1042.8" y="690.0" width="31.8" height="11.6" rx="1.4" fill="#62a253" stroke="#cdebc6" stroke-width="1"/><text x="1058.7" y="698.6" font-size="7.9" font-weight="700" text-anchor="middle" fill="#eef3bd">A2205</text></g>
<g><rect x="977.8" y="749.5" width="27.4" height="11.6" rx="1.4" fill="#62a253" stroke="#cdebc6" stroke-width="1"/><text x="991.5" y="758.1" font-size="7.9" font-weight="700" text-anchor="middle" fill="#eef3bd">A201</text></g>
<g><rect x="1079.1" y="750.3" width="31.8" height="11.6" rx="1.4" fill="#62a253" stroke="#cdebc6" stroke-width="1"/><text x="1095.0" y="759.0" font-size="7.9" font-weight="700" text-anchor="middle" fill="#eef3bd">A2206</text></g>
<g><rect x="1065.2" y="790.3" width="18.6" height="11.6" rx="1.4" fill="#62a253" stroke="#cdebc6" stroke-width="1"/><text x="1074.5" y="799.0" font-size="7.9" font-weight="700" text-anchor="middle" fill="#eef3bd">A2</text></g>
<g><rect x="1209.1" y="613.2" width="31.8" height="11.6" rx="1.4" fill="#62a253" stroke="#cdebc6" stroke-width="1"/><text x="1225.0" y="621.9" font-size="7.9" font-weight="700" text-anchor="middle" fill="#eef3bd">A1203</text></g>
<g><rect x="1226.6" y="634.5" width="27.4" height="11.6" rx="1.4" fill="#62a253" stroke="#cdebc6" stroke-width="1"/><text x="1240.3" y="643.1" font-size="7.9" font-weight="700" text-anchor="middle" fill="#eef3bd">A101</text></g>
<g><rect x="1341.4" y="603.9" width="31.8" height="11.6" rx="1.4" fill="#62a253" stroke="#cdebc6" stroke-width="1"/><text x="1357.3" y="612.6" font-size="7.9" font-weight="700" text-anchor="middle" fill="#eef3bd">A1261</text></g>
<g><rect x="1331.0" y="631.9" width="31.8" height="11.6" rx="1.4" fill="#62a253" stroke="#cdebc6" stroke-width="1"/><text x="1346.9" y="640.6" font-size="7.9" font-weight="700" text-anchor="middle" fill="#eef3bd">A1203</text></g>
<g><rect x="1297.8" y="692.7" width="27.4" height="11.6" rx="0.800" fill="#ffffff" stroke="#8d8d8d" stroke-width="0.9"/><text x="1311.5" y="701.4" font-size="7.9" font-weight="700" text-anchor="middle" fill="#55595f">B205</text></g>
<g><rect x="1269.8" y="762.1" width="27.4" height="11.6" rx="0.800" fill="#ffffff" stroke="#8d8d8d" stroke-width="0.9"/><text x="1283.5" y="770.8" font-size="7.9" font-weight="700" text-anchor="middle" fill="#55595f">B206</text></g>
<g><rect x="1273.4" y="796.0" width="27.4" height="11.6" rx="1.4" fill="#62a253" stroke="#cdebc6" stroke-width="1"/><text x="1287.1" y="804.6" font-size="7.9" font-weight="700" text-anchor="middle" fill="#eef3bd">A200</text></g>
<g><rect x="1169.7" y="802.4" width="31.8" height="11.6" rx="1.4" fill="#62a253" stroke="#cdebc6" stroke-width="1"/><text x="1185.6" y="811.1" font-size="7.9" font-weight="700" text-anchor="middle" fill="#eef3bd">A2208</text></g>
<g><rect x="1465.4" y="594.7" width="23.0" height="11.6" rx="1.4" fill="#62a253" stroke="#cdebc6" stroke-width="1"/><text x="1476.9" y="603.4" font-size="7.9" font-weight="700" text-anchor="middle" fill="#eef3bd">A13</text></g>
<g><rect x="1511.4" y="610.3" width="31.8" height="11.6" rx="1.4" fill="#62a253" stroke="#cdebc6" stroke-width="1"/><text x="1527.3" y="619.0" font-size="7.9" font-weight="700" text-anchor="middle" fill="#eef3bd">A1020</text></g>
<g><rect x="1540.8" y="578.9" width="31.3" height="11.6" rx="1.4" fill="#62a253" stroke="#cdebc6" stroke-width="1"/><text x="1556.5" y="587.6" font-size="7.9" font-weight="700" text-anchor="middle" fill="#eef3bd">A1011</text></g>
<g><rect x="1414.3" y="636.6" width="31.8" height="11.6" rx="1.4" fill="#62a253" stroke="#cdebc6" stroke-width="1"/><text x="1430.2" y="645.2" font-size="7.9" font-weight="700" text-anchor="middle" fill="#eef3bd">A1261</text></g>
<g><rect x="1454.4" y="652.7" width="27.4" height="11.6" rx="1.4" fill="#62a253" stroke="#cdebc6" stroke-width="1"/><text x="1468.1" y="661.4" font-size="7.9" font-weight="700" text-anchor="middle" fill="#eef3bd">A102</text></g>
<g><rect x="1386.0" y="799.2" width="31.8" height="11.6" rx="1.4" fill="#62a253" stroke="#cdebc6" stroke-width="1"/><text x="1401.9" y="807.9" font-size="7.9" font-weight="700" text-anchor="middle" fill="#eef3bd">A1206</text></g>
<g><rect x="1562.4" y="796.0" width="27.4" height="11.6" rx="1.4" fill="#62a253" stroke="#cdebc6" stroke-width="1"/><text x="1576.1" y="804.6" font-size="7.9" font-weight="700" text-anchor="middle" fill="#eef3bd">A102</text></g>
</g>
<text x="1277.5" y="791.8" font-size="22.5" fill="#26262e" textLength="63" lengthAdjust="spacingAndGlyphs">51.5°N</text>
<text x="1361" y="791.8" font-size="22.5" fill="#26262e" textLength="56" lengthAdjust="spacingAndGlyphs">0.1°W</text>
<path d="M1439 776.800V790.500M1439 783.300H1563.200M1514.800 776.800V783.300M1563.200 783.300V790.500" fill="none" stroke="#23232d" stroke-width="2.200"/>
<text x="1476.3" y="776.8" font-size="9.8" font-weight="700" text-anchor="middle" fill="#1c1c24" font-family="DejaVu Sans, Liberation Sans, sans-serif" style="font-family:'DejaVu Sans','Liberation Sans',sans-serif">1 km</text>
<text x="1499.5" y="798.3" font-size="9.8" font-weight="700" text-anchor="middle" fill="#1c1c24" style="font-family:'DejaVu Sans','Liberation Sans',sans-serif">1 mi</text>
</svg>
</div>
</body>
</html>
